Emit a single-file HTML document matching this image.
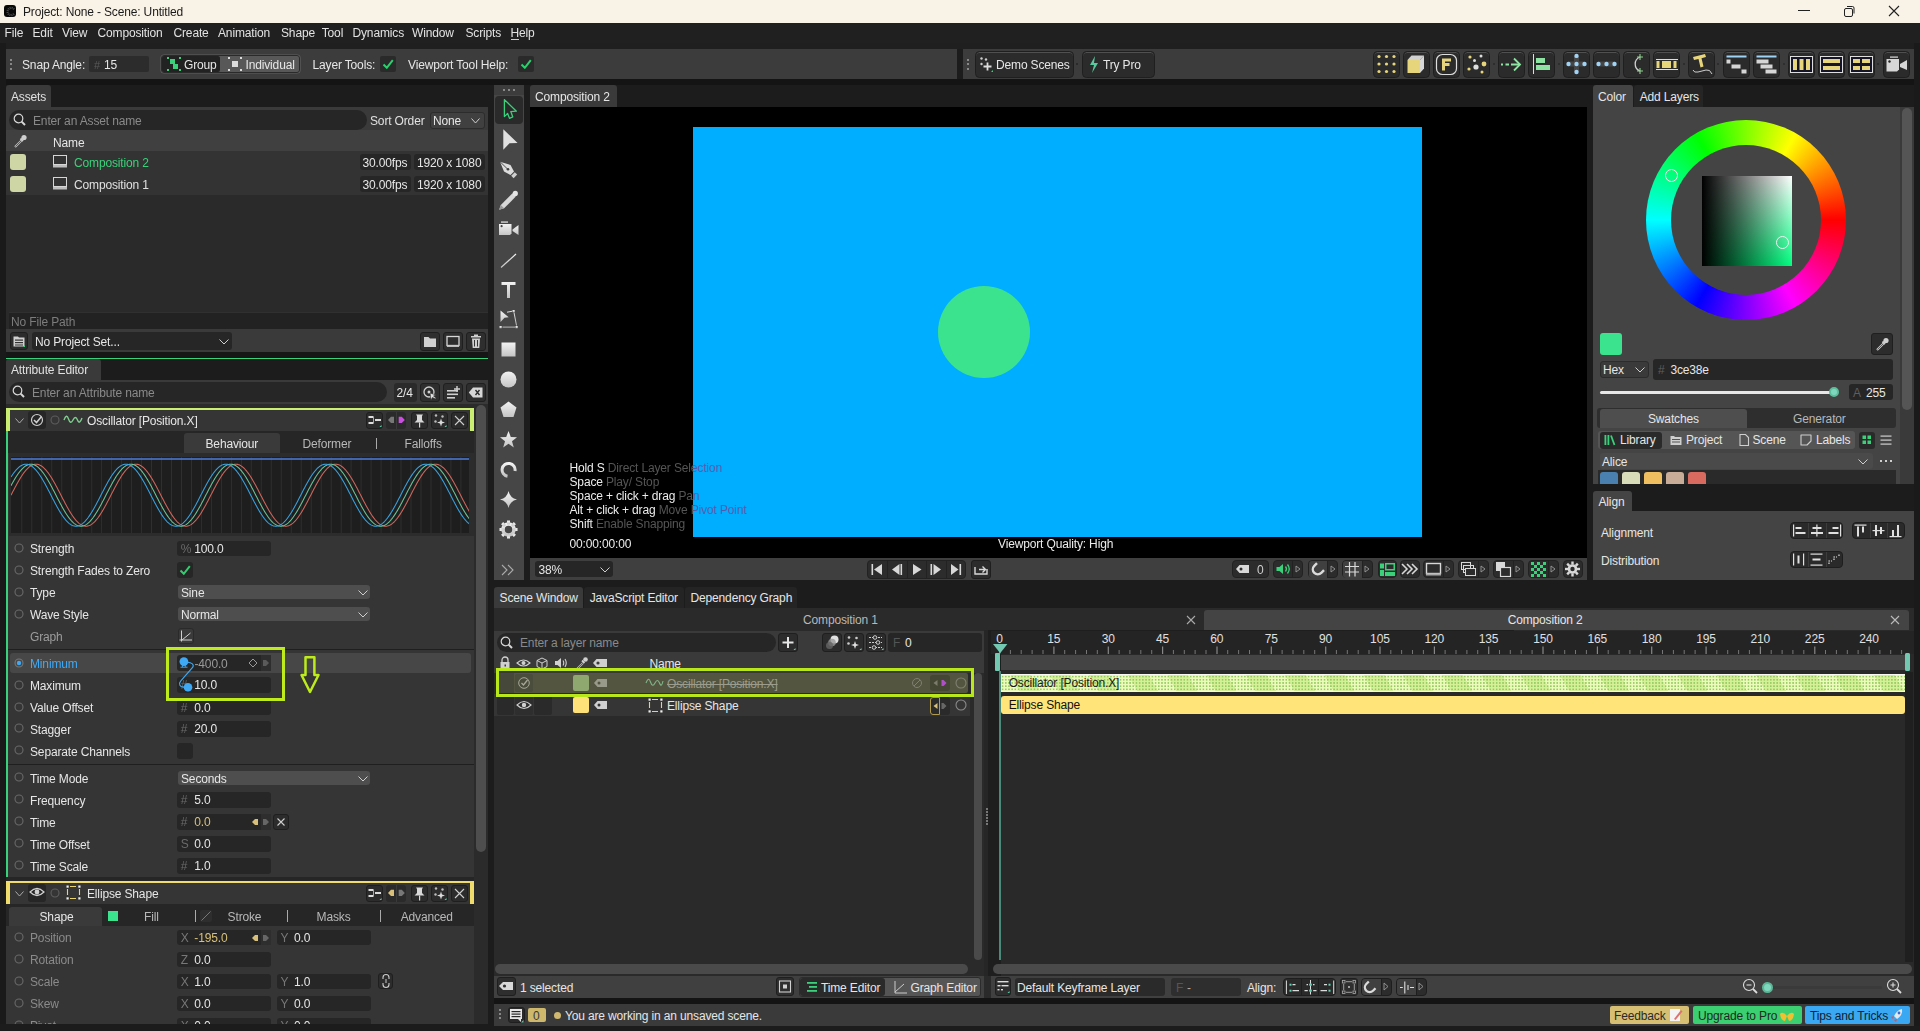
<!DOCTYPE html><html><head><meta charset="utf-8"><style>
*{margin:0;padding:0;box-sizing:border-box}
html,body{width:1920px;height:1031px;overflow:hidden;background:#1c1c1c;font-family:"Liberation Sans",sans-serif;font-size:12px;color:#dcdcdc}
.a{position:absolute}
.t{position:absolute;white-space:nowrap;letter-spacing:-0.15px}
</style></head><body><div class="a" style="left:0px;top:0px;width:1920px;height:23px;background:#f9f2e6;"></div>
<div class="a" style="left:3.8px;top:4.5px;width:12.5px;height:12.8px;background:#080808;border-radius:3px"></div>
<svg class="a" style="left:3.8px;top:4.5px;" width="13" height="13" viewBox="0 0 13 13"><path d="M10 4.3 A3.6 3.6 0 1 0 10 8.7" fill="none" stroke="#4a4a4a" stroke-width="2.2" stroke-dasharray="1 0.8"/></svg>
<div class="t" style="left:23px;top:3.5px;height:16px;line-height:16px;color:#1b1b1b;font-size:12px;">Project: None - Scene: Untitled</div>
<div class="a" style="left:1798px;top:10px;width:12px;height:1px;background:#222;"></div>
<svg class="a" style="left:1842px;top:4px;" width="14" height="14" viewBox="0 0 14 14"><rect x="2.5" y="4.5" width="8" height="8" rx="1.5" fill="none" stroke="#222" stroke-width="1"/><path d="M5 2.5h5.5a1.5 1.5 0 0 1 1.5 1.5v5.5" fill="none" stroke="#222" stroke-width="1"/></svg>
<svg class="a" style="left:1887px;top:4px;" width="14" height="14" viewBox="0 0 14 14"><path d="M2 2L12 12M12 2L2 12" stroke="#222" stroke-width="1.1"/></svg>
<div class="a" style="left:0px;top:23px;width:1920px;height:20px;background:#202020;"></div>
<div class="t" style="left:4.5px;top:24.5px;height:16px;line-height:16px;color:#e2e2e2;font-size:12px;">File</div>
<div class="t" style="left:32.5px;top:24.5px;height:16px;line-height:16px;color:#e2e2e2;font-size:12px;">Edit</div>
<div class="t" style="left:62px;top:24.5px;height:16px;line-height:16px;color:#e2e2e2;font-size:12px;">View</div>
<div class="t" style="left:97.5px;top:24.5px;height:16px;line-height:16px;color:#e2e2e2;font-size:12px;">Composition</div>
<div class="t" style="left:173.5px;top:24.5px;height:16px;line-height:16px;color:#e2e2e2;font-size:12px;">Create</div>
<div class="t" style="left:218px;top:24.5px;height:16px;line-height:16px;color:#e2e2e2;font-size:12px;">Animation</div>
<div class="t" style="left:281px;top:24.5px;height:16px;line-height:16px;color:#e2e2e2;font-size:12px;">Shape</div>
<div class="t" style="left:321.75px;top:24.5px;height:16px;line-height:16px;color:#e2e2e2;font-size:12px;">Tool</div>
<div class="t" style="left:352.5px;top:24.5px;height:16px;line-height:16px;color:#e2e2e2;font-size:12px;">Dynamics</div>
<div class="t" style="left:412px;top:24.5px;height:16px;line-height:16px;color:#e2e2e2;font-size:12px;">Window</div>
<div class="t" style="left:465.5px;top:24.5px;height:16px;line-height:16px;color:#e2e2e2;font-size:12px;">Scripts</div>
<div class="t" style="left:510.5px;top:24.5px;height:16px;line-height:16px;color:#e2e2e2;font-size:12px;">Help</div>
<div class="a" style="left:510.5px;top:39px;width:8px;height:1px;background:#cfcfcf;"></div>
<div class="a" style="left:0px;top:43px;width:1920px;height:6px;background:#1f1f1f;"></div>
<div class="a" style="left:0px;top:43px;width:6px;height:988px;background:#1a1a1a;"></div>
<div class="a" style="left:1914px;top:43px;width:6px;height:988px;background:#1a1a1a;"></div>
<div class="a" style="left:6px;top:49px;width:951px;height:30px;background:#3c3c3c;"></div>
<div class="a" style="left:10px;top:59.0px;width:2px;height:2px;background:#888;"></div>
<div class="a" style="left:10px;top:63.3px;width:2px;height:2px;background:#888;"></div>
<div class="a" style="left:10px;top:67.6px;width:2px;height:2px;background:#888;"></div>
<div class="t" style="left:22px;top:57.0px;height:16px;line-height:16px;color:#e6e6e6;font-size:12px;">Snap Angle:</div>
<div class="a" style="left:89px;top:56px;width:60px;height:16px;background:#2c2c2c;border-radius:2px"></div>
<div class="t" style="left:94px;top:57.0px;height:16px;line-height:16px;color:#5a5a5a;font-size:11px;">#</div>
<div class="t" style="left:104px;top:57.0px;height:16px;line-height:16px;color:#e6e6e6;font-size:12px;">15</div>
<div class="a" style="left:161px;top:55px;width:139px;height:18px;background:#585858;border-radius:3px;border:1px solid #2a2a2a;box-shadow:0 0 0 0.6px #606060"></div>
<div class="a" style="left:162px;top:56px;width:58px;height:16px;background:#222;border-radius:2px"></div>
<svg class="a" style="left:167px;top:57px;" width="14" height="14" viewBox="0 0 14 14"><rect x="0" y="0" width="2" height="2" fill="#3bd07a"/><rect x="12" y="0" width="2" height="2" fill="#3bd07a"/><rect x="0" y="12" width="2" height="2" fill="#3bd07a"/><rect x="12" y="12" width="2" height="2" fill="#3bd07a"/><rect x="3" y="2" width="5" height="5" fill="#3bd07a"/><rect x="6" y="7" width="5" height="5" fill="#3bd07a"/></svg>
<div class="t" style="left:184px;top:57.0px;height:16px;line-height:16px;color:#e6e6e6;font-size:12px;">Group</div>
<svg class="a" style="left:228px;top:57px;" width="14" height="14" viewBox="0 0 14 14"><rect x="0" y="0" width="2" height="2" fill="#ddd"/><rect x="12" y="0" width="2" height="2" fill="#ddd"/><rect x="0" y="12" width="2" height="2" fill="#ddd"/><rect x="12" y="12" width="2" height="2" fill="#ddd"/><rect x="4" y="4" width="6" height="6" fill="#ddd"/></svg>
<div class="t" style="left:245.5px;top:57.0px;height:16px;line-height:16px;color:#e6e6e6;font-size:12px;">Individual</div>
<div class="t" style="left:312.5px;top:57.0px;height:16px;line-height:16px;color:#e6e6e6;font-size:12px;">Layer Tools:</div>
<div class="a" style="left:380px;top:56px;width:16px;height:16px;background:#2a2a2a;border-radius:2px"></div>
<svg class="a" style="left:380px;top:56px;" width="16" height="16" viewBox="0 0 16 16"><path d="M3.5 8.5 L6.8 11.8 L12.8 4.2" fill="none" stroke="#2fcf6f" stroke-width="2"/></svg>
<div class="t" style="left:408px;top:57.0px;height:16px;line-height:16px;color:#e6e6e6;font-size:12px;">Viewport Tool Help:</div>
<div class="a" style="left:518px;top:56px;width:16px;height:16px;background:#2a2a2a;border-radius:2px"></div>
<svg class="a" style="left:518px;top:56px;" width="16" height="16" viewBox="0 0 16 16"><path d="M3.5 8.5 L6.8 11.8 L12.8 4.2" fill="none" stroke="#2fcf6f" stroke-width="2"/></svg>
<div class="a" style="left:963px;top:49px;width:951px;height:30px;background:#3c3c3c;"></div>
<div class="a" style="left:967px;top:59.0px;width:2px;height:2px;background:#888;"></div>
<div class="a" style="left:967px;top:63.3px;width:2px;height:2px;background:#888;"></div>
<div class="a" style="left:967px;top:67.6px;width:2px;height:2px;background:#888;"></div>
<div class="a" style="left:974.5px;top:51px;width:99px;height:27px;background:#2b2b2b;border-radius:4.5px;border:1px solid #1f1f1f;box-shadow:inset 0 1px 0 #505050"></div>
<svg class="a" style="left:979px;top:56px;" width="18" height="18" viewBox="0 0 18 18"><circle cx="2.5" cy="2.5" r="1.2" fill="#ccc"/><circle cx="7" cy="3.5" r="1.2" fill="#ccc"/><circle cx="2.5" cy="8" r="1.2" fill="#ccc"/><path d="M8.5 6.5v8M4.5 10.5h8" stroke="#ddd" stroke-width="1.8"/><path d="M12 16l2-2v2z" fill="#3bd07a"/></svg>
<div class="t" style="left:996px;top:57.0px;height:16px;line-height:16px;color:#e6e6e6;font-size:12px;">Demo Scenes</div>
<div class="a" style="left:1076px;top:63px;width:2px;height:2px;background:#2a2a2a;"></div>
<div class="a" style="left:1081.5px;top:51px;width:73.5px;height:27px;background:#2b2b2b;border-radius:4.5px;border:1px solid #1f1f1f;box-shadow:inset 0 1px 0 #505050"></div>
<svg class="a" style="left:1087px;top:56px;" width="14" height="18" viewBox="0 0 14 18"><path d="M8 0 L3 9 H7 L5 17 L11 7 H7 Z" fill="#57c99c"/></svg>
<div class="t" style="left:1103px;top:57.0px;height:16px;line-height:16px;color:#e6e6e6;font-size:12px;">Try Pro</div>
<div class="a" style="left:1372.5px;top:51px;width:27px;height:27px;background:#2b2b2b;border-radius:4.5px;border:1px solid #1f1f1f;box-shadow:inset 0 1px 0 #505050"></div>
<svg class="a" style="left:1372.5px;top:51px;" width="27" height="27" viewBox="0 0 27 27"><circle cx="6.0" cy="5.5" r="1.6" fill="#e6d57a"/><circle cx="6.0" cy="13.0" r="1.6" fill="#e6d57a"/><circle cx="6.0" cy="20.5" r="1.6" fill="#e6d57a"/><circle cx="13.5" cy="5.5" r="1.6" fill="#e6d57a"/><circle cx="13.5" cy="13.0" r="1.6" fill="#e6d57a"/><circle cx="13.5" cy="20.5" r="1.6" fill="#e6d57a"/><circle cx="21.0" cy="5.5" r="1.6" fill="#e6d57a"/><circle cx="21.0" cy="13.0" r="1.6" fill="#e6d57a"/><circle cx="21.0" cy="20.5" r="1.6" fill="#e6d57a"/></svg>
<div class="a" style="left:1402.5px;top:51px;width:27px;height:27px;background:#2b2b2b;border-radius:4.5px;border:1px solid #1f1f1f;box-shadow:inset 0 1px 0 #505050"></div>
<svg class="a" style="left:1402.5px;top:51px;" width="27" height="27" viewBox="0 0 27 27"><path d="M4.5 9 L8.5 4.5 H21 L17 9 Z" fill="#d0d0d0"/><path d="M17 9 L21 4.5 V17.5 L17 22 Z" fill="#d8d8d8"/><rect x="4.5" y="9" width="12.5" height="13" fill="#e6d57a"/></svg>
<div class="a" style="left:1432.5px;top:51px;width:27px;height:27px;background:#2b2b2b;border-radius:4.5px;border:1px solid #1f1f1f;box-shadow:inset 0 1px 0 #505050"></div>
<svg class="a" style="left:1432.5px;top:51px;" width="27" height="27" viewBox="0 0 27 27"><rect x="3.5" y="3.5" width="20" height="20" rx="6" fill="none" stroke="#dedede" stroke-width="1.2"/><rect x="9" y="7.5" width="3" height="12" fill="#e6d57a"/><rect x="12" y="7.5" width="6" height="3" fill="#e6d57a"/><rect x="12" y="12" width="4.5" height="3" fill="#e6d57a"/></svg>
<div class="a" style="left:1462.5px;top:51px;width:27px;height:27px;background:#2b2b2b;border-radius:4.5px;border:1px solid #1f1f1f;box-shadow:inset 0 1px 0 #505050"></div>
<svg class="a" style="left:1462.5px;top:51px;" width="27" height="27" viewBox="0 0 27 27"><circle cx="7" cy="6" r="1.6" fill="#e6d57a"/><circle cx="18" cy="5" r="1.5" fill="#dedede"/><circle cx="11.5" cy="9.5" r="1.5" fill="#dedede"/><circle cx="21" cy="13" r="2.4" fill="#e6d57a"/><circle cx="13" cy="16" r="2.6" fill="#dedede"/><circle cx="6" cy="18" r="1.6" fill="#e6d57a"/><circle cx="19" cy="21" r="1.5" fill="#e6d57a"/></svg>
<div class="a" style="left:1497.5px;top:51px;width:27px;height:27px;background:#2b2b2b;border-radius:4.5px;border:1px solid #1f1f1f;box-shadow:inset 0 1px 0 #505050"></div>
<svg class="a" style="left:1497.5px;top:51px;" width="27" height="27" viewBox="0 0 27 27"><path d="M3 13.5h2M7.5 13.5h3.5M13 13.5h8" stroke="#8fe3a2" stroke-width="1.8"/><path d="M16 7.5 L22 13.5 L16 19.5" fill="none" stroke="#8fe3a2" stroke-width="1.8"/></svg>
<div class="a" style="left:1527.5px;top:51px;width:27px;height:27px;background:#2b2b2b;border-radius:4.5px;border:1px solid #1f1f1f;box-shadow:inset 0 1px 0 #505050"></div>
<svg class="a" style="left:1527.5px;top:51px;" width="27" height="27" viewBox="0 0 27 27"><rect x="5" y="3" width="1" height="20" fill="#dedede"/><rect x="8" y="7" width="9" height="5" fill="#8fe3a2"/><rect x="8" y="14" width="14" height="5" fill="#8fe3a2"/></svg>
<div class="a" style="left:1562.5px;top:51px;width:27px;height:27px;background:#2b2b2b;border-radius:4.5px;border:1px solid #1f1f1f;box-shadow:inset 0 1px 0 #505050"></div>
<svg class="a" style="left:1562.5px;top:51px;" width="27" height="27" viewBox="0 0 27 27"><rect x="11" y="5" width="5" height="16" fill="#464646"/><rect x="5.5" y="10.5" width="16" height="5" fill="#464646"/><circle cx="13.5" cy="4.9" r="2.2" fill="#9fd3f5"/><circle cx="5.5" cy="13" r="2.2" fill="#9fd3f5"/><circle cx="13.5" cy="13" r="2.2" fill="#9fd3f5"/><circle cx="21.5" cy="13" r="2.2" fill="#9fd3f5"/><circle cx="13.5" cy="21" r="2.2" fill="#9fd3f5"/></svg>
<div class="a" style="left:1592.5px;top:51px;width:27px;height:27px;background:#2b2b2b;border-radius:4.5px;border:1px solid #1f1f1f;box-shadow:inset 0 1px 0 #505050"></div>
<svg class="a" style="left:1592.5px;top:51px;" width="27" height="27" viewBox="0 0 27 27"><rect x="5" y="10.5" width="17" height="5" fill="#464646"/><circle cx="5.5" cy="13" r="2.2" fill="#9fd3f5"/><circle cx="13.5" cy="13" r="2.2" fill="#9fd3f5"/><circle cx="21.5" cy="13" r="2.2" fill="#9fd3f5"/></svg>
<div class="a" style="left:1622.5px;top:51px;width:27px;height:27px;background:#2b2b2b;border-radius:4.5px;border:1px solid #1f1f1f;box-shadow:inset 0 1px 0 #505050"></div>
<svg class="a" style="left:1622.5px;top:51px;" width="27" height="27" viewBox="0 0 27 27"><path d="M17 6 A7.5 7.5 0 0 0 17 20" fill="none" stroke="#cfcfcf" stroke-width="1.3"/><path d="M17 3v6M14 6h6M17 17v6M14 20h6" stroke="#8fcf8f" stroke-width="1.1"/></svg>
<div class="a" style="left:1652.5px;top:51px;width:27px;height:27px;background:#2b2b2b;border-radius:4.5px;border:1px solid #1f1f1f;box-shadow:inset 0 1px 0 #505050"></div>
<svg class="a" style="left:1652.5px;top:51px;" width="27" height="27" viewBox="0 0 27 27"><rect x="3" y="8" width="22" height="1" fill="#dedede"/><rect x="3" y="18" width="22" height="1" fill="#dedede"/><rect x="3.5" y="10" width="3" height="7" fill="#e6d57a"/><rect x="9" y="10" width="9" height="7" fill="#e6d57a"/><rect x="20.5" y="10" width="3" height="7" fill="#e6d57a"/></svg>
<div class="a" style="left:1687.5px;top:51px;width:27px;height:27px;background:#2b2b2b;border-radius:4.5px;border:1px solid #1f1f1f;box-shadow:inset 0 1px 0 #505050"></div>
<svg class="a" style="left:1687.5px;top:51px;" width="27" height="27" viewBox="0 0 27 27"><path d="M5 6 L17 3 L18 6 L13.5 7.2 L15.5 15.5 L12.5 16.5 L10.5 8 L6 9 Z" fill="#e6d57a"/><path d="M5 19 Q6 22 10 21 T18 19 T24 23" fill="none" stroke="#cfcfcf" stroke-width="1"/></svg>
<div class="a" style="left:1722.5px;top:51px;width:27px;height:27px;background:#2b2b2b;border-radius:4.5px;border:1px solid #1f1f1f;box-shadow:inset 0 1px 0 #505050"></div>
<svg class="a" style="left:1722.5px;top:51px;" width="27" height="27" viewBox="0 0 27 27"><rect x="3.5" y="4.5" width="20" height="2" fill="#9fd3f5"/><rect x="3.5" y="8.5" width="4" height="4" fill="#d6d6d6"/><rect x="8.5" y="13.5" width="9" height="4" fill="#d6d6d6"/><rect x="18.5" y="18.5" width="5" height="4" fill="#d6d6d6"/></svg>
<div class="a" style="left:1752.5px;top:51px;width:27px;height:27px;background:#2b2b2b;border-radius:4.5px;border:1px solid #1f1f1f;box-shadow:inset 0 1px 0 #505050"></div>
<svg class="a" style="left:1752.5px;top:51px;" width="27" height="27" viewBox="0 0 27 27"><rect x="3.5" y="4.5" width="20" height="2" fill="#9fd3f5"/><rect x="3.5" y="8.5" width="12" height="4" fill="#d6d6d6"/><rect x="7.5" y="13.5" width="12" height="4" fill="#d6d6d6"/><rect x="12.5" y="18.5" width="11" height="4" fill="#d6d6d6"/></svg>
<div class="a" style="left:1787.5px;top:51px;width:27px;height:27px;background:#2b2b2b;border-radius:4.5px;border:1px solid #1f1f1f;box-shadow:inset 0 1px 0 #505050"></div>
<svg class="a" style="left:1787.5px;top:51px;" width="27" height="27" viewBox="0 0 27 27"><rect x="2.5" y="5.5" width="22" height="16" fill="#15152a" stroke="#dedede" stroke-width="1"/><rect x="5" y="8" width="4" height="11" fill="#e6d57a"/><rect x="11.5" y="8" width="4" height="11" fill="#e6d57a"/><rect x="18" y="8" width="4" height="11" fill="#e6d57a"/></svg>
<div class="a" style="left:1817.5px;top:51px;width:27px;height:27px;background:#2b2b2b;border-radius:4.5px;border:1px solid #1f1f1f;box-shadow:inset 0 1px 0 #505050"></div>
<svg class="a" style="left:1817.5px;top:51px;" width="27" height="27" viewBox="0 0 27 27"><rect x="2.5" y="5.5" width="22" height="16" fill="#15152a" stroke="#dedede" stroke-width="1"/><rect x="5" y="8" width="17" height="4" fill="#e6d57a"/><rect x="5" y="15" width="17" height="4" fill="#e6d57a"/></svg>
<div class="a" style="left:1847.5px;top:51px;width:27px;height:27px;background:#2b2b2b;border-radius:4.5px;border:1px solid #1f1f1f;box-shadow:inset 0 1px 0 #505050"></div>
<svg class="a" style="left:1847.5px;top:51px;" width="27" height="27" viewBox="0 0 27 27"><rect x="2.5" y="5.5" width="22" height="16" fill="#15152a" stroke="#dedede" stroke-width="1"/><rect x="5" y="8" width="7" height="4" fill="#e6d57a"/><rect x="14" y="8" width="8" height="4" fill="#e6d57a"/><rect x="5" y="15" width="7" height="4" fill="#e6d57a"/><rect x="14" y="15" width="8" height="4" fill="#e6d57a"/></svg>
<div class="a" style="left:1882.5px;top:51px;width:27px;height:27px;background:#2b2b2b;border-radius:4.5px;border:1px solid #1f1f1f;box-shadow:inset 0 1px 0 #505050"></div>
<svg class="a" style="left:1882.5px;top:51px;" width="27" height="27" viewBox="0 0 27 27"><rect x="7" y="5.5" width="8" height="1.2" fill="#dedede"/><path d="M3.5 8 H16 V18.5 L14 20.5 H3.5 Z" fill="#d6d6d6"/><circle cx="6.5" cy="10.5" r="1.2" fill="#222"/><path d="M17 13 L24 9 V19 L17 16 Z" fill="#d6d6d6"/></svg>
<div class="a" style="left:1492.75px;top:63px;width:2px;height:2px;background:#2a2a2a;border-radius:1px"></div>
<div class="a" style="left:1557.75px;top:63px;width:2px;height:2px;background:#2a2a2a;border-radius:1px"></div>
<div class="a" style="left:1683px;top:63px;width:2px;height:2px;background:#2a2a2a;border-radius:1px"></div>
<div class="a" style="left:1717px;top:63px;width:2px;height:2px;background:#2a2a2a;border-radius:1px"></div>
<div class="a" style="left:1783px;top:63px;width:2px;height:2px;background:#2a2a2a;border-radius:1px"></div>
<div class="a" style="left:1877px;top:63px;width:2px;height:2px;background:#2a2a2a;border-radius:1px"></div>
<div class="a" style="left:6px;top:79px;width:1908px;height:6px;background:#141414;"></div>
<div class="a" style="left:6px;top:85px;width:482px;height:22px;background:#1c1c1c;"></div>
<div class="a" style="left:6px;top:85px;width:45px;height:22px;background:#3a3a3a;border-radius:3px 3px 0 0"></div>
<div class="t" style="left:11px;top:89.0px;height:16px;line-height:16px;color:#e0e0e0;font-size:12px;">Assets</div>
<div class="a" style="left:6px;top:107px;width:482px;height:245px;background:#2a2a2a;"></div>
<div class="a" style="left:6px;top:107px;width:482px;height:23px;background:#3a3a3a;"></div>
<div class="a" style="left:9px;top:110px;width:358px;height:20px;background:#262626;border-radius:10px"></div>
<svg class="a" style="left:13px;top:113px;" width="14" height="14" viewBox="0 0 14 14"><circle cx="5.5" cy="5.5" r="4.3" fill="none" stroke="#d8d8d8" stroke-width="1.2"/><path d="M8.6 8.6 L12 12" stroke="#d8d8d8" stroke-width="2"/></svg>
<div class="t" style="left:33px;top:113.0px;height:16px;line-height:16px;color:#8a8a8a;font-size:12px;">Enter an Asset name</div>
<div class="t" style="left:370px;top:113.0px;height:16px;line-height:16px;color:#e0e0e0;font-size:12px;">Sort Order</div>
<div class="a" style="left:430px;top:111.5px;width:54.5px;height:17px;background:#404040;border-radius:3px;border:1px solid #2c2c2c"></div>
<div class="t" style="left:433px;top:113.0px;height:16px;line-height:16px;color:#e6e6e6;font-size:12px;">None</div>
<svg class="a" style="left:471px;top:118px;" width="9" height="6" viewBox="0 0 9 6"><path d="M0.5 0.5 L4.5 5 L8.5 0.5" fill="none" stroke="#cfcfcf" stroke-width="1"/></svg>
<div class="a" style="left:6px;top:130px;width:482px;height:21px;background:#404040;"></div>
<svg class="a" style="left:12px;top:133px;" width="16" height="16" viewBox="0 0 16 16"><path d="M3 14 L10 7" stroke="#bbb" stroke-width="2.2"/><path d="M3.5 13.5 L10 7" stroke="#444" stroke-width="0.8"/><circle cx="12" cy="4.5" r="2.6" fill="#cfcfcf"/><path d="M8.5 5.5 L11 8" stroke="#cfcfcf" stroke-width="2"/></svg>
<div class="t" style="left:53px;top:135.0px;height:16px;line-height:16px;color:#e6e6e6;font-size:12px;">Name</div>
<div class="a" style="left:6px;top:151px;width:482px;height:22px;background:#333333;"></div>
<div class="a" style="left:10px;top:154px;width:16px;height:16px;background:#cfd6a6;border-radius:3px"></div>
<svg class="a" style="left:53px;top:155px;" width="15" height="13" viewBox="0 0 15 13"><rect x="0.5" y="0.5" width="13" height="9" fill="none" stroke="#d6d6d6" stroke-width="1"/><rect x="0" y="10" width="14" height="2.5" fill="#bdbdbd"/></svg>
<div class="t" style="left:74px;top:155.0px;height:16px;line-height:16px;color:#3bd07a;font-size:12px;">Composition 2</div>
<div class="a" style="left:360px;top:154px;width:50.5px;height:15.5px;background:#262626;border-radius:3px"></div>
<div class="t" style="left:362.5px;top:154.5px;height:16px;line-height:16px;color:#e6e6e6;font-size:12px;">30.00fps</div>
<div class="a" style="left:414px;top:154px;width:70.5px;height:15.5px;background:#262626;border-radius:3px"></div>
<div class="t" style="left:417px;top:154.5px;height:16px;line-height:16px;color:#e6e6e6;font-size:12px;">1920 x 1080</div>
<div class="a" style="left:6px;top:173px;width:482px;height:22px;background:#333333;"></div>
<div class="a" style="left:10px;top:176px;width:16px;height:16px;background:#cfd6a6;border-radius:3px"></div>
<svg class="a" style="left:53px;top:177px;" width="15" height="13" viewBox="0 0 15 13"><rect x="0.5" y="0.5" width="13" height="9" fill="none" stroke="#d6d6d6" stroke-width="1"/><rect x="0" y="10" width="14" height="2.5" fill="#bdbdbd"/></svg>
<div class="t" style="left:74px;top:177.0px;height:16px;line-height:16px;color:#e0e0e0;font-size:12px;">Composition 1</div>
<div class="a" style="left:360px;top:176px;width:50.5px;height:15.5px;background:#262626;border-radius:3px"></div>
<div class="t" style="left:362.5px;top:176.5px;height:16px;line-height:16px;color:#e6e6e6;font-size:12px;">30.00fps</div>
<div class="a" style="left:414px;top:176px;width:70.5px;height:15.5px;background:#262626;border-radius:3px"></div>
<div class="t" style="left:417px;top:176.5px;height:16px;line-height:16px;color:#e6e6e6;font-size:12px;">1920 x 1080</div>
<div class="a" style="left:9px;top:312px;width:479px;height:16.5px;background:#222222;border-top:1px solid #303030"></div>
<div class="t" style="left:11px;top:313.6px;height:16px;line-height:16px;color:#7c7c7c;font-size:12px;">No File Path</div>
<div class="a" style="left:6px;top:328.5px;width:482px;height:23px;background:#3a3a3a;"></div>
<div class="a" style="left:9.5px;top:331.5px;width:18.5px;height:18.5px;background:#2c2c2c;border-radius:3px;border:1px solid #1f1f1f;"></div>
<svg class="a" style="left:12px;top:334px;" width="14" height="14" viewBox="0 0 14 14"><path d="M1.5 2.5 H6 L7 3.5 H12.5 V12.5 H1.5 Z" fill="#d0d0d0"/><rect x="3" y="5.5" width="8" height="1.2" fill="#333"/><rect x="3" y="8" width="8" height="1.2" fill="#333"/><rect x="3" y="10.5" width="8" height="1" fill="#333"/><path d="M11 13 L13 11 V13Z" fill="#3bd07a"/></svg>
<div class="a" style="left:32px;top:332px;width:200px;height:18px;background:#262626;border-radius:3px"></div>
<div class="t" style="left:35px;top:334.0px;height:16px;line-height:16px;color:#e6e6e6;font-size:12px;">No Project Set...</div>
<svg class="a" style="left:218.5px;top:338.5px;" width="10" height="6" viewBox="0 0 10 6"><path d="M0.5 0.5 L5.0 5 L9.5 0.5" fill="none" stroke="#cfcfcf" stroke-width="1"/></svg>
<div class="a" style="left:420px;top:332px;width:19.5px;height:18.5px;background:#2e2e2e;border-radius:3px;border:1px solid #1f1f1f;"></div>
<div class="a" style="left:443px;top:332px;width:19.5px;height:18.5px;background:#2e2e2e;border-radius:3px;border:1px solid #1f1f1f;"></div>
<div class="a" style="left:466px;top:332px;width:19.5px;height:18.5px;background:#2e2e2e;border-radius:3px;border:1px solid #1f1f1f;"></div>
<svg class="a" style="left:423px;top:335px;" width="14" height="13" viewBox="0 0 14 13"><path d="M1 2 H5.5 L7 3.5 H13 V12 H1 Z" fill="#d0d0d0"/></svg>
<svg class="a" style="left:446px;top:335px;" width="14" height="13" viewBox="0 0 14 13"><rect x="1" y="1.5" width="12" height="9" fill="none" stroke="#d6d6d6" stroke-width="1.3"/><rect x="1" y="10.5" width="12" height="1.5" fill="#bbb"/></svg>
<svg class="a" style="left:469px;top:334px;" width="14" height="15" viewBox="0 0 14 15"><rect x="2" y="2" width="10" height="1.5" fill="#d0d0d0"/><rect x="5" y="0.5" width="4" height="1.5" fill="#d0d0d0"/><path d="M3 4.5 H11 L10.3 14 H3.7 Z" fill="#d0d0d0"/><rect x="5" y="6" width="1" height="6.5" fill="#333"/><rect x="8" y="6" width="1" height="6.5" fill="#333"/></svg>
<div class="a" style="left:6px;top:351.5px;width:482px;height:7px;background:#161616;"></div>
<div class="a" style="left:6px;top:358px;width:482px;height:1.2px;background:#3bd07a;"></div>
<div class="a" style="left:6px;top:359px;width:482px;height:21px;background:#1c1c1c;"></div>
<div class="a" style="left:6px;top:359px;width:95px;height:21px;background:#3a3a3a;border-radius:3px 3px 0 0"></div>
<div class="t" style="left:11px;top:362.5px;height:16px;line-height:16px;color:#e0e0e0;font-size:12px;"></div>
<div class="t" style="left:11px;top:361.7px;height:16px;line-height:16px;color:#e0e0e0;font-size:12px;">Attribute Editor</div>
<div class="a" style="left:6px;top:380px;width:482px;height:28px;background:#3a3a3a;"></div>
<div class="a" style="left:9px;top:382px;width:378px;height:20px;background:#262626;border-radius:10px"></div>
<svg class="a" style="left:12px;top:385px;" width="14" height="14" viewBox="0 0 14 14"><circle cx="5.5" cy="5.5" r="4.3" fill="none" stroke="#d8d8d8" stroke-width="1.2"/><path d="M8.6 8.6 L12 12" stroke="#d8d8d8" stroke-width="2"/></svg>
<div class="t" style="left:32px;top:385.0px;height:16px;line-height:16px;color:#8a8a8a;font-size:12px;">Enter an Attribute name</div>
<div class="a" style="left:394px;top:383px;width:22.5px;height:19px;background:#2a2a2a;border-radius:3px"></div>
<div class="t" style="left:396.5px;top:385.0px;height:16px;line-height:16px;color:#e6e6e6;font-size:12px;">2/4</div>
<div class="a" style="left:420px;top:383px;width:19.5px;height:19px;background:#2e2e2e;border-radius:3px;border:1px solid #1f1f1f;"></div>
<div class="a" style="left:443px;top:383px;width:19.5px;height:19px;background:#2e2e2e;border-radius:3px;border:1px solid #1f1f1f;"></div>
<div class="a" style="left:466px;top:383px;width:19.5px;height:19px;background:#2e2e2e;border-radius:3px;border:1px solid #1f1f1f;"></div>
<svg class="a" style="left:422px;top:385px;" width="16" height="16" viewBox="0 0 16 16"><circle cx="7" cy="7" r="5" fill="none" stroke="#d0d0d0" stroke-width="1.3"/><circle cx="7" cy="7" r="1.5" fill="#d0d0d0"/><path d="M8 8 L9 15 L10.5 12.5 L13.5 14 L14 13 L11.5 11 L14 10 Z" fill="#e0e0e0" stroke="#2e2e2e" stroke-width="0.6"/></svg>
<svg class="a" style="left:445px;top:385px;" width="16" height="16" viewBox="0 0 16 16"><rect x="2" y="5" width="11" height="1.6" fill="#d0d0d0"/><rect x="2" y="8.5" width="11" height="1.6" fill="#d0d0d0"/><rect x="2" y="12" width="8" height="1.6" fill="#d0d0d0"/><path d="M12 1v6M9 4h6" stroke="#d0d0d0" stroke-width="1.4"/></svg>
<svg class="a" style="left:468px;top:386px;" width="16" height="13" viewBox="0 0 16 13"><path d="M5 1.5 H14.5 V11.5 H5 L0.8 6.5 Z" fill="#d6d6d6"/><path d="M7.5 4 L11.5 9M11.5 4 L7.5 9" stroke="#2e2e2e" stroke-width="1.4"/></svg>
<div class="a" style="left:6px;top:404px;width:482px;height:620px;background:#2b2b2b;"></div>
<div class="a" style="left:476px;top:405px;width:10px;height:447px;background:#4e4e4e;border-radius:5px"></div>
<div class="a" style="left:6px;top:408px;width:468px;height:23px;background:#353535;"></div>
<div class="a" style="left:6px;top:408px;width:468px;height:1.5px;background:#c9ee72;"></div>
<div class="a" style="left:6px;top:408px;width:4px;height:23px;background:#c9ee72;"></div>
<div class="a" style="left:470px;top:408px;width:4px;height:23px;background:#c9ee72;"></div>
<svg class="a" style="left:15px;top:417.5px;" width="9" height="6" viewBox="0 0 9 6"><path d="M0.5 0.5 L4.5 5 L8.5 0.5" fill="none" stroke="#aaa" stroke-width="1"/></svg>
<div class="a" style="left:28px;top:410.5px;width:18px;height:18px;background:#262626;border-radius:3px"></div>
<svg class="a" style="left:29px;top:411.5px;" width="16" height="16" viewBox="0 0 16 16"><circle cx="8" cy="8" r="5.5" fill="none" stroke="#cfcfcf" stroke-width="1.2"/><path d="M5 8 L7.5 10.5 L12.5 4.5" fill="none" stroke="#cfcfcf" stroke-width="1.6"/></svg>
<svg class="a" style="left:50px;top:414.5px;" width="10" height="10" viewBox="0 0 10 10"><circle cx="5" cy="5" r="4" fill="none" stroke="#5e5e5e" stroke-width="1.1"/></svg>
<svg class="a" style="left:63px;top:411px;" width="20" height="16" viewBox="0 0 20 16"><path d="M1 9 Q3.5 2 5.5 8 T10 9 T14.5 9 T19 7" fill="none" stroke="#7fcf8f" stroke-width="1.4"/></svg>
<div class="t" style="left:87px;top:412.5px;height:16px;line-height:16px;color:#e6e6e6;font-size:12px;">Oscillator [Position.X]</div>
<div class="a" style="left:366px;top:412px;width:16.5px;height:16.5px;background:#2c2c2c;border-radius:3px;border:1px solid #1f1f1f;"></div>
<div class="a" style="left:411px;top:412px;width:16.5px;height:16.5px;background:#2c2c2c;border-radius:3px;border:1px solid #1f1f1f;"></div>
<div class="a" style="left:431px;top:412px;width:16.5px;height:16.5px;background:#2c2c2c;border-radius:3px;border:1px solid #1f1f1f;"></div>
<div class="a" style="left:451px;top:412px;width:16.5px;height:16.5px;background:#2c2c2c;border-radius:3px;border:1px solid #1f1f1f;"></div>
<div class="a" style="left:386px;top:412px;width:20px;height:16.5px;background:#2a2a2a;border-radius:3px"></div>
<div class="a" style="left:396px;top:412px;width:1px;height:16.5px;background:#3a3a3a;"></div>
<svg class="a" style="left:366px;top:412px;" width="17" height="17" viewBox="0 0 17 17"><rect x="2.5" y="4" width="5" height="2" fill="#ddd"/><rect x="2.5" y="10" width="5" height="2" fill="#ddd"/><rect x="7" y="5" width="1" height="6" fill="#aaa"/><rect x="9" y="7" width="6" height="2" fill="#ddd"/><path d="M13.5 15 L15.5 13 V15Z" fill="#5fd4b0"/></svg>
<svg class="a" style="left:386px;top:412px;" width="20" height="17" viewBox="0 0 20 17"><path d="M8 4.8 V11 H5 L2 7.9 L5 4.8Z" fill="#777"/><path d="M12.7 4.8 H15.8 L18.8 7.9 L15.8 11 H12.7Z" fill="#c84fe0"/></svg>
<svg class="a" style="left:411px;top:412px;" width="17" height="17" viewBox="0 0 17 17"><path d="M5 2.5 H12 L11 4 V8 L13.5 10.5 H3.5 L6 8 V4Z" fill="#d8d8d8"/><rect x="8" y="10.5" width="1.2" height="5" fill="#d8d8d8"/></svg>
<svg class="a" style="left:431px;top:412px;" width="17" height="17" viewBox="0 0 17 17"><circle cx="5" cy="3.5" r="1.2" fill="#bbb"/><circle cx="11.5" cy="4.5" r="1.2" fill="#bbb"/><circle cx="4.5" cy="9.5" r="1.2" fill="#bbb"/><path d="M10 6.5 L11 9.5 L14 10.5 L11 11.5 L10 14.5 L9 11.5 L6 10.5 L9 9.5Z" fill="#ddd"/><path d="M13.5 15 L15.5 13 V15Z" fill="#5fd4b0"/></svg>
<svg class="a" style="left:451px;top:412px;" width="17" height="17" viewBox="0 0 17 17"><path d="M4 4 L13 13M13 4 L4 13" stroke="#d0d0d0" stroke-width="1.1"/></svg>
<div class="a" style="left:6px;top:431px;width:1.5px;height:446px;background:#3bd07a;"></div>
<div class="a" style="left:7.5px;top:431px;width:466.5px;height:22px;background:#262626;"></div>
<div class="a" style="left:184px;top:433px;width:96px;height:20px;background:#3a3a3a;border-radius:3px 3px 0 0"></div>
<div class="t" style="left:205.5px;top:435.5px;height:16px;line-height:16px;color:#e6e6e6;font-size:12px;">Behaviour</div>
<div class="t" style="left:302.5px;top:435.5px;height:16px;line-height:16px;color:#b8b8b8;font-size:12px;">Deformer</div>
<div class="a" style="left:375.8px;top:438px;width:1px;height:11px;background:#aaa;"></div>
<div class="t" style="left:404.5px;top:435.5px;height:16px;line-height:16px;color:#b8b8b8;font-size:12px;">Falloffs</div>
<div class="a" style="left:7.5px;top:453px;width:466.5px;height:424px;background:#353535;"></div>
<div class="a" style="left:9px;top:453px;width:465px;height:83px;background:#2c2c2c;"></div>
<svg class="a" style="left:11px;top:456.5px;" width="458" height="76.5" viewBox="0 0 458 76.5"><rect x="0" y="0" width="458" height="76.5" fill="#1e1e1e"/><rect x="10.3" y="0" width="1" height="76.5" fill="#2f2f2f"/><rect x="20.3" y="0" width="1" height="76.5" fill="#2f2f2f"/><rect x="30.3" y="0" width="1" height="76.5" fill="#2f2f2f"/><rect x="40.2" y="0" width="1" height="76.5" fill="#2f2f2f"/><rect x="50.2" y="0" width="1" height="76.5" fill="#2f2f2f"/><rect x="60.2" y="0" width="1" height="76.5" fill="#2f2f2f"/><rect x="70.2" y="0" width="1" height="76.5" fill="#2f2f2f"/><rect x="80.2" y="0" width="1" height="76.5" fill="#2f2f2f"/><rect x="90.1" y="0" width="1" height="76.5" fill="#2f2f2f"/><rect x="100.1" y="0" width="1" height="76.5" fill="#2f2f2f"/><rect x="110.1" y="0" width="1" height="76.5" fill="#2f2f2f"/><rect x="120.1" y="0" width="1" height="76.5" fill="#2f2f2f"/><rect x="130.1" y="0" width="1" height="76.5" fill="#2f2f2f"/><rect x="140.0" y="0" width="1" height="76.5" fill="#2f2f2f"/><rect x="150.0" y="0" width="1" height="76.5" fill="#2f2f2f"/><rect x="160.0" y="0" width="1" height="76.5" fill="#2f2f2f"/><rect x="170.0" y="0" width="1" height="76.5" fill="#2f2f2f"/><rect x="180.0" y="0" width="1" height="76.5" fill="#2f2f2f"/><rect x="189.9" y="0" width="1" height="76.5" fill="#2f2f2f"/><rect x="199.9" y="0" width="1" height="76.5" fill="#2f2f2f"/><rect x="209.9" y="0" width="1" height="76.5" fill="#2f2f2f"/><rect x="219.9" y="0" width="1" height="76.5" fill="#2f2f2f"/><rect x="229.9" y="0" width="1" height="76.5" fill="#2f2f2f"/><rect x="239.8" y="0" width="1" height="76.5" fill="#2f2f2f"/><rect x="249.8" y="0" width="1" height="76.5" fill="#2f2f2f"/><rect x="259.8" y="0" width="1" height="76.5" fill="#2f2f2f"/><rect x="269.8" y="0" width="1" height="76.5" fill="#2f2f2f"/><rect x="279.8" y="0" width="1" height="76.5" fill="#2f2f2f"/><rect x="289.7" y="0" width="1" height="76.5" fill="#2f2f2f"/><rect x="299.7" y="0" width="1" height="76.5" fill="#2f2f2f"/><rect x="309.7" y="0" width="1" height="76.5" fill="#2f2f2f"/><rect x="319.7" y="0" width="1" height="76.5" fill="#2f2f2f"/><rect x="329.7" y="0" width="1" height="76.5" fill="#2f2f2f"/><rect x="339.6" y="0" width="1" height="76.5" fill="#2f2f2f"/><rect x="349.6" y="0" width="1" height="76.5" fill="#2f2f2f"/><rect x="359.6" y="0" width="1" height="76.5" fill="#2f2f2f"/><rect x="369.6" y="0" width="1" height="76.5" fill="#2f2f2f"/><rect x="379.6" y="0" width="1" height="76.5" fill="#2f2f2f"/><rect x="389.5" y="0" width="1" height="76.5" fill="#2f2f2f"/><rect x="399.5" y="0" width="1" height="76.5" fill="#2f2f2f"/><rect x="409.5" y="0" width="1" height="76.5" fill="#2f2f2f"/><rect x="419.5" y="0" width="1" height="76.5" fill="#2f2f2f"/><rect x="429.5" y="0" width="1" height="76.5" fill="#2f2f2f"/><rect x="439.4" y="0" width="1" height="76.5" fill="#2f2f2f"/><rect x="449.4" y="0" width="1" height="76.5" fill="#2f2f2f"/><rect x="0" y="1.2" width="458" height="1.6" fill="#4b78d0"/><polyline points="0.0,38.25 0.5,37.27 1.0,36.30 1.5,35.33 2.0,34.36 2.5,33.39 3.0,32.43 3.5,31.48 4.0,30.53 4.5,29.59 5.0,28.66 5.5,27.73 6.0,26.82 6.5,25.92 7.0,25.03 7.5,24.16 8.0,23.29 8.5,22.45 9.0,21.62 9.5,20.80 10.0,20.00 10.5,19.22 11.0,18.46 11.5,17.72 12.0,17.00 12.5,16.30 13.0,15.62 13.5,14.96 14.0,14.33 14.5,13.72 15.0,13.13 15.5,12.57 16.0,12.04 16.5,11.53 17.0,11.04 17.5,10.59 18.0,10.16 18.5,9.75 19.0,9.38 19.5,9.04 20.0,8.72 20.5,8.43 21.0,8.18 21.5,7.95 22.0,7.75 22.5,7.58 23.0,7.44 23.5,7.34 24.0,7.26 24.5,7.22 25.0,7.20 25.5,7.22 26.0,7.26 26.5,7.34 27.0,7.44 27.5,7.58 28.0,7.75 28.5,7.95 29.0,8.18 29.5,8.43 30.0,8.72 30.5,9.04 31.0,9.38 31.5,9.75 32.0,10.16 32.5,10.59 33.0,11.04 33.5,11.53 34.0,12.04 34.5,12.57 35.0,13.13 35.5,13.72 36.0,14.33 36.5,14.96 37.0,15.62 37.5,16.30 38.0,17.00 38.5,17.72 39.0,18.46 39.5,19.22 40.0,20.00 40.5,20.80 41.0,21.62 41.5,22.45 42.0,23.29 42.5,24.16 43.0,25.03 43.5,25.92 44.0,26.82 44.5,27.73 45.0,28.66 45.5,29.59 46.0,30.53 46.5,31.48 47.0,32.43 47.5,33.39 48.0,34.36 48.5,35.33 49.0,36.30 49.5,37.27 50.0,38.25 50.5,39.22 51.0,40.20 51.5,41.17 52.0,42.14 52.5,43.10 53.0,44.06 53.5,45.02 54.0,45.96 54.5,46.90 55.0,47.84 55.5,48.76 56.0,49.67 56.5,50.57 57.0,51.46 57.5,52.33 58.0,53.19 58.5,54.04 59.0,54.87 59.5,55.68 60.0,56.48 60.5,57.25 61.0,58.01 61.5,58.75 62.0,59.47 62.5,60.17 63.0,60.85 63.5,61.50 64.0,62.13 64.5,62.74 65.0,63.33 65.5,63.88 66.0,64.42 66.5,64.92 67.0,65.40 67.5,65.86 68.0,66.29 68.5,66.68 69.0,67.05 69.5,67.40 70.0,67.71 70.5,67.99 71.0,68.25 71.5,68.47 72.0,68.67 72.5,68.83 73.0,68.97 73.5,69.07 74.0,69.14 74.5,69.19 75.0,69.20 75.5,69.18 76.0,69.13 76.5,69.05 77.0,68.94 77.5,68.80 78.0,68.63 78.5,68.43 79.0,68.20 79.5,67.94 80.0,67.65 80.5,67.33 81.0,66.98 81.5,66.61 82.0,66.20 82.5,65.77 83.0,65.31 83.5,64.82 84.0,64.31 84.5,63.77 85.0,63.21 85.5,62.62 86.0,62.01 86.5,61.37 87.0,60.72 87.5,60.03 88.0,59.33 88.5,58.61 89.0,57.86 89.5,57.10 90.0,56.32 90.5,55.52 91.0,54.70 91.5,53.87 92.0,53.02 92.5,52.16 93.0,51.28 93.5,50.39 94.0,49.49 94.5,48.57 95.0,47.65 95.5,46.72 96.0,45.78 96.5,44.83 97.0,43.87 97.5,42.91 98.0,41.94 98.5,40.97 99.0,40.00 99.5,39.03 100.0,38.05 100.5,37.08 101.0,36.11 101.5,35.13 102.0,34.17 102.5,33.20 103.0,32.24 103.5,31.29 104.0,30.34 104.5,29.40 105.0,28.47 105.5,27.55 106.0,26.64 106.5,25.74 107.0,24.86 107.5,23.98 108.0,23.12 108.5,22.28 109.0,21.45 109.5,20.64 110.0,19.84 110.5,19.07 111.0,18.31 111.5,17.57 112.0,16.86 112.5,16.16 113.0,15.48 113.5,14.83 114.0,14.20 114.5,13.60 115.0,13.02 115.5,12.46 116.0,11.93 116.5,11.43 117.0,10.95 117.5,10.50 118.0,10.07 118.5,9.68 119.0,9.31 119.5,8.97 120.0,8.66 120.5,8.38 121.0,8.13 121.5,7.91 122.0,7.71 122.5,7.55 123.0,7.42 123.5,7.32 124.0,7.25 124.5,7.21 125.0,7.20 125.5,7.22 126.0,7.27 126.5,7.36 127.0,7.47 127.5,7.61 128.0,7.79 128.5,7.99 129.0,8.22 129.5,8.49 130.0,8.78 130.5,9.10 131.0,9.45 131.5,9.83 132.0,10.24 132.5,10.67 133.0,11.14 133.5,11.63 134.0,12.14 134.5,12.68 135.0,13.25 135.5,13.84 136.0,14.45 136.5,15.09 137.0,15.75 137.5,16.44 138.0,17.14 138.5,17.87 139.0,18.61 139.5,19.38 140.0,20.16 140.5,20.96 141.0,21.78 141.5,22.62 142.0,23.47 142.5,24.33 143.0,25.21 143.5,26.10 144.0,27.00 144.5,27.92 145.0,28.84 145.5,29.78 146.0,30.72 146.5,31.67 147.0,32.63 147.5,33.59 148.0,34.55 148.5,35.52 149.0,36.49 149.5,37.47 150.0,38.44 150.5,39.42 151.0,40.39 151.5,41.36 152.0,42.33 152.5,43.29 153.0,44.25 153.5,45.21 154.0,46.15 154.5,47.09 155.0,48.02 155.5,48.94 156.0,49.85 156.5,50.75 157.0,51.63 157.5,52.50 158.0,53.36 158.5,54.20 159.0,55.03 159.5,55.84 160.0,56.63 160.5,57.41 161.0,58.16 161.5,58.90 162.0,59.61 162.5,60.31 163.0,60.98 163.5,61.63 164.0,62.26 164.5,62.86 165.0,63.44 165.5,63.99 166.0,64.52 166.5,65.02 167.0,65.50 167.5,65.95 168.0,66.37 168.5,66.76 169.0,67.13 169.5,67.46 170.0,67.77 170.5,68.05 171.0,68.30 171.5,68.51 172.0,68.70 172.5,68.86 173.0,68.99 173.5,69.09 174.0,69.16 174.5,69.19 175.0,69.20 175.5,69.17 176.0,69.12 176.5,69.03 177.0,68.92 177.5,68.77 178.0,68.59 178.5,68.39 179.0,68.15 179.5,67.88 180.0,67.59 180.5,67.26 181.0,66.91 181.5,66.53 182.0,66.12 182.5,65.68 183.0,65.22 183.5,64.72 184.0,64.21 184.5,63.66 185.0,63.09 185.5,62.50 186.0,61.88 186.5,61.24 187.0,60.58 187.5,59.90 188.0,59.19 188.5,58.46 189.0,57.71 189.5,56.95 190.0,56.16 190.5,55.36 191.0,54.54 191.5,53.70 192.0,52.85 192.5,51.98 193.0,51.10 193.5,50.21 194.0,49.30 194.5,48.39 195.0,47.46 195.5,46.53 196.0,45.59 196.5,44.64 197.0,43.68 197.5,42.72 198.0,41.75 198.5,40.78 199.0,39.81 199.5,38.83 200.0,37.86 200.5,36.88 201.0,35.91 201.5,34.94 202.0,33.97 202.5,33.01 203.0,32.05 203.5,31.10 204.0,30.15 204.5,29.22 205.0,28.29 205.5,27.37 206.0,26.46 206.5,25.56 207.0,24.68 207.5,23.81 208.0,22.95 208.5,22.11 209.0,21.29 209.5,20.48 210.0,19.69 210.5,18.92 211.0,18.16 211.5,17.43 212.0,16.71 212.5,16.02 213.0,15.35 213.5,14.71 214.0,14.08 214.5,13.48 215.0,12.90 215.5,12.35 216.0,11.83 216.5,11.33 217.0,10.86 217.5,10.41 218.0,9.99 218.5,9.60 219.0,9.24 219.5,8.91 220.0,8.60 220.5,8.33 221.0,8.08 221.5,7.87 222.0,7.68 222.5,7.52 223.0,7.40 223.5,7.30 224.0,7.24 224.5,7.21 225.0,7.20 225.5,7.23 226.0,7.29 226.5,7.38 227.0,7.50 227.5,7.65 228.0,7.83 228.5,8.04 229.0,8.28 229.5,8.54 230.0,8.84 230.5,9.17 231.0,9.53 231.5,9.91 232.0,10.32 232.5,10.76 233.0,11.23 233.5,11.73 234.0,12.25 234.5,12.79 235.0,13.36 235.5,13.96 236.0,14.58 236.5,15.22 237.0,15.89 237.5,16.57 238.0,17.28 238.5,18.01 239.0,18.76 239.5,19.53 240.0,20.32 240.5,21.12 241.0,21.95 241.5,22.78 242.0,23.64 242.5,24.51 243.0,25.39 243.5,26.28 244.0,27.19 244.5,28.10 245.0,29.03 245.5,29.96 246.0,30.91 246.5,31.86 247.0,32.82 247.5,33.78 248.0,34.75 248.5,35.72 249.0,36.69 249.5,37.66 250.0,38.64 250.5,39.61 251.0,40.59 251.5,41.56 252.0,42.52 252.5,43.49 253.0,44.44 253.5,45.40 254.0,46.34 254.5,47.28 255.0,48.21 255.5,49.12 256.0,50.03 256.5,50.92 257.0,51.81 257.5,52.68 258.0,53.53 258.5,54.37 259.0,55.19 259.5,56.00 260.0,56.79 260.5,57.56 261.0,58.31 261.5,59.04 262.0,59.76 262.5,60.45 263.0,61.11 263.5,61.76 264.0,62.38 264.5,62.98 265.0,63.55 265.5,64.10 266.0,64.62 266.5,65.12 267.0,65.59 267.5,66.03 268.0,66.45 268.5,66.84 269.0,67.19 269.5,67.53 270.0,67.83 270.5,68.10 271.0,68.34 271.5,68.55 272.0,68.74 272.5,68.89 273.0,69.01 273.5,69.10 274.0,69.17 274.5,69.20 275.0,69.20 275.5,69.17 276.0,69.10 276.5,69.01 277.0,68.89 277.5,68.74 278.0,68.55 278.5,68.34 279.0,68.10 279.5,67.83 280.0,67.53 280.5,67.19 281.0,66.84 281.5,66.45 282.0,66.03 282.5,65.59 283.0,65.12 283.5,64.62 284.0,64.10 284.5,63.55 285.0,62.98 285.5,62.38 286.0,61.76 286.5,61.11 287.0,60.45 287.5,59.76 288.0,59.04 288.5,58.31 289.0,57.56 289.5,56.79 290.0,56.00 290.5,55.19 291.0,54.37 291.5,53.53 292.0,52.68 292.5,51.81 293.0,50.92 293.5,50.03 294.0,49.12 294.5,48.21 295.0,47.28 295.5,46.34 296.0,45.40 296.5,44.44 297.0,43.49 297.5,42.52 298.0,41.56 298.5,40.59 299.0,39.61 299.5,38.64 300.0,37.66 300.5,36.69 301.0,35.72 301.5,34.75 302.0,33.78 302.5,32.82 303.0,31.86 303.5,30.91 304.0,29.96 304.5,29.03 305.0,28.10 305.5,27.19 306.0,26.28 306.5,25.39 307.0,24.51 307.5,23.64 308.0,22.78 308.5,21.95 309.0,21.12 309.5,20.32 310.0,19.53 310.5,18.76 311.0,18.01 311.5,17.28 312.0,16.57 312.5,15.89 313.0,15.22 313.5,14.58 314.0,13.96 314.5,13.36 315.0,12.79 315.5,12.25 316.0,11.73 316.5,11.23 317.0,10.76 317.5,10.32 318.0,9.91 318.5,9.53 319.0,9.17 319.5,8.84 320.0,8.54 320.5,8.28 321.0,8.04 321.5,7.83 322.0,7.65 322.5,7.50 323.0,7.38 323.5,7.29 324.0,7.23 324.5,7.20 325.0,7.21 325.5,7.24 326.0,7.30 326.5,7.40 327.0,7.52 327.5,7.68 328.0,7.87 328.5,8.08 329.0,8.33 329.5,8.60 330.0,8.91 330.5,9.24 331.0,9.60 331.5,9.99 332.0,10.41 332.5,10.86 333.0,11.33 333.5,11.83 334.0,12.35 334.5,12.90 335.0,13.48 335.5,14.08 336.0,14.71 336.5,15.35 337.0,16.02 337.5,16.71 338.0,17.43 338.5,18.16 339.0,18.92 339.5,19.69 340.0,20.48 340.5,21.29 341.0,22.11 341.5,22.95 342.0,23.81 342.5,24.68 343.0,25.56 343.5,26.46 344.0,27.37 344.5,28.29 345.0,29.22 345.5,30.15 346.0,31.10 346.5,32.05 347.0,33.01 347.5,33.97 348.0,34.94 348.5,35.91 349.0,36.88 349.5,37.86 350.0,38.83 350.5,39.81 351.0,40.78 351.5,41.75 352.0,42.72 352.5,43.68 353.0,44.64 353.5,45.59 354.0,46.53 354.5,47.46 355.0,48.39 355.5,49.30 356.0,50.21 356.5,51.10 357.0,51.98 357.5,52.85 358.0,53.70 358.5,54.54 359.0,55.36 359.5,56.16 360.0,56.95 360.5,57.71 361.0,58.46 361.5,59.19 362.0,59.90 362.5,60.58 363.0,61.24 363.5,61.88 364.0,62.50 364.5,63.09 365.0,63.66 365.5,64.21 366.0,64.72 366.5,65.22 367.0,65.68 367.5,66.12 368.0,66.53 368.5,66.91 369.0,67.26 369.5,67.59 370.0,67.88 370.5,68.15 371.0,68.39 371.5,68.59 372.0,68.77 372.5,68.92 373.0,69.03 373.5,69.12 374.0,69.17 374.5,69.20 375.0,69.19 375.5,69.16 376.0,69.09 376.5,68.99 377.0,68.86 377.5,68.70 378.0,68.51 378.5,68.30 379.0,68.05 379.5,67.77 380.0,67.46 380.5,67.13 381.0,66.76 381.5,66.37 382.0,65.95 382.5,65.50 383.0,65.02 383.5,64.52 384.0,63.99 384.5,63.44 385.0,62.86 385.5,62.26 386.0,61.63 386.5,60.98 387.0,60.31 387.5,59.61 388.0,58.90 388.5,58.16 389.0,57.41 389.5,56.63 390.0,55.84 390.5,55.03 391.0,54.20 391.5,53.36 392.0,52.50 392.5,51.63 393.0,50.75 393.5,49.85 394.0,48.94 394.5,48.02 395.0,47.09 395.5,46.15 396.0,45.21 396.5,44.25 397.0,43.29 397.5,42.33 398.0,41.36 398.5,40.39 399.0,39.42 399.5,38.44 400.0,37.47 400.5,36.49 401.0,35.52 401.5,34.55 402.0,33.59 402.5,32.63 403.0,31.67 403.5,30.72 404.0,29.78 404.5,28.84 405.0,27.92 405.5,27.00 406.0,26.10 406.5,25.21 407.0,24.33 407.5,23.47 408.0,22.62 408.5,21.78 409.0,20.96 409.5,20.16 410.0,19.38 410.5,18.61 411.0,17.87 411.5,17.14 412.0,16.44 412.5,15.75 413.0,15.09 413.5,14.45 414.0,13.84 414.5,13.25 415.0,12.68 415.5,12.14 416.0,11.63 416.5,11.14 417.0,10.67 417.5,10.24 418.0,9.83 418.5,9.45 419.0,9.10 419.5,8.78 420.0,8.49 420.5,8.22 421.0,7.99 421.5,7.79 422.0,7.61 422.5,7.47 423.0,7.36 423.5,7.27 424.0,7.22 424.5,7.20 425.0,7.21 425.5,7.25 426.0,7.32 426.5,7.42 427.0,7.55 427.5,7.71 428.0,7.91 428.5,8.13 429.0,8.38 429.5,8.66 430.0,8.97 430.5,9.31 431.0,9.68 431.5,10.07 432.0,10.50 432.5,10.95 433.0,11.43 433.5,11.93 434.0,12.46 434.5,13.02 435.0,13.60 435.5,14.20 436.0,14.83 436.5,15.48 437.0,16.16 437.5,16.86 438.0,17.57 438.5,18.31 439.0,19.07 439.5,19.84 440.0,20.64 440.5,21.45 441.0,22.28 441.5,23.12 442.0,23.98 442.5,24.86 443.0,25.74 443.5,26.64 444.0,27.55 444.5,28.47 445.0,29.40 445.5,30.34 446.0,31.29 446.5,32.24 447.0,33.20 447.5,34.17 448.0,35.13 448.5,36.11 449.0,37.08 449.5,38.05 450.0,39.03 450.5,40.00 451.0,40.97 451.5,41.94 452.0,42.91 452.5,43.87 453.0,44.83 453.5,45.78 454.0,46.72 454.5,47.65 455.0,48.57 455.5,49.49 456.0,50.39 456.5,51.28 457.0,52.16 457.5,53.02 458.0,53.87 458.5,54.70 459.0,55.52" fill="none" stroke="#d0685e" stroke-width="1.05"/><polyline points="0.0,28.66 0.5,27.73 1.0,26.82 1.5,25.92 2.0,25.03 2.5,24.16 3.0,23.29 3.5,22.45 4.0,21.62 4.5,20.80 5.0,20.00 5.5,19.22 6.0,18.46 6.5,17.72 7.0,17.00 7.5,16.30 8.0,15.62 8.5,14.96 9.0,14.33 9.5,13.72 10.0,13.13 10.5,12.57 11.0,12.04 11.5,11.53 12.0,11.04 12.5,10.59 13.0,10.16 13.5,9.75 14.0,9.38 14.5,9.04 15.0,8.72 15.5,8.43 16.0,8.18 16.5,7.95 17.0,7.75 17.5,7.58 18.0,7.44 18.5,7.34 19.0,7.26 19.5,7.22 20.0,7.20 20.5,7.22 21.0,7.26 21.5,7.34 22.0,7.44 22.5,7.58 23.0,7.75 23.5,7.95 24.0,8.18 24.5,8.43 25.0,8.72 25.5,9.04 26.0,9.38 26.5,9.75 27.0,10.16 27.5,10.59 28.0,11.04 28.5,11.53 29.0,12.04 29.5,12.57 30.0,13.13 30.5,13.72 31.0,14.33 31.5,14.96 32.0,15.62 32.5,16.30 33.0,17.00 33.5,17.72 34.0,18.46 34.5,19.22 35.0,20.00 35.5,20.80 36.0,21.62 36.5,22.45 37.0,23.29 37.5,24.16 38.0,25.03 38.5,25.92 39.0,26.82 39.5,27.73 40.0,28.66 40.5,29.59 41.0,30.53 41.5,31.48 42.0,32.43 42.5,33.39 43.0,34.36 43.5,35.33 44.0,36.30 44.5,37.27 45.0,38.25 45.5,39.22 46.0,40.20 46.5,41.17 47.0,42.14 47.5,43.10 48.0,44.06 48.5,45.02 49.0,45.96 49.5,46.90 50.0,47.84 50.5,48.76 51.0,49.67 51.5,50.57 52.0,51.46 52.5,52.33 53.0,53.19 53.5,54.04 54.0,54.87 54.5,55.68 55.0,56.48 55.5,57.25 56.0,58.01 56.5,58.75 57.0,59.47 57.5,60.17 58.0,60.85 58.5,61.50 59.0,62.13 59.5,62.74 60.0,63.33 60.5,63.88 61.0,64.42 61.5,64.92 62.0,65.40 62.5,65.86 63.0,66.29 63.5,66.68 64.0,67.05 64.5,67.40 65.0,67.71 65.5,67.99 66.0,68.25 66.5,68.47 67.0,68.67 67.5,68.83 68.0,68.97 68.5,69.07 69.0,69.14 69.5,69.19 70.0,69.20 70.5,69.18 71.0,69.13 71.5,69.05 72.0,68.94 72.5,68.80 73.0,68.63 73.5,68.43 74.0,68.20 74.5,67.94 75.0,67.65 75.5,67.33 76.0,66.98 76.5,66.61 77.0,66.20 77.5,65.77 78.0,65.31 78.5,64.82 79.0,64.31 79.5,63.77 80.0,63.21 80.5,62.62 81.0,62.01 81.5,61.37 82.0,60.72 82.5,60.03 83.0,59.33 83.5,58.61 84.0,57.86 84.5,57.10 85.0,56.32 85.5,55.52 86.0,54.70 86.5,53.87 87.0,53.02 87.5,52.16 88.0,51.28 88.5,50.39 89.0,49.49 89.5,48.57 90.0,47.65 90.5,46.72 91.0,45.78 91.5,44.83 92.0,43.87 92.5,42.91 93.0,41.94 93.5,40.97 94.0,40.00 94.5,39.03 95.0,38.05 95.5,37.08 96.0,36.11 96.5,35.13 97.0,34.17 97.5,33.20 98.0,32.24 98.5,31.29 99.0,30.34 99.5,29.40 100.0,28.47 100.5,27.55 101.0,26.64 101.5,25.74 102.0,24.86 102.5,23.98 103.0,23.12 103.5,22.28 104.0,21.45 104.5,20.64 105.0,19.84 105.5,19.07 106.0,18.31 106.5,17.57 107.0,16.86 107.5,16.16 108.0,15.48 108.5,14.83 109.0,14.20 109.5,13.60 110.0,13.02 110.5,12.46 111.0,11.93 111.5,11.43 112.0,10.95 112.5,10.50 113.0,10.07 113.5,9.68 114.0,9.31 114.5,8.97 115.0,8.66 115.5,8.38 116.0,8.13 116.5,7.91 117.0,7.71 117.5,7.55 118.0,7.42 118.5,7.32 119.0,7.25 119.5,7.21 120.0,7.20 120.5,7.22 121.0,7.27 121.5,7.36 122.0,7.47 122.5,7.61 123.0,7.79 123.5,7.99 124.0,8.22 124.5,8.49 125.0,8.78 125.5,9.10 126.0,9.45 126.5,9.83 127.0,10.24 127.5,10.67 128.0,11.14 128.5,11.63 129.0,12.14 129.5,12.68 130.0,13.25 130.5,13.84 131.0,14.45 131.5,15.09 132.0,15.75 132.5,16.44 133.0,17.14 133.5,17.87 134.0,18.61 134.5,19.38 135.0,20.16 135.5,20.96 136.0,21.78 136.5,22.62 137.0,23.47 137.5,24.33 138.0,25.21 138.5,26.10 139.0,27.00 139.5,27.92 140.0,28.84 140.5,29.78 141.0,30.72 141.5,31.67 142.0,32.63 142.5,33.59 143.0,34.55 143.5,35.52 144.0,36.49 144.5,37.47 145.0,38.44 145.5,39.42 146.0,40.39 146.5,41.36 147.0,42.33 147.5,43.29 148.0,44.25 148.5,45.21 149.0,46.15 149.5,47.09 150.0,48.02 150.5,48.94 151.0,49.85 151.5,50.75 152.0,51.63 152.5,52.50 153.0,53.36 153.5,54.20 154.0,55.03 154.5,55.84 155.0,56.63 155.5,57.41 156.0,58.16 156.5,58.90 157.0,59.61 157.5,60.31 158.0,60.98 158.5,61.63 159.0,62.26 159.5,62.86 160.0,63.44 160.5,63.99 161.0,64.52 161.5,65.02 162.0,65.50 162.5,65.95 163.0,66.37 163.5,66.76 164.0,67.13 164.5,67.46 165.0,67.77 165.5,68.05 166.0,68.30 166.5,68.51 167.0,68.70 167.5,68.86 168.0,68.99 168.5,69.09 169.0,69.16 169.5,69.19 170.0,69.20 170.5,69.17 171.0,69.12 171.5,69.03 172.0,68.92 172.5,68.77 173.0,68.59 173.5,68.39 174.0,68.15 174.5,67.88 175.0,67.59 175.5,67.26 176.0,66.91 176.5,66.53 177.0,66.12 177.5,65.68 178.0,65.22 178.5,64.72 179.0,64.21 179.5,63.66 180.0,63.09 180.5,62.50 181.0,61.88 181.5,61.24 182.0,60.58 182.5,59.90 183.0,59.19 183.5,58.46 184.0,57.71 184.5,56.95 185.0,56.16 185.5,55.36 186.0,54.54 186.5,53.70 187.0,52.85 187.5,51.98 188.0,51.10 188.5,50.21 189.0,49.30 189.5,48.39 190.0,47.46 190.5,46.53 191.0,45.59 191.5,44.64 192.0,43.68 192.5,42.72 193.0,41.75 193.5,40.78 194.0,39.81 194.5,38.83 195.0,37.86 195.5,36.88 196.0,35.91 196.5,34.94 197.0,33.97 197.5,33.01 198.0,32.05 198.5,31.10 199.0,30.15 199.5,29.22 200.0,28.29 200.5,27.37 201.0,26.46 201.5,25.56 202.0,24.68 202.5,23.81 203.0,22.95 203.5,22.11 204.0,21.29 204.5,20.48 205.0,19.69 205.5,18.92 206.0,18.16 206.5,17.43 207.0,16.71 207.5,16.02 208.0,15.35 208.5,14.71 209.0,14.08 209.5,13.48 210.0,12.90 210.5,12.35 211.0,11.83 211.5,11.33 212.0,10.86 212.5,10.41 213.0,9.99 213.5,9.60 214.0,9.24 214.5,8.91 215.0,8.60 215.5,8.33 216.0,8.08 216.5,7.87 217.0,7.68 217.5,7.52 218.0,7.40 218.5,7.30 219.0,7.24 219.5,7.21 220.0,7.20 220.5,7.23 221.0,7.29 221.5,7.38 222.0,7.50 222.5,7.65 223.0,7.83 223.5,8.04 224.0,8.28 224.5,8.54 225.0,8.84 225.5,9.17 226.0,9.53 226.5,9.91 227.0,10.32 227.5,10.76 228.0,11.23 228.5,11.73 229.0,12.25 229.5,12.79 230.0,13.36 230.5,13.96 231.0,14.58 231.5,15.22 232.0,15.89 232.5,16.57 233.0,17.28 233.5,18.01 234.0,18.76 234.5,19.53 235.0,20.32 235.5,21.12 236.0,21.95 236.5,22.78 237.0,23.64 237.5,24.51 238.0,25.39 238.5,26.28 239.0,27.19 239.5,28.10 240.0,29.03 240.5,29.96 241.0,30.91 241.5,31.86 242.0,32.82 242.5,33.78 243.0,34.75 243.5,35.72 244.0,36.69 244.5,37.66 245.0,38.64 245.5,39.61 246.0,40.59 246.5,41.56 247.0,42.52 247.5,43.49 248.0,44.44 248.5,45.40 249.0,46.34 249.5,47.28 250.0,48.21 250.5,49.12 251.0,50.03 251.5,50.92 252.0,51.81 252.5,52.68 253.0,53.53 253.5,54.37 254.0,55.19 254.5,56.00 255.0,56.79 255.5,57.56 256.0,58.31 256.5,59.04 257.0,59.76 257.5,60.45 258.0,61.11 258.5,61.76 259.0,62.38 259.5,62.98 260.0,63.55 260.5,64.10 261.0,64.62 261.5,65.12 262.0,65.59 262.5,66.03 263.0,66.45 263.5,66.84 264.0,67.19 264.5,67.53 265.0,67.83 265.5,68.10 266.0,68.34 266.5,68.55 267.0,68.74 267.5,68.89 268.0,69.01 268.5,69.10 269.0,69.17 269.5,69.20 270.0,69.20 270.5,69.17 271.0,69.10 271.5,69.01 272.0,68.89 272.5,68.74 273.0,68.55 273.5,68.34 274.0,68.10 274.5,67.83 275.0,67.53 275.5,67.19 276.0,66.84 276.5,66.45 277.0,66.03 277.5,65.59 278.0,65.12 278.5,64.62 279.0,64.10 279.5,63.55 280.0,62.98 280.5,62.38 281.0,61.76 281.5,61.11 282.0,60.45 282.5,59.76 283.0,59.04 283.5,58.31 284.0,57.56 284.5,56.79 285.0,56.00 285.5,55.19 286.0,54.37 286.5,53.53 287.0,52.68 287.5,51.81 288.0,50.92 288.5,50.03 289.0,49.12 289.5,48.21 290.0,47.28 290.5,46.34 291.0,45.40 291.5,44.44 292.0,43.49 292.5,42.52 293.0,41.56 293.5,40.59 294.0,39.61 294.5,38.64 295.0,37.66 295.5,36.69 296.0,35.72 296.5,34.75 297.0,33.78 297.5,32.82 298.0,31.86 298.5,30.91 299.0,29.96 299.5,29.03 300.0,28.10 300.5,27.19 301.0,26.28 301.5,25.39 302.0,24.51 302.5,23.64 303.0,22.78 303.5,21.95 304.0,21.12 304.5,20.32 305.0,19.53 305.5,18.76 306.0,18.01 306.5,17.28 307.0,16.57 307.5,15.89 308.0,15.22 308.5,14.58 309.0,13.96 309.5,13.36 310.0,12.79 310.5,12.25 311.0,11.73 311.5,11.23 312.0,10.76 312.5,10.32 313.0,9.91 313.5,9.53 314.0,9.17 314.5,8.84 315.0,8.54 315.5,8.28 316.0,8.04 316.5,7.83 317.0,7.65 317.5,7.50 318.0,7.38 318.5,7.29 319.0,7.23 319.5,7.20 320.0,7.21 320.5,7.24 321.0,7.30 321.5,7.40 322.0,7.52 322.5,7.68 323.0,7.87 323.5,8.08 324.0,8.33 324.5,8.60 325.0,8.91 325.5,9.24 326.0,9.60 326.5,9.99 327.0,10.41 327.5,10.86 328.0,11.33 328.5,11.83 329.0,12.35 329.5,12.90 330.0,13.48 330.5,14.08 331.0,14.71 331.5,15.35 332.0,16.02 332.5,16.71 333.0,17.43 333.5,18.16 334.0,18.92 334.5,19.69 335.0,20.48 335.5,21.29 336.0,22.11 336.5,22.95 337.0,23.81 337.5,24.68 338.0,25.56 338.5,26.46 339.0,27.37 339.5,28.29 340.0,29.22 340.5,30.15 341.0,31.10 341.5,32.05 342.0,33.01 342.5,33.97 343.0,34.94 343.5,35.91 344.0,36.88 344.5,37.86 345.0,38.83 345.5,39.81 346.0,40.78 346.5,41.75 347.0,42.72 347.5,43.68 348.0,44.64 348.5,45.59 349.0,46.53 349.5,47.46 350.0,48.39 350.5,49.30 351.0,50.21 351.5,51.10 352.0,51.98 352.5,52.85 353.0,53.70 353.5,54.54 354.0,55.36 354.5,56.16 355.0,56.95 355.5,57.71 356.0,58.46 356.5,59.19 357.0,59.90 357.5,60.58 358.0,61.24 358.5,61.88 359.0,62.50 359.5,63.09 360.0,63.66 360.5,64.21 361.0,64.72 361.5,65.22 362.0,65.68 362.5,66.12 363.0,66.53 363.5,66.91 364.0,67.26 364.5,67.59 365.0,67.88 365.5,68.15 366.0,68.39 366.5,68.59 367.0,68.77 367.5,68.92 368.0,69.03 368.5,69.12 369.0,69.17 369.5,69.20 370.0,69.19 370.5,69.16 371.0,69.09 371.5,68.99 372.0,68.86 372.5,68.70 373.0,68.51 373.5,68.30 374.0,68.05 374.5,67.77 375.0,67.46 375.5,67.13 376.0,66.76 376.5,66.37 377.0,65.95 377.5,65.50 378.0,65.02 378.5,64.52 379.0,63.99 379.5,63.44 380.0,62.86 380.5,62.26 381.0,61.63 381.5,60.98 382.0,60.31 382.5,59.61 383.0,58.90 383.5,58.16 384.0,57.41 384.5,56.63 385.0,55.84 385.5,55.03 386.0,54.20 386.5,53.36 387.0,52.50 387.5,51.63 388.0,50.75 388.5,49.85 389.0,48.94 389.5,48.02 390.0,47.09 390.5,46.15 391.0,45.21 391.5,44.25 392.0,43.29 392.5,42.33 393.0,41.36 393.5,40.39 394.0,39.42 394.5,38.44 395.0,37.47 395.5,36.49 396.0,35.52 396.5,34.55 397.0,33.59 397.5,32.63 398.0,31.67 398.5,30.72 399.0,29.78 399.5,28.84 400.0,27.92 400.5,27.00 401.0,26.10 401.5,25.21 402.0,24.33 402.5,23.47 403.0,22.62 403.5,21.78 404.0,20.96 404.5,20.16 405.0,19.38 405.5,18.61 406.0,17.87 406.5,17.14 407.0,16.44 407.5,15.75 408.0,15.09 408.5,14.45 409.0,13.84 409.5,13.25 410.0,12.68 410.5,12.14 411.0,11.63 411.5,11.14 412.0,10.67 412.5,10.24 413.0,9.83 413.5,9.45 414.0,9.10 414.5,8.78 415.0,8.49 415.5,8.22 416.0,7.99 416.5,7.79 417.0,7.61 417.5,7.47 418.0,7.36 418.5,7.27 419.0,7.22 419.5,7.20 420.0,7.21 420.5,7.25 421.0,7.32 421.5,7.42 422.0,7.55 422.5,7.71 423.0,7.91 423.5,8.13 424.0,8.38 424.5,8.66 425.0,8.97 425.5,9.31 426.0,9.68 426.5,10.07 427.0,10.50 427.5,10.95 428.0,11.43 428.5,11.93 429.0,12.46 429.5,13.02 430.0,13.60 430.5,14.20 431.0,14.83 431.5,15.48 432.0,16.16 432.5,16.86 433.0,17.57 433.5,18.31 434.0,19.07 434.5,19.84 435.0,20.64 435.5,21.45 436.0,22.28 436.5,23.12 437.0,23.98 437.5,24.86 438.0,25.74 438.5,26.64 439.0,27.55 439.5,28.47 440.0,29.40 440.5,30.34 441.0,31.29 441.5,32.24 442.0,33.20 442.5,34.17 443.0,35.13 443.5,36.11 444.0,37.08 444.5,38.05 445.0,39.03 445.5,40.00 446.0,40.97 446.5,41.94 447.0,42.91 447.5,43.87 448.0,44.83 448.5,45.78 449.0,46.72 449.5,47.65 450.0,48.57 450.5,49.49 451.0,50.39 451.5,51.28 452.0,52.16 452.5,53.02 453.0,53.87 453.5,54.70 454.0,55.52 454.5,56.32 455.0,57.10 455.5,57.86 456.0,58.61 456.5,59.33 457.0,60.03 457.5,60.72 458.0,61.37 458.5,62.01 459.0,62.62" fill="none" stroke="#6cc59a" stroke-width="1.05"/><polyline points="0.0,20.00 0.5,19.22 1.0,18.46 1.5,17.72 2.0,17.00 2.5,16.30 3.0,15.62 3.5,14.96 4.0,14.33 4.5,13.72 5.0,13.13 5.5,12.57 6.0,12.04 6.5,11.53 7.0,11.04 7.5,10.59 8.0,10.16 8.5,9.75 9.0,9.38 9.5,9.04 10.0,8.72 10.5,8.43 11.0,8.18 11.5,7.95 12.0,7.75 12.5,7.58 13.0,7.44 13.5,7.34 14.0,7.26 14.5,7.22 15.0,7.20 15.5,7.22 16.0,7.26 16.5,7.34 17.0,7.44 17.5,7.58 18.0,7.75 18.5,7.95 19.0,8.18 19.5,8.43 20.0,8.72 20.5,9.04 21.0,9.38 21.5,9.75 22.0,10.16 22.5,10.59 23.0,11.04 23.5,11.53 24.0,12.04 24.5,12.57 25.0,13.13 25.5,13.72 26.0,14.33 26.5,14.96 27.0,15.62 27.5,16.30 28.0,17.00 28.5,17.72 29.0,18.46 29.5,19.22 30.0,20.00 30.5,20.80 31.0,21.62 31.5,22.45 32.0,23.29 32.5,24.16 33.0,25.03 33.5,25.92 34.0,26.82 34.5,27.73 35.0,28.66 35.5,29.59 36.0,30.53 36.5,31.48 37.0,32.43 37.5,33.39 38.0,34.36 38.5,35.33 39.0,36.30 39.5,37.27 40.0,38.25 40.5,39.22 41.0,40.20 41.5,41.17 42.0,42.14 42.5,43.10 43.0,44.06 43.5,45.02 44.0,45.96 44.5,46.90 45.0,47.84 45.5,48.76 46.0,49.67 46.5,50.57 47.0,51.46 47.5,52.33 48.0,53.19 48.5,54.04 49.0,54.87 49.5,55.68 50.0,56.48 50.5,57.25 51.0,58.01 51.5,58.75 52.0,59.47 52.5,60.17 53.0,60.85 53.5,61.50 54.0,62.13 54.5,62.74 55.0,63.33 55.5,63.88 56.0,64.42 56.5,64.92 57.0,65.40 57.5,65.86 58.0,66.29 58.5,66.68 59.0,67.05 59.5,67.40 60.0,67.71 60.5,67.99 61.0,68.25 61.5,68.47 62.0,68.67 62.5,68.83 63.0,68.97 63.5,69.07 64.0,69.14 64.5,69.19 65.0,69.20 65.5,69.18 66.0,69.13 66.5,69.05 67.0,68.94 67.5,68.80 68.0,68.63 68.5,68.43 69.0,68.20 69.5,67.94 70.0,67.65 70.5,67.33 71.0,66.98 71.5,66.61 72.0,66.20 72.5,65.77 73.0,65.31 73.5,64.82 74.0,64.31 74.5,63.77 75.0,63.21 75.5,62.62 76.0,62.01 76.5,61.37 77.0,60.72 77.5,60.03 78.0,59.33 78.5,58.61 79.0,57.86 79.5,57.10 80.0,56.32 80.5,55.52 81.0,54.70 81.5,53.87 82.0,53.02 82.5,52.16 83.0,51.28 83.5,50.39 84.0,49.49 84.5,48.57 85.0,47.65 85.5,46.72 86.0,45.78 86.5,44.83 87.0,43.87 87.5,42.91 88.0,41.94 88.5,40.97 89.0,40.00 89.5,39.03 90.0,38.05 90.5,37.08 91.0,36.11 91.5,35.13 92.0,34.17 92.5,33.20 93.0,32.24 93.5,31.29 94.0,30.34 94.5,29.40 95.0,28.47 95.5,27.55 96.0,26.64 96.5,25.74 97.0,24.86 97.5,23.98 98.0,23.12 98.5,22.28 99.0,21.45 99.5,20.64 100.0,19.84 100.5,19.07 101.0,18.31 101.5,17.57 102.0,16.86 102.5,16.16 103.0,15.48 103.5,14.83 104.0,14.20 104.5,13.60 105.0,13.02 105.5,12.46 106.0,11.93 106.5,11.43 107.0,10.95 107.5,10.50 108.0,10.07 108.5,9.68 109.0,9.31 109.5,8.97 110.0,8.66 110.5,8.38 111.0,8.13 111.5,7.91 112.0,7.71 112.5,7.55 113.0,7.42 113.5,7.32 114.0,7.25 114.5,7.21 115.0,7.20 115.5,7.22 116.0,7.27 116.5,7.36 117.0,7.47 117.5,7.61 118.0,7.79 118.5,7.99 119.0,8.22 119.5,8.49 120.0,8.78 120.5,9.10 121.0,9.45 121.5,9.83 122.0,10.24 122.5,10.67 123.0,11.14 123.5,11.63 124.0,12.14 124.5,12.68 125.0,13.25 125.5,13.84 126.0,14.45 126.5,15.09 127.0,15.75 127.5,16.44 128.0,17.14 128.5,17.87 129.0,18.61 129.5,19.38 130.0,20.16 130.5,20.96 131.0,21.78 131.5,22.62 132.0,23.47 132.5,24.33 133.0,25.21 133.5,26.10 134.0,27.00 134.5,27.92 135.0,28.84 135.5,29.78 136.0,30.72 136.5,31.67 137.0,32.63 137.5,33.59 138.0,34.55 138.5,35.52 139.0,36.49 139.5,37.47 140.0,38.44 140.5,39.42 141.0,40.39 141.5,41.36 142.0,42.33 142.5,43.29 143.0,44.25 143.5,45.21 144.0,46.15 144.5,47.09 145.0,48.02 145.5,48.94 146.0,49.85 146.5,50.75 147.0,51.63 147.5,52.50 148.0,53.36 148.5,54.20 149.0,55.03 149.5,55.84 150.0,56.63 150.5,57.41 151.0,58.16 151.5,58.90 152.0,59.61 152.5,60.31 153.0,60.98 153.5,61.63 154.0,62.26 154.5,62.86 155.0,63.44 155.5,63.99 156.0,64.52 156.5,65.02 157.0,65.50 157.5,65.95 158.0,66.37 158.5,66.76 159.0,67.13 159.5,67.46 160.0,67.77 160.5,68.05 161.0,68.30 161.5,68.51 162.0,68.70 162.5,68.86 163.0,68.99 163.5,69.09 164.0,69.16 164.5,69.19 165.0,69.20 165.5,69.17 166.0,69.12 166.5,69.03 167.0,68.92 167.5,68.77 168.0,68.59 168.5,68.39 169.0,68.15 169.5,67.88 170.0,67.59 170.5,67.26 171.0,66.91 171.5,66.53 172.0,66.12 172.5,65.68 173.0,65.22 173.5,64.72 174.0,64.21 174.5,63.66 175.0,63.09 175.5,62.50 176.0,61.88 176.5,61.24 177.0,60.58 177.5,59.90 178.0,59.19 178.5,58.46 179.0,57.71 179.5,56.95 180.0,56.16 180.5,55.36 181.0,54.54 181.5,53.70 182.0,52.85 182.5,51.98 183.0,51.10 183.5,50.21 184.0,49.30 184.5,48.39 185.0,47.46 185.5,46.53 186.0,45.59 186.5,44.64 187.0,43.68 187.5,42.72 188.0,41.75 188.5,40.78 189.0,39.81 189.5,38.83 190.0,37.86 190.5,36.88 191.0,35.91 191.5,34.94 192.0,33.97 192.5,33.01 193.0,32.05 193.5,31.10 194.0,30.15 194.5,29.22 195.0,28.29 195.5,27.37 196.0,26.46 196.5,25.56 197.0,24.68 197.5,23.81 198.0,22.95 198.5,22.11 199.0,21.29 199.5,20.48 200.0,19.69 200.5,18.92 201.0,18.16 201.5,17.43 202.0,16.71 202.5,16.02 203.0,15.35 203.5,14.71 204.0,14.08 204.5,13.48 205.0,12.90 205.5,12.35 206.0,11.83 206.5,11.33 207.0,10.86 207.5,10.41 208.0,9.99 208.5,9.60 209.0,9.24 209.5,8.91 210.0,8.60 210.5,8.33 211.0,8.08 211.5,7.87 212.0,7.68 212.5,7.52 213.0,7.40 213.5,7.30 214.0,7.24 214.5,7.21 215.0,7.20 215.5,7.23 216.0,7.29 216.5,7.38 217.0,7.50 217.5,7.65 218.0,7.83 218.5,8.04 219.0,8.28 219.5,8.54 220.0,8.84 220.5,9.17 221.0,9.53 221.5,9.91 222.0,10.32 222.5,10.76 223.0,11.23 223.5,11.73 224.0,12.25 224.5,12.79 225.0,13.36 225.5,13.96 226.0,14.58 226.5,15.22 227.0,15.89 227.5,16.57 228.0,17.28 228.5,18.01 229.0,18.76 229.5,19.53 230.0,20.32 230.5,21.12 231.0,21.95 231.5,22.78 232.0,23.64 232.5,24.51 233.0,25.39 233.5,26.28 234.0,27.19 234.5,28.10 235.0,29.03 235.5,29.96 236.0,30.91 236.5,31.86 237.0,32.82 237.5,33.78 238.0,34.75 238.5,35.72 239.0,36.69 239.5,37.66 240.0,38.64 240.5,39.61 241.0,40.59 241.5,41.56 242.0,42.52 242.5,43.49 243.0,44.44 243.5,45.40 244.0,46.34 244.5,47.28 245.0,48.21 245.5,49.12 246.0,50.03 246.5,50.92 247.0,51.81 247.5,52.68 248.0,53.53 248.5,54.37 249.0,55.19 249.5,56.00 250.0,56.79 250.5,57.56 251.0,58.31 251.5,59.04 252.0,59.76 252.5,60.45 253.0,61.11 253.5,61.76 254.0,62.38 254.5,62.98 255.0,63.55 255.5,64.10 256.0,64.62 256.5,65.12 257.0,65.59 257.5,66.03 258.0,66.45 258.5,66.84 259.0,67.19 259.5,67.53 260.0,67.83 260.5,68.10 261.0,68.34 261.5,68.55 262.0,68.74 262.5,68.89 263.0,69.01 263.5,69.10 264.0,69.17 264.5,69.20 265.0,69.20 265.5,69.17 266.0,69.10 266.5,69.01 267.0,68.89 267.5,68.74 268.0,68.55 268.5,68.34 269.0,68.10 269.5,67.83 270.0,67.53 270.5,67.19 271.0,66.84 271.5,66.45 272.0,66.03 272.5,65.59 273.0,65.12 273.5,64.62 274.0,64.10 274.5,63.55 275.0,62.98 275.5,62.38 276.0,61.76 276.5,61.11 277.0,60.45 277.5,59.76 278.0,59.04 278.5,58.31 279.0,57.56 279.5,56.79 280.0,56.00 280.5,55.19 281.0,54.37 281.5,53.53 282.0,52.68 282.5,51.81 283.0,50.92 283.5,50.03 284.0,49.12 284.5,48.21 285.0,47.28 285.5,46.34 286.0,45.40 286.5,44.44 287.0,43.49 287.5,42.52 288.0,41.56 288.5,40.59 289.0,39.61 289.5,38.64 290.0,37.66 290.5,36.69 291.0,35.72 291.5,34.75 292.0,33.78 292.5,32.82 293.0,31.86 293.5,30.91 294.0,29.96 294.5,29.03 295.0,28.10 295.5,27.19 296.0,26.28 296.5,25.39 297.0,24.51 297.5,23.64 298.0,22.78 298.5,21.95 299.0,21.12 299.5,20.32 300.0,19.53 300.5,18.76 301.0,18.01 301.5,17.28 302.0,16.57 302.5,15.89 303.0,15.22 303.5,14.58 304.0,13.96 304.5,13.36 305.0,12.79 305.5,12.25 306.0,11.73 306.5,11.23 307.0,10.76 307.5,10.32 308.0,9.91 308.5,9.53 309.0,9.17 309.5,8.84 310.0,8.54 310.5,8.28 311.0,8.04 311.5,7.83 312.0,7.65 312.5,7.50 313.0,7.38 313.5,7.29 314.0,7.23 314.5,7.20 315.0,7.21 315.5,7.24 316.0,7.30 316.5,7.40 317.0,7.52 317.5,7.68 318.0,7.87 318.5,8.08 319.0,8.33 319.5,8.60 320.0,8.91 320.5,9.24 321.0,9.60 321.5,9.99 322.0,10.41 322.5,10.86 323.0,11.33 323.5,11.83 324.0,12.35 324.5,12.90 325.0,13.48 325.5,14.08 326.0,14.71 326.5,15.35 327.0,16.02 327.5,16.71 328.0,17.43 328.5,18.16 329.0,18.92 329.5,19.69 330.0,20.48 330.5,21.29 331.0,22.11 331.5,22.95 332.0,23.81 332.5,24.68 333.0,25.56 333.5,26.46 334.0,27.37 334.5,28.29 335.0,29.22 335.5,30.15 336.0,31.10 336.5,32.05 337.0,33.01 337.5,33.97 338.0,34.94 338.5,35.91 339.0,36.88 339.5,37.86 340.0,38.83 340.5,39.81 341.0,40.78 341.5,41.75 342.0,42.72 342.5,43.68 343.0,44.64 343.5,45.59 344.0,46.53 344.5,47.46 345.0,48.39 345.5,49.30 346.0,50.21 346.5,51.10 347.0,51.98 347.5,52.85 348.0,53.70 348.5,54.54 349.0,55.36 349.5,56.16 350.0,56.95 350.5,57.71 351.0,58.46 351.5,59.19 352.0,59.90 352.5,60.58 353.0,61.24 353.5,61.88 354.0,62.50 354.5,63.09 355.0,63.66 355.5,64.21 356.0,64.72 356.5,65.22 357.0,65.68 357.5,66.12 358.0,66.53 358.5,66.91 359.0,67.26 359.5,67.59 360.0,67.88 360.5,68.15 361.0,68.39 361.5,68.59 362.0,68.77 362.5,68.92 363.0,69.03 363.5,69.12 364.0,69.17 364.5,69.20 365.0,69.19 365.5,69.16 366.0,69.09 366.5,68.99 367.0,68.86 367.5,68.70 368.0,68.51 368.5,68.30 369.0,68.05 369.5,67.77 370.0,67.46 370.5,67.13 371.0,66.76 371.5,66.37 372.0,65.95 372.5,65.50 373.0,65.02 373.5,64.52 374.0,63.99 374.5,63.44 375.0,62.86 375.5,62.26 376.0,61.63 376.5,60.98 377.0,60.31 377.5,59.61 378.0,58.90 378.5,58.16 379.0,57.41 379.5,56.63 380.0,55.84 380.5,55.03 381.0,54.20 381.5,53.36 382.0,52.50 382.5,51.63 383.0,50.75 383.5,49.85 384.0,48.94 384.5,48.02 385.0,47.09 385.5,46.15 386.0,45.21 386.5,44.25 387.0,43.29 387.5,42.33 388.0,41.36 388.5,40.39 389.0,39.42 389.5,38.44 390.0,37.47 390.5,36.49 391.0,35.52 391.5,34.55 392.0,33.59 392.5,32.63 393.0,31.67 393.5,30.72 394.0,29.78 394.5,28.84 395.0,27.92 395.5,27.00 396.0,26.10 396.5,25.21 397.0,24.33 397.5,23.47 398.0,22.62 398.5,21.78 399.0,20.96 399.5,20.16 400.0,19.38 400.5,18.61 401.0,17.87 401.5,17.14 402.0,16.44 402.5,15.75 403.0,15.09 403.5,14.45 404.0,13.84 404.5,13.25 405.0,12.68 405.5,12.14 406.0,11.63 406.5,11.14 407.0,10.67 407.5,10.24 408.0,9.83 408.5,9.45 409.0,9.10 409.5,8.78 410.0,8.49 410.5,8.22 411.0,7.99 411.5,7.79 412.0,7.61 412.5,7.47 413.0,7.36 413.5,7.27 414.0,7.22 414.5,7.20 415.0,7.21 415.5,7.25 416.0,7.32 416.5,7.42 417.0,7.55 417.5,7.71 418.0,7.91 418.5,8.13 419.0,8.38 419.5,8.66 420.0,8.97 420.5,9.31 421.0,9.68 421.5,10.07 422.0,10.50 422.5,10.95 423.0,11.43 423.5,11.93 424.0,12.46 424.5,13.02 425.0,13.60 425.5,14.20 426.0,14.83 426.5,15.48 427.0,16.16 427.5,16.86 428.0,17.57 428.5,18.31 429.0,19.07 429.5,19.84 430.0,20.64 430.5,21.45 431.0,22.28 431.5,23.12 432.0,23.98 432.5,24.86 433.0,25.74 433.5,26.64 434.0,27.55 434.5,28.47 435.0,29.40 435.5,30.34 436.0,31.29 436.5,32.24 437.0,33.20 437.5,34.17 438.0,35.13 438.5,36.11 439.0,37.08 439.5,38.05 440.0,39.03 440.5,40.00 441.0,40.97 441.5,41.94 442.0,42.91 442.5,43.87 443.0,44.83 443.5,45.78 444.0,46.72 444.5,47.65 445.0,48.57 445.5,49.49 446.0,50.39 446.5,51.28 447.0,52.16 447.5,53.02 448.0,53.87 448.5,54.70 449.0,55.52 449.5,56.32 450.0,57.10 450.5,57.86 451.0,58.61 451.5,59.33 452.0,60.03 452.5,60.72 453.0,61.37 453.5,62.01 454.0,62.62 454.5,63.21 455.0,63.77 455.5,64.31 456.0,64.82 456.5,65.31 457.0,65.77 457.5,66.20 458.0,66.61 458.5,66.98 459.0,67.33" fill="none" stroke="#37a4e4" stroke-width="1.05"/></svg>
<svg class="a" style="left:14px;top:542.5px;" width="10" height="10" viewBox="0 0 10 10"><circle cx="5" cy="5" r="4" fill="none" stroke="#6a6a6a" stroke-width="1.1"/></svg>
<div class="t" style="left:30px;top:541.0px;height:16px;line-height:16px;color:#e6e6e6;font-size:12px;">Strength</div>
<svg class="a" style="left:14px;top:564.5px;" width="10" height="10" viewBox="0 0 10 10"><circle cx="5" cy="5" r="4" fill="none" stroke="#6a6a6a" stroke-width="1.1"/></svg>
<div class="t" style="left:30px;top:563.0px;height:16px;line-height:16px;color:#e6e6e6;font-size:12px;">Strength Fades to Zero</div>
<svg class="a" style="left:14px;top:586.5px;" width="10" height="10" viewBox="0 0 10 10"><circle cx="5" cy="5" r="4" fill="none" stroke="#6a6a6a" stroke-width="1.1"/></svg>
<div class="t" style="left:30px;top:585.0px;height:16px;line-height:16px;color:#e6e6e6;font-size:12px;">Type</div>
<svg class="a" style="left:14px;top:608.5px;" width="10" height="10" viewBox="0 0 10 10"><circle cx="5" cy="5" r="4" fill="none" stroke="#6a6a6a" stroke-width="1.1"/></svg>
<div class="t" style="left:30px;top:607.0px;height:16px;line-height:16px;color:#e6e6e6;font-size:12px;">Wave Style</div>
<div class="t" style="left:30px;top:629.0px;height:16px;line-height:16px;color:#9c9c9c;font-size:12px;">Graph</div>
<div class="a" style="left:177.3px;top:540.5px;width:93.6px;height:15.8px;background:#262626;border-radius:3px"></div>
<div class="t" style="left:180.8px;top:540.9px;height:16px;line-height:16px;color:#6a6a6a;font-size:12px;">%</div>
<div class="t" style="left:194.3px;top:540.9px;height:16px;line-height:16px;color:#e6e6e6;font-size:12px;">100.0</div>
<div class="a" style="left:177.3px;top:562px;width:16px;height:16px;background:#262626;border-radius:3px"></div>
<svg class="a" style="left:177.3px;top:562px;" width="16" height="16" viewBox="0 0 16 16"><path d="M3.5 8.5 L6.8 11.8 L12.8 4.2" fill="none" stroke="#2fcf6f" stroke-width="2"/></svg>
<div class="a" style="left:178px;top:585px;width:192px;height:14px;background:#4e4e4e;border-radius:3px"></div>
<div class="t" style="left:181px;top:584.5px;height:16px;line-height:16px;color:#e6e6e6;font-size:12px;">Sine</div>
<svg class="a" style="left:358px;top:590.0px;" width="10" height="6" viewBox="0 0 10 6"><path d="M0.5 0.5 L5.0 5 L9.5 0.5" fill="none" stroke="#cfcfcf" stroke-width="1"/></svg>
<div class="a" style="left:178px;top:607px;width:192px;height:14px;background:#4e4e4e;border-radius:3px"></div>
<div class="t" style="left:181px;top:606.5px;height:16px;line-height:16px;color:#e6e6e6;font-size:12px;">Normal</div>
<svg class="a" style="left:358px;top:612.0px;" width="10" height="6" viewBox="0 0 10 6"><path d="M0.5 0.5 L5.0 5 L9.5 0.5" fill="none" stroke="#cfcfcf" stroke-width="1"/></svg>
<div class="a" style="left:178px;top:628px;width:16px;height:16px;background:#3a3a3a;border-radius:3px;border:1px solid #2a2a2a"></div>
<svg class="a" style="left:178px;top:628px;" width="16" height="16" viewBox="0 0 16 16"><path d="M3.5 2.5 V13.5 M1.5 12 H14" stroke="#d0d0d0" stroke-width="1"/><path d="M4 12 L12.5 5" stroke="#d0d0d0" stroke-width="1"/></svg>
<div class="a" style="left:7.5px;top:648.5px;width:466.5px;height:1.5px;background:#1f1f1f;"></div>
<div class="a" style="left:9.5px;top:653px;width:461.5px;height:20px;background:#474747;border-radius:3px"></div>
<svg class="a" style="left:14px;top:657.5px;" width="10" height="10" viewBox="0 0 10 10"><circle cx="5" cy="5" r="4" fill="none" stroke="#777" stroke-width="1.1"/><circle cx="5" cy="5" r="2.2" fill="#3fa9f5"/></svg>
<div class="t" style="left:30px;top:656.0px;height:16px;line-height:16px;color:#3fa9f5;font-size:12px;">Minimum</div>
<svg class="a" style="left:14px;top:679.5px;" width="10" height="10" viewBox="0 0 10 10"><circle cx="5" cy="5" r="4" fill="none" stroke="#6a6a6a" stroke-width="1.1"/></svg>
<div class="t" style="left:30px;top:678.0px;height:16px;line-height:16px;color:#e6e6e6;font-size:12px;">Maximum</div>
<div class="a" style="left:177.3px;top:655.3px;width:93.7px;height:15.5px;background:#262626;border-radius:3px"></div>
<div class="t" style="left:194.5px;top:655.5px;height:16px;line-height:16px;color:#9a9a9a;font-size:12px;">-400.0</div>
<svg class="a" style="left:248px;top:658px;" width="10" height="10" viewBox="0 0 10 10"><path d="M5 1 L9 5 L5 9 L1 5Z" fill="none" stroke="#999" stroke-width="1"/></svg>
<div class="a" style="left:261px;top:655.3px;width:10px;height:15.5px;background:#2e2e2e;"></div>
<svg class="a" style="left:261px;top:658px;" width="10" height="10" viewBox="0 0 10 10"><path d="M2 2 H5 L8 5 L5 8 H2Z" fill="#5a5a5a"/></svg>
<div class="a" style="left:177.3px;top:677px;width:93.7px;height:15.8px;background:#262626;border-radius:3px"></div>
<div class="t" style="left:180.8px;top:677.4px;height:16px;line-height:16px;color:#6a6a6a;font-size:12px;">#</div>
<div class="t" style="left:194.3px;top:677.4px;height:16px;line-height:16px;color:#e6e6e6;font-size:12px;">10.0</div>
<svg class="a" style="left:176px;top:654px;" width="22" height="40" viewBox="0 0 22 40"><path d="M11.5 8.3 C 15 8.5, 18.5 10, 16.8 13.2 L 4.8 26.8 C 2 30, 4 33.2, 8 33.3" fill="none" stroke="#3fa9f5" stroke-width="1.1"/><circle cx="7.9" cy="7.6" r="4.4" fill="#3fa9f5"/><path d="M4.5 13.2 H11.5" stroke="#3fa9f5" stroke-width="1"/><path d="M6.5 11 V13 M9.3 11 V13" stroke="#3fa9f5" stroke-width="0.8"/><circle cx="12" cy="33.3" r="4.3" fill="#3fa9f5"/></svg>
<svg class="a" style="left:14px;top:701.5px;" width="10" height="10" viewBox="0 0 10 10"><circle cx="5" cy="5" r="4" fill="none" stroke="#6a6a6a" stroke-width="1.1"/></svg>
<div class="t" style="left:30px;top:700.0px;height:16px;line-height:16px;color:#e6e6e6;font-size:12px;">Value Offset</div>
<svg class="a" style="left:14px;top:723px;" width="10" height="10" viewBox="0 0 10 10"><circle cx="5" cy="5" r="4" fill="none" stroke="#6a6a6a" stroke-width="1.1"/></svg>
<div class="t" style="left:30px;top:721.5px;height:16px;line-height:16px;color:#e6e6e6;font-size:12px;">Stagger</div>
<svg class="a" style="left:14px;top:745px;" width="10" height="10" viewBox="0 0 10 10"><circle cx="5" cy="5" r="4" fill="none" stroke="#6a6a6a" stroke-width="1.1"/></svg>
<div class="t" style="left:30px;top:743.5px;height:16px;line-height:16px;color:#e6e6e6;font-size:12px;">Separate Channels</div>
<div class="a" style="left:177.3px;top:699.5px;width:93.7px;height:15.8px;background:#262626;border-radius:3px"></div>
<div class="t" style="left:180.8px;top:699.9px;height:16px;line-height:16px;color:#6a6a6a;font-size:12px;">#</div>
<div class="t" style="left:194.3px;top:699.9px;height:16px;line-height:16px;color:#e6e6e6;font-size:12px;">0.0</div>
<div class="a" style="left:177.3px;top:721px;width:93.7px;height:15.8px;background:#262626;border-radius:3px"></div>
<div class="t" style="left:180.8px;top:721.4px;height:16px;line-height:16px;color:#6a6a6a;font-size:12px;">#</div>
<div class="t" style="left:194.3px;top:721.4px;height:16px;line-height:16px;color:#e6e6e6;font-size:12px;">20.0</div>
<div class="a" style="left:177.3px;top:743px;width:16px;height:16px;background:#262626;border-radius:3px"></div>
<div class="a" style="left:7.5px;top:763.5px;width:466.5px;height:1.5px;background:#1f1f1f;"></div>
<svg class="a" style="left:14px;top:772px;" width="10" height="10" viewBox="0 0 10 10"><circle cx="5" cy="5" r="4" fill="none" stroke="#6a6a6a" stroke-width="1.1"/></svg>
<div class="t" style="left:30px;top:770.5px;height:16px;line-height:16px;color:#e6e6e6;font-size:12px;">Time Mode</div>
<svg class="a" style="left:14px;top:794px;" width="10" height="10" viewBox="0 0 10 10"><circle cx="5" cy="5" r="4" fill="none" stroke="#6a6a6a" stroke-width="1.1"/></svg>
<div class="t" style="left:30px;top:792.5px;height:16px;line-height:16px;color:#e6e6e6;font-size:12px;">Frequency</div>
<svg class="a" style="left:14px;top:816px;" width="10" height="10" viewBox="0 0 10 10"><circle cx="5" cy="5" r="4" fill="none" stroke="#6a6a6a" stroke-width="1.1"/></svg>
<div class="t" style="left:30px;top:814.5px;height:16px;line-height:16px;color:#e6e6e6;font-size:12px;">Time</div>
<svg class="a" style="left:14px;top:838px;" width="10" height="10" viewBox="0 0 10 10"><circle cx="5" cy="5" r="4" fill="none" stroke="#6a6a6a" stroke-width="1.1"/></svg>
<div class="t" style="left:30px;top:836.5px;height:16px;line-height:16px;color:#e6e6e6;font-size:12px;">Time Offset</div>
<svg class="a" style="left:14px;top:860px;" width="10" height="10" viewBox="0 0 10 10"><circle cx="5" cy="5" r="4" fill="none" stroke="#6a6a6a" stroke-width="1.1"/></svg>
<div class="t" style="left:30px;top:858.5px;height:16px;line-height:16px;color:#e6e6e6;font-size:12px;">Time Scale</div>
<div class="a" style="left:178px;top:771px;width:192px;height:14px;background:#4e4e4e;border-radius:3px"></div>
<div class="t" style="left:181px;top:770.5px;height:16px;line-height:16px;color:#e6e6e6;font-size:12px;">Seconds</div>
<svg class="a" style="left:358px;top:776.0px;" width="10" height="6" viewBox="0 0 10 6"><path d="M0.5 0.5 L5.0 5 L9.5 0.5" fill="none" stroke="#cfcfcf" stroke-width="1"/></svg>
<div class="a" style="left:177.3px;top:792px;width:93.7px;height:15.8px;background:#262626;border-radius:3px"></div>
<div class="t" style="left:180.8px;top:792.4px;height:16px;line-height:16px;color:#6a6a6a;font-size:12px;">#</div>
<div class="t" style="left:194.3px;top:792.4px;height:16px;line-height:16px;color:#e6e6e6;font-size:12px;">5.0</div>
<div class="a" style="left:177.3px;top:814px;width:93.7px;height:15.8px;background:#262626;border-radius:3px"></div>
<div class="t" style="left:180.8px;top:814.4px;height:16px;line-height:16px;color:#6a6a6a;font-size:12px;">#</div>
<div class="t" style="left:194.3px;top:814.4px;height:16px;line-height:16px;color:#d8c07a;font-size:12px;">0.0</div>
<svg class="a" style="left:250px;top:817px;" width="10" height="10" viewBox="0 0 10 10"><path d="M8 2 H5 L2 5 L5 8 H8Z" fill="#d8c07a"/></svg>
<div class="a" style="left:261px;top:814px;width:10px;height:15.8px;background:#2e2e2e;"></div>
<svg class="a" style="left:261px;top:817px;" width="10" height="10" viewBox="0 0 10 10"><path d="M2 2 H5 L8 5 L5 8 H2Z" fill="#666"/></svg>
<div class="a" style="left:273px;top:814px;width:16px;height:16px;background:#2c2c2c;border-radius:3px;border:1px solid #1f1f1f;"></div>
<svg class="a" style="left:273px;top:814px;" width="16" height="16" viewBox="0 0 16 16"><path d="M4.5 4.5 L11.5 11.5M11.5 4.5 L4.5 11.5" stroke="#d0d0d0" stroke-width="1.1"/></svg>
<div class="a" style="left:177.3px;top:836px;width:93.7px;height:15.8px;background:#262626;border-radius:3px"></div>
<div class="t" style="left:180.8px;top:836.4px;height:16px;line-height:16px;color:#6a6a6a;font-size:12px;">S</div>
<div class="t" style="left:194.3px;top:836.4px;height:16px;line-height:16px;color:#e6e6e6;font-size:12px;">0.0</div>
<div class="a" style="left:177.3px;top:858px;width:93.7px;height:15.8px;background:#262626;border-radius:3px"></div>
<div class="t" style="left:180.8px;top:858.4px;height:16px;line-height:16px;color:#6a6a6a;font-size:12px;">#</div>
<div class="t" style="left:194.3px;top:858.4px;height:16px;line-height:16px;color:#e6e6e6;font-size:12px;">1.0</div>
<div class="a" style="left:166px;top:647px;width:119px;height:54px;border:3.2px solid #bdeb1b"></div>
<svg class="a" style="left:296px;top:653px;" width="28" height="44" viewBox="0 0 28 44"><path d="M9.5 4.2 H18.4 V22 H22.5 L14 39 L5.5 22 H9.5 Z" fill="none" stroke="#bdeb1b" stroke-width="2.5" stroke-linejoin="round"/></svg>
<div class="a" style="left:6px;top:877px;width:468px;height:4px;background:#262626;"></div>
<div class="a" style="left:6px;top:881px;width:468px;height:23px;background:#353535;"></div>
<div class="a" style="left:6px;top:881px;width:468px;height:1.5px;background:#f0dc6c;"></div>
<div class="a" style="left:6px;top:881px;width:4px;height:23px;background:#f0dc6c;"></div>
<div class="a" style="left:470px;top:881px;width:4px;height:23px;background:#f0dc6c;"></div>
<svg class="a" style="left:15px;top:890.5px;" width="9" height="6" viewBox="0 0 9 6"><path d="M0.5 0.5 L4.5 5 L8.5 0.5" fill="none" stroke="#aaa" stroke-width="1"/></svg>
<div class="a" style="left:28px;top:883.5px;width:18px;height:18px;background:#262626;border-radius:3px"></div>
<svg class="a" style="left:29px;top:885px;" width="16" height="14" viewBox="0 0 16 14"><path d="M1 7 Q8 0 15 7 Q8 14 1 7Z" fill="none" stroke="#cfcfcf" stroke-width="1.2"/><circle cx="8" cy="7" r="2.4" fill="#cfcfcf"/></svg>
<svg class="a" style="left:50px;top:887.5px;" width="10" height="10" viewBox="0 0 10 10"><circle cx="5" cy="5" r="4" fill="none" stroke="#5e5e5e" stroke-width="1.1"/></svg>
<svg class="a" style="left:63px;top:884px;" width="20" height="16" viewBox="0 0 20 16"><path d="M7 2.5 H13 M7 14.5 H13 M4.5 5 V11 M16.5 5 V11" stroke="#e8d46a" stroke-width="1.1"/><rect x="3.5" y="1.5" width="2.2" height="2.2" fill="#f0f0f0"/><rect x="15.3" y="1.5" width="2.2" height="2.2" fill="#f0f0f0"/><rect x="3.5" y="13.3" width="2.2" height="2.2" fill="#f0f0f0"/><rect x="15.3" y="13.3" width="2.2" height="2.2" fill="#f0f0f0"/></svg>
<div class="t" style="left:87px;top:885.5px;height:16px;line-height:16px;color:#e6e6e6;font-size:12px;">Ellipse Shape</div>
<div class="a" style="left:366px;top:885px;width:16.5px;height:16.5px;background:#2c2c2c;border-radius:3px;border:1px solid #1f1f1f;"></div>
<div class="a" style="left:411px;top:885px;width:16.5px;height:16.5px;background:#2c2c2c;border-radius:3px;border:1px solid #1f1f1f;"></div>
<div class="a" style="left:431px;top:885px;width:16.5px;height:16.5px;background:#2c2c2c;border-radius:3px;border:1px solid #1f1f1f;"></div>
<div class="a" style="left:451px;top:885px;width:16.5px;height:16.5px;background:#2c2c2c;border-radius:3px;border:1px solid #1f1f1f;"></div>
<div class="a" style="left:386px;top:885px;width:20px;height:16.5px;background:#2a2a2a;border-radius:3px"></div>
<div class="a" style="left:396px;top:885px;width:1px;height:16.5px;background:#3a3a3a;"></div>
<svg class="a" style="left:366px;top:885px;" width="17" height="17" viewBox="0 0 17 17"><rect x="2.5" y="4" width="5" height="2" fill="#ddd"/><rect x="2.5" y="10" width="5" height="2" fill="#ddd"/><rect x="7" y="5" width="1" height="6" fill="#aaa"/><rect x="9" y="7" width="6" height="2" fill="#ddd"/><path d="M13.5 15 L15.5 13 V15Z" fill="#5fd4b0"/></svg>
<svg class="a" style="left:386px;top:885px;" width="20" height="17" viewBox="0 0 20 17"><path d="M8 4.8 V11 H5 L2 7.9 L5 4.8Z" fill="#d8c07a"/><path d="M12.7 4.8 H15.8 L18.8 7.9 L15.8 11 H12.7Z" fill="#777"/></svg>
<svg class="a" style="left:411px;top:885px;" width="17" height="17" viewBox="0 0 17 17"><path d="M5 2.5 H12 L11 4 V8 L13.5 10.5 H3.5 L6 8 V4Z" fill="#d8d8d8"/><rect x="8" y="10.5" width="1.2" height="5" fill="#d8d8d8"/></svg>
<svg class="a" style="left:431px;top:885px;" width="17" height="17" viewBox="0 0 17 17"><circle cx="5" cy="3.5" r="1.2" fill="#bbb"/><circle cx="11.5" cy="4.5" r="1.2" fill="#bbb"/><circle cx="4.5" cy="9.5" r="1.2" fill="#bbb"/><path d="M10 6.5 L11 9.5 L14 10.5 L11 11.5 L10 14.5 L9 11.5 L6 10.5 L9 9.5Z" fill="#ddd"/><path d="M13.5 15 L15.5 13 V15Z" fill="#5fd4b0"/></svg>
<svg class="a" style="left:451px;top:885px;" width="17" height="17" viewBox="0 0 17 17"><path d="M4 4 L13 13M13 4 L4 13" stroke="#d0d0d0" stroke-width="1.1"/></svg>
<div class="a" style="left:6px;top:904px;width:468px;height:22px;background:#262626;"></div>
<div class="a" style="left:9px;top:906.5px;width:93px;height:19.5px;background:#3a3a3a;border-radius:3px 3px 0 0"></div>
<div class="t" style="left:39.5px;top:908.5px;height:16px;line-height:16px;color:#e6e6e6;font-size:12px;">Shape</div>
<div class="a" style="left:108px;top:911px;width:10px;height:10px;background:#3ce38e;"></div>
<div class="t" style="left:144px;top:908.5px;height:16px;line-height:16px;color:#b8b8b8;font-size:12px;">Fill</div>
<div class="a" style="left:195px;top:910px;width:1px;height:12px;background:#aaa;"></div>
<div class="a" style="left:200px;top:910px;width:12px;height:12px;background:#2e2e2e;border-radius:2px"></div>
<svg class="a" style="left:200px;top:910px;" width="12" height="12" viewBox="0 0 12 12"><path d="M1.5 10.5 L10.5 1.5" stroke="#b06060" stroke-width="1"/></svg>
<div class="t" style="left:227.6px;top:908.5px;height:16px;line-height:16px;color:#b8b8b8;font-size:12px;">Stroke</div>
<div class="a" style="left:287px;top:910px;width:1px;height:12px;background:#aaa;"></div>
<div class="t" style="left:316.6px;top:908.5px;height:16px;line-height:16px;color:#b8b8b8;font-size:12px;">Masks</div>
<div class="a" style="left:380px;top:910px;width:1px;height:12px;background:#aaa;"></div>
<div class="t" style="left:400.7px;top:908.5px;height:16px;line-height:16px;color:#b8b8b8;font-size:12px;">Advanced</div>
<div class="a" style="left:6px;top:926px;width:468px;height:98px;background:#353535;"></div>
<svg class="a" style="left:14px;top:931.5px;" width="10" height="10" viewBox="0 0 10 10"><circle cx="5" cy="5" r="4" fill="none" stroke="#6a6a6a" stroke-width="1.1"/></svg>
<div class="t" style="left:30px;top:930.0px;height:16px;line-height:16px;color:#8a8a8a;font-size:12px;">Position</div>
<svg class="a" style="left:14px;top:953.5px;" width="10" height="10" viewBox="0 0 10 10"><circle cx="5" cy="5" r="4" fill="none" stroke="#6a6a6a" stroke-width="1.1"/></svg>
<div class="t" style="left:30px;top:952.0px;height:16px;line-height:16px;color:#8a8a8a;font-size:12px;">Rotation</div>
<svg class="a" style="left:14px;top:975.5px;" width="10" height="10" viewBox="0 0 10 10"><circle cx="5" cy="5" r="4" fill="none" stroke="#6a6a6a" stroke-width="1.1"/></svg>
<div class="t" style="left:30px;top:974.0px;height:16px;line-height:16px;color:#8a8a8a;font-size:12px;">Scale</div>
<svg class="a" style="left:14px;top:997.5px;" width="10" height="10" viewBox="0 0 10 10"><circle cx="5" cy="5" r="4" fill="none" stroke="#6a6a6a" stroke-width="1.1"/></svg>
<div class="t" style="left:30px;top:996.0px;height:16px;line-height:16px;color:#8a8a8a;font-size:12px;">Skew</div>
<svg class="a" style="left:14px;top:1019.5px;" width="10" height="10" viewBox="0 0 10 10"><circle cx="5" cy="5" r="4" fill="none" stroke="#6a6a6a" stroke-width="1.1"/></svg>
<div class="t" style="left:30px;top:1018.0px;height:16px;line-height:16px;color:#8a8a8a;font-size:12px;">Pivot</div>
<div class="a" style="left:177.3px;top:929.5px;width:93.7px;height:15.8px;background:#262626;border-radius:3px"></div>
<div class="t" style="left:180.8px;top:929.9px;height:16px;line-height:16px;color:#777;font-size:12px;">X</div>
<div class="t" style="left:194.3px;top:929.9px;height:16px;line-height:16px;color:#d8c07a;font-size:12px;">-195.0</div>
<svg class="a" style="left:250px;top:932.5px;" width="10" height="10" viewBox="0 0 10 10"><path d="M8 2 H5 L2 5 L5 8 H8Z" fill="#d8c07a"/></svg>
<div class="a" style="left:261px;top:929.5px;width:10px;height:15.8px;background:#2e2e2e;"></div>
<svg class="a" style="left:261px;top:932.5px;" width="10" height="10" viewBox="0 0 10 10"><path d="M2 2 H5 L8 5 L5 8 H2Z" fill="#666"/></svg>
<div class="a" style="left:277px;top:929.5px;width:93.7px;height:15.8px;background:#262626;border-radius:3px"></div>
<div class="t" style="left:280.5px;top:929.9px;height:16px;line-height:16px;color:#777;font-size:12px;">Y</div>
<div class="t" style="left:294px;top:929.9px;height:16px;line-height:16px;color:#e6e6e6;font-size:12px;">0.0</div>
<div class="a" style="left:177.3px;top:951.5px;width:93.7px;height:15.8px;background:#262626;border-radius:3px"></div>
<div class="t" style="left:180.8px;top:951.9px;height:16px;line-height:16px;color:#777;font-size:12px;">Z</div>
<div class="t" style="left:194.3px;top:951.9px;height:16px;line-height:16px;color:#e6e6e6;font-size:12px;">0.0</div>
<div class="a" style="left:177.3px;top:973.5px;width:93.7px;height:15.8px;background:#262626;border-radius:3px"></div>
<div class="t" style="left:180.8px;top:973.9px;height:16px;line-height:16px;color:#777;font-size:12px;">X</div>
<div class="t" style="left:194.3px;top:973.9px;height:16px;line-height:16px;color:#e6e6e6;font-size:12px;">1.0</div>
<div class="a" style="left:277px;top:973.5px;width:93.7px;height:15.8px;background:#262626;border-radius:3px"></div>
<div class="t" style="left:280.5px;top:973.9px;height:16px;line-height:16px;color:#777;font-size:12px;">Y</div>
<div class="t" style="left:294px;top:973.9px;height:16px;line-height:16px;color:#e6e6e6;font-size:12px;">1.0</div>
<div class="a" style="left:377.6px;top:973px;width:15.5px;height:15.5px;background:#2c2c2c;border-radius:3px;border:1px solid #1f1f1f;"></div>
<svg class="a" style="left:377.6px;top:973px;" width="16" height="16" viewBox="0 0 16 16"><path d="M5 6 V4.5 A3 3 0 0 1 11 4.5 V6 M5 10 V11.5 A3 3 0 0 0 11 11.5 V10" fill="none" stroke="#ccc" stroke-width="1.1"/><rect x="7.5" y="6" width="1" height="4" fill="#ccc"/></svg>
<div class="a" style="left:177.3px;top:995.5px;width:93.7px;height:15.8px;background:#262626;border-radius:3px"></div>
<div class="t" style="left:180.8px;top:995.9px;height:16px;line-height:16px;color:#777;font-size:12px;">X</div>
<div class="t" style="left:194.3px;top:995.9px;height:16px;line-height:16px;color:#e6e6e6;font-size:12px;">0.0</div>
<div class="a" style="left:277px;top:995.5px;width:93.7px;height:15.8px;background:#262626;border-radius:3px"></div>
<div class="t" style="left:280.5px;top:995.9px;height:16px;line-height:16px;color:#777;font-size:12px;">Y</div>
<div class="t" style="left:294px;top:995.9px;height:16px;line-height:16px;color:#e6e6e6;font-size:12px;">0.0</div>
<div class="a" style="left:177.3px;top:1017.5px;width:93.7px;height:15.8px;background:#262626;border-radius:3px"></div>
<div class="t" style="left:180.8px;top:1017.9000000000001px;height:16px;line-height:16px;color:#777;font-size:12px;">X</div>
<div class="t" style="left:194.3px;top:1017.9000000000001px;height:16px;line-height:16px;color:#e6e6e6;font-size:12px;">0.0</div>
<div class="a" style="left:277px;top:1017.5px;width:93.7px;height:15.8px;background:#262626;border-radius:3px"></div>
<div class="t" style="left:280.5px;top:1017.9000000000001px;height:16px;line-height:16px;color:#777;font-size:12px;">Y</div>
<div class="t" style="left:294px;top:1017.9000000000001px;height:16px;line-height:16px;color:#e6e6e6;font-size:12px;">0.0</div>
<div class="a" style="left:0px;top:1024px;width:490px;height:7px;background:#1c1c1c;"></div>
<div class="a" style="left:494px;top:85px;width:30px;height:495px;background:#464646;"></div>
<div class="a" style="left:494px;top:85px;width:30px;height:10px;background:#3c3c3c;"></div>
<div class="a" style="left:503.3px;top:89px;width:2.2px;height:2.2px;background:#888;"></div>
<div class="a" style="left:508.3px;top:89px;width:2.2px;height:2.2px;background:#888;"></div>
<div class="a" style="left:513.3px;top:89px;width:2.2px;height:2.2px;background:#888;"></div>
<div class="a" style="left:495.3px;top:96px;width:27.5px;height:27.7px;background:#2a2a2a;border-radius:4px"></div>
<svg width="0" height="0" style="position:absolute"><defs><linearGradient id="tg" x1="0" y1="0" x2="0" y2="1"><stop offset="0" stop-color="#f2f2f2"/><stop offset="1" stop-color="#c4c4c4"/></linearGradient></defs></svg>
<svg class="a" style="left:498px;top:99px;" width="21" height="21" viewBox="0 0 21 21"><path d="M6.4 0.6 L6.4 17.6 L9.6 14.5 L11.5 19.3 L14.8 17.9 L12.8 12.6 L18.4 12.2 Z" fill="none" stroke="#3bd07a" stroke-width="1.3" stroke-linejoin="round"/></svg>
<svg class="a" style="left:498px;top:129px;" width="21" height="21" viewBox="0 0 21 21"><path d="M5.3 0.3 L19.6 14 L11.5 14.3 L5.3 20.8Z" fill="#e0e0e0"/></svg>
<svg class="a" style="left:498px;top:159px;" width="21" height="21" viewBox="0 0 21 21"><path d="M2 2.7 L12.5 6 L16 12.5 L12.5 16 L6 12.5 Z" fill="#dcdcdc"/><path d="M13.2 16.8 L16.8 13.2 L19.2 15.6 L15.6 19.2Z" fill="#cfcfcf"/><path d="M2 2.7 L9.5 10" stroke="#404040" stroke-width="0.9"/><circle cx="10" cy="10.2" r="1.3" fill="#404040"/></svg>
<svg class="a" style="left:498px;top:189px;" width="21" height="21" viewBox="0 0 21 21"><path d="M1.2 20.8 L2.8 16 L14.5 4.3 L17.8 7.6 L6.1 19.3 Z" fill="#d8d8d8"/><circle cx="17.3" cy="4.4" r="2.6" fill="#e4e4e4"/><path d="M1.2 20.8 L2.8 16 L6.1 19.3Z" fill="#9a9a9a"/></svg>
<svg class="a" style="left:498px;top:219px;" width="21" height="21" viewBox="0 0 21 21"><path d="M1 5 H13.5 V14.5 L12 16 H1 Z" fill="url(#tg)"/><rect x="3" y="2.5" width="7" height="1.3" fill="url(#tg)"/><circle cx="3.6" cy="7.2" r="1.1" fill="#404040"/><path d="M14.5 10.5 L20.5 6 V16 L14.5 12 Z" fill="url(#tg)"/></svg>
<svg class="a" style="left:498px;top:249px;" width="21" height="21" viewBox="0 0 21 21"><path d="M3 18.5 L18 5" stroke="url(#tg)" stroke-width="1.2"/></svg>
<svg class="a" style="left:498px;top:279px;" width="21" height="21" viewBox="0 0 21 21"><path d="M3.5 3 H17.5 V6 H12 V19 H9 V6 H3.5 Z" fill="url(#tg)"/></svg>
<svg class="a" style="left:498px;top:309px;" width="21" height="21" viewBox="0 0 21 21"><path d="M2.5 1.5 L10.7 8.2 L6.5 8.7 L2.5 13Z" fill="url(#tg)"/><rect x="14.5" y="1" width="2.2" height="2.2" fill="url(#tg)"/><rect x="1.5" y="17" width="2.2" height="2.2" fill="url(#tg)"/><rect x="17.5" y="17" width="2.2" height="2.2" fill="url(#tg)"/><path d="M9 3.2 L14 2.3 M16 3.5 L18.5 16.5 M4.5 18.1 H17" stroke="url(#tg)" stroke-width="0.9"/></svg>
<svg class="a" style="left:498px;top:339px;" width="21" height="21" viewBox="0 0 21 21"><rect x="3.5" y="3.5" width="14" height="14" fill="url(#tg)"/></svg>
<svg class="a" style="left:498px;top:369px;" width="21" height="21" viewBox="0 0 21 21"><circle cx="10.5" cy="10.5" r="8" fill="url(#tg)"/></svg>
<svg class="a" style="left:498px;top:399px;" width="21" height="21" viewBox="0 0 21 21"><path d="M10.5 2.5 L18.5 8.5 L15.5 18 H5.5 L2.5 8.5 Z" fill="url(#tg)"/></svg>
<svg class="a" style="left:498px;top:429px;" width="21" height="21" viewBox="0 0 21 21"><path d="M10.5 2 L12.8 8 L19 8.2 L14 12.2 L15.8 18.5 L10.5 14.8 L5.2 18.5 L7 12.2 L2 8.2 L8.2 8 Z" fill="url(#tg)"/></svg>
<svg class="a" style="left:498px;top:459px;" width="21" height="21" viewBox="0 0 21 21"><path d="M17 12 A6.5 6.5 0 1 0 9.5 17.3" fill="none" stroke="url(#tg)" stroke-width="3"/></svg>
<svg class="a" style="left:498px;top:489px;" width="21" height="21" viewBox="0 0 21 21"><path d="M10.5 2 Q12 9 19 10.5 Q12 12 10.5 19 Q9 12 2 10.5 Q9 9 10.5 2Z" fill="url(#tg)"/></svg>
<svg class="a" style="left:498px;top:519px;" width="21" height="21" viewBox="0 0 21 21"><circle cx="10.5" cy="10.5" r="5.5" fill="none" stroke="url(#tg)" stroke-width="3.5"/><rect x="9" y="1.5" width="3" height="4" fill="url(#tg)" transform="rotate(0 10.5 10.5)"/><rect x="9" y="1.5" width="3" height="4" fill="url(#tg)" transform="rotate(45 10.5 10.5)"/><rect x="9" y="1.5" width="3" height="4" fill="url(#tg)" transform="rotate(90 10.5 10.5)"/><rect x="9" y="1.5" width="3" height="4" fill="url(#tg)" transform="rotate(135 10.5 10.5)"/><rect x="9" y="1.5" width="3" height="4" fill="url(#tg)" transform="rotate(180 10.5 10.5)"/><rect x="9" y="1.5" width="3" height="4" fill="url(#tg)" transform="rotate(225 10.5 10.5)"/><rect x="9" y="1.5" width="3" height="4" fill="url(#tg)" transform="rotate(270 10.5 10.5)"/><rect x="9" y="1.5" width="3" height="4" fill="url(#tg)" transform="rotate(315 10.5 10.5)"/></svg>
<svg class="a" style="left:500px;top:563px;" width="16" height="14" viewBox="0 0 16 14"><path d="M2 2 L7 7 L2 12 M8 2 L13 7 L8 12" fill="none" stroke="#aaa" stroke-width="1.1"/></svg>
<div class="a" style="left:524px;top:85px;width:6px;height:495px;background:#1c1c1c;"></div>
<div class="a" style="left:530px;top:85px;width:1057px;height:22px;background:#1c1c1c;"></div>
<div class="a" style="left:530px;top:85px;width:86.5px;height:22px;background:#3a3a3a;border-radius:3px 3px 0 0"></div>
<div class="t" style="left:535px;top:89.0px;height:16px;line-height:16px;color:#e6e6e6;font-size:12px;">Composition 2</div>
<div class="a" style="left:530px;top:107px;width:1057px;height:451px;background:#000;"></div>
<div class="a" style="left:693.4px;top:127px;width:729px;height:410px;background:#00aeff;"></div>
<div class="a" style="left:938px;top:286.3px;width:92px;height:92px;border-radius:50%;background:#3ce38e"></div>
<div class="t" style="left:569.5px;top:459.7px;height:16px;line-height:16px;font-size:12px;color:#ececec">Hold S <span style="color:#555;mix-blend-mode:difference">Direct Layer Selection</span></div>
<div class="t" style="left:569.5px;top:473.7px;height:16px;line-height:16px;font-size:12px;color:#ececec">Space <span style="color:#555;mix-blend-mode:difference">Play/ Stop</span></div>
<div class="t" style="left:569.5px;top:487.7px;height:16px;line-height:16px;font-size:12px;color:#ececec">Space + click + drag <span style="color:#555;mix-blend-mode:difference">Pan</span></div>
<div class="t" style="left:569.5px;top:501.7px;height:16px;line-height:16px;font-size:12px;color:#ececec">Alt + click + drag <span style="color:#555;mix-blend-mode:difference">Move Pivot Point</span></div>
<div class="t" style="left:569.5px;top:515.7px;height:16px;line-height:16px;font-size:12px;color:#ececec">Shift <span style="color:#555;mix-blend-mode:difference">Enable Snapping</span></div>
<div class="t" style="left:569.5px;top:535.5px;height:16px;line-height:16px;color:#ececec;font-size:12px;">00:00:00:00</div>
<div class="t" style="left:998px;top:535.5px;height:16px;line-height:16px;color:#ececec;font-size:12px;">Viewport Quality: High</div>
<div class="a" style="left:530px;top:558px;width:1057px;height:22px;background:#3f3f3f;"></div>
<div class="a" style="left:535px;top:561px;width:78px;height:16px;background:#262626;border-radius:3px"></div>
<div class="t" style="left:538.5px;top:561.5px;height:16px;line-height:16px;color:#e6e6e6;font-size:12px;">38%</div>
<svg class="a" style="left:600px;top:567px;" width="10" height="6" viewBox="0 0 10 6"><path d="M0.5 0.5 L5.0 5 L9.5 0.5" fill="none" stroke="#cfcfcf" stroke-width="1"/></svg>
<div class="a" style="left:866.5px;top:559.5px;width:99.5px;height:19.5px;background:#2c2c2c;border-radius:4px;border:1px solid #222"></div>
<svg class="a" style="left:867.0px;top:560px;" width="19.5" height="19" viewBox="0 0 19.5 19"><rect x="4.5" y="4" width="1.6" height="11" fill="#d8d8d8"/><path d="M15 4 V15 L7 9.5Z" fill="#d8d8d8"/></svg>
<div class="a" style="left:886.8px;top:560px;width:1px;height:18px;background:#222;"></div>
<svg class="a" style="left:886.8px;top:560px;" width="19.5" height="19" viewBox="0 0 19.5 19"><path d="M12.5 4 V15 L5 9.5Z" fill="#d8d8d8"/><rect x="13.5" y="4" width="1.6" height="11" fill="#d8d8d8"/></svg>
<div class="a" style="left:906.6px;top:560px;width:1px;height:18px;background:#222;"></div>
<svg class="a" style="left:906.6px;top:560px;" width="19.5" height="19" viewBox="0 0 19.5 19"><path d="M6 4 V15 L14.5 9.5Z" fill="#d8d8d8"/></svg>
<div class="a" style="left:926.4px;top:560px;width:1px;height:18px;background:#222;"></div>
<svg class="a" style="left:926.4px;top:560px;" width="19.5" height="19" viewBox="0 0 19.5 19"><rect x="4.5" y="4" width="1.6" height="11" fill="#d8d8d8"/><path d="M7.5 4 V15 L15 9.5Z" fill="#d8d8d8"/></svg>
<div class="a" style="left:946.2px;top:560px;width:1px;height:18px;background:#222;"></div>
<svg class="a" style="left:946.2px;top:560px;" width="19.5" height="19" viewBox="0 0 19.5 19"><path d="M5 4 V15 L12.5 9.5Z" fill="#d8d8d8"/><rect x="13.5" y="4" width="1.6" height="11" fill="#d8d8d8"/></svg>
<div class="a" style="left:971px;top:560px;width:19.5px;height:18.5px;background:#2c2c2c;border-radius:3px;border:1px solid #1f1f1f;"></div>
<svg class="a" style="left:971px;top:560px;" width="20" height="19" viewBox="0 0 20 19"><path d="M4 7 V14 H16 V9" fill="none" stroke="#d8d8d8" stroke-width="1.4"/><path d="M8 9.5 H14 M11.5 6.5 L14.5 9.5 L11.5 12.5" fill="none" stroke="#d8d8d8" stroke-width="1.4"/></svg>
<div class="a" style="left:1232px;top:559.5px;width:36.5px;height:18.5px;background:#2c2c2c;border-radius:4px;border:1px solid #222"></div>
<svg class="a" style="left:1233px;top:560px;" width="19" height="18" viewBox="0 0 19 18"><path d="M3 9 L6.5 5 H16 V13 H6.5Z" fill="#d8d8d8"/><circle cx="8" cy="9" r="1.5" fill="#2c2c2c"/></svg>
<div class="t" style="left:1257px;top:561.5px;height:16px;line-height:16px;color:#cfcfcf;font-size:12px;">0</div>
<div class="a" style="left:1272.5px;top:559.5px;width:30.5px;height:18.5px;background:#2c2c2c;border-radius:4px;border:1px solid #222"></div>
<svg class="a" style="left:1273.5px;top:560px;" width="19" height="18" viewBox="0 0 19 18"><path d="M2.5 7 H5.5 L9 4 V14 L5.5 11 H2.5Z" fill="#3bd07a"/><path d="M11.5 6.5 Q13.5 9 11.5 11.5 M13.5 4.5 Q17 9 13.5 13.5" fill="none" stroke="#3bd07a" stroke-width="1.3"/></svg>
<div class="a" style="left:1292.0px;top:560.5px;width:1px;height:17px;background:#222;"></div>
<svg class="a" style="left:1292.5px;top:561px;" width="10" height="16" viewBox="0 0 10 16"><path d="M3 5 L7 8 L3 11Z" fill="none" stroke="#999" stroke-width="0.9"/></svg>
<div class="a" style="left:1307.8px;top:559.5px;width:30.5px;height:18.5px;background:#2c2c2c;border-radius:4px;border:1px solid #222"></div>
<svg class="a" style="left:1308.8px;top:560px;" width="19" height="18" viewBox="0 0 19 18"><path d="M8 3.2 L5.3 5.9 A4.9 4.9 0 0 0 12.3 12.9 L15 10.2" fill="none" stroke="#dadada" stroke-width="2.4"/></svg>
<div class="a" style="left:1327.3px;top:560.5px;width:1px;height:17px;background:#222;"></div>
<svg class="a" style="left:1327.8px;top:561px;" width="10" height="16" viewBox="0 0 10 16"><path d="M3 5 L7 8 L3 11Z" fill="none" stroke="#999" stroke-width="0.9"/></svg>
<div class="a" style="left:1308.8px;top:560.5px;width:18.5px;height:17.5px;background:#404040;border-radius:3px 0 0 3px"></div>
<svg class="a" style="left:1308.8px;top:560px;" width="19" height="18" viewBox="0 0 19 18"><path d="M8 3.2 L5.3 5.9 A4.9 4.9 0 0 0 12.3 12.9 L15 10.2" fill="none" stroke="#dadada" stroke-width="2.4"/></svg>
<div class="a" style="left:1342px;top:559.5px;width:31.4px;height:18.5px;background:#2c2c2c;border-radius:4px;border:1px solid #222"></div>
<svg class="a" style="left:1343px;top:560px;" width="19" height="18" viewBox="0 0 19 18"></svg>
<div class="a" style="left:1361.5px;top:560.5px;width:1px;height:17px;background:#222;"></div>
<svg class="a" style="left:1362px;top:561px;" width="10" height="16" viewBox="0 0 10 16"><path d="M3 5 L7 8 L3 11Z" fill="none" stroke="#999" stroke-width="0.9"/></svg>
<div class="a" style="left:1343px;top:560.5px;width:18.5px;height:17.5px;background:#404040;border-radius:3px 0 0 3px"></div>
<svg class="a" style="left:1343px;top:560px;" width="19" height="18" viewBox="0 0 19 18"><path d="M6.5 2 V16.5 M12 2 V16.5 M2 6.5 H16 M2 12 H16" stroke="#dadada" stroke-width="1.2"/></svg>
<div class="a" style="left:1377.5px;top:559.5px;width:19.5px;height:18.5px;background:#2c2c2c;border-radius:4px;border:1px solid #222"></div>
<svg class="a" style="left:1378px;top:560px;" width="19" height="18" viewBox="0 0 19 18"><rect x="2" y="3.5" width="4" height="5" fill="#3bd07a"/><rect x="7" y="3" width="10" height="7.5" fill="#3bd07a"/><rect x="8.5" y="4.5" width="7" height="4.5" fill="#2c2c2c"/><rect x="2" y="10" width="4" height="6" fill="#3bd07a"/><rect x="7" y="12" width="10" height="4" fill="#3bd07a"/></svg>
<div class="a" style="left:1400px;top:559.5px;width:19.5px;height:18.5px;background:#2c2c2c;border-radius:4px;border:1px solid #222"></div>
<svg class="a" style="left:1400px;top:560px;" width="19" height="18" viewBox="0 0 19 18"><path d="M2 4 L7 9 L2 14 M7 4 L12 9 L7 14 M12 4 L17 9 L12 14" fill="none" stroke="#d8d8d8" stroke-width="1.6"/></svg>
<div class="a" style="left:1423.4px;top:559.5px;width:30.6px;height:18.5px;background:#2c2c2c;border-radius:4px;border:1px solid #222"></div>
<svg class="a" style="left:1424.4px;top:560px;" width="19" height="18" viewBox="0 0 19 18"><rect x="2.5" y="3.5" width="14" height="10" fill="none" stroke="#d8d8d8" stroke-width="1.4"/><rect x="2" y="13.5" width="15" height="2" fill="#aaa"/></svg>
<div class="a" style="left:1442.9px;top:560.5px;width:1px;height:17px;background:#222;"></div>
<svg class="a" style="left:1443.4px;top:561px;" width="10" height="16" viewBox="0 0 10 16"><path d="M3 5 L7 8 L3 11Z" fill="none" stroke="#999" stroke-width="0.9"/></svg>
<div class="a" style="left:1458.4px;top:559.5px;width:30.6px;height:18.5px;background:#2c2c2c;border-radius:4px;border:1px solid #222"></div>
<svg class="a" style="left:1459.4px;top:560px;" width="19" height="18" viewBox="0 0 19 18"><rect x="2.5" y="2.5" width="9" height="7" fill="none" stroke="#d8d8d8" stroke-width="1"/><rect x="4.5" y="5.5" width="10" height="7" fill="none" stroke="#d8d8d8" stroke-width="1"/><rect x="6.5" y="8.5" width="10" height="7" fill="#2c2c2c" stroke="#d8d8d8" stroke-width="1"/></svg>
<div class="a" style="left:1477.9px;top:560.5px;width:1px;height:17px;background:#222;"></div>
<svg class="a" style="left:1478.4px;top:561px;" width="10" height="16" viewBox="0 0 10 16"><path d="M3 5 L7 8 L3 11Z" fill="none" stroke="#999" stroke-width="0.9"/></svg>
<div class="a" style="left:1493px;top:559.5px;width:31px;height:18.5px;background:#2c2c2c;border-radius:4px;border:1px solid #222"></div>
<svg class="a" style="left:1494px;top:560px;" width="19" height="18" viewBox="0 0 19 18"><rect x="2" y="2" width="9" height="9" fill="#d8d8d8"/><rect x="6.5" y="7.5" width="10" height="9" fill="#2c2c2c" stroke="#d8d8d8" stroke-width="1.2"/></svg>
<div class="a" style="left:1512.5px;top:560.5px;width:1px;height:17px;background:#222;"></div>
<svg class="a" style="left:1513px;top:561px;" width="10" height="16" viewBox="0 0 10 16"><path d="M3 5 L7 8 L3 11Z" fill="none" stroke="#999" stroke-width="0.9"/></svg>
<div class="a" style="left:1528px;top:559.5px;width:31px;height:18.5px;background:#2c2c2c;border-radius:4px;border:1px solid #222"></div>
<svg class="a" style="left:1529px;top:560px;" width="19" height="18" viewBox="0 0 19 18"><rect x="2" y="2" width="3" height="3" fill="#3bd07a"/><rect x="2" y="8" width="3" height="3" fill="#3bd07a"/><rect x="2" y="14" width="3" height="3" fill="#3bd07a"/><rect x="5" y="5" width="3" height="3" fill="#3bd07a"/><rect x="5" y="11" width="3" height="3" fill="#3bd07a"/><rect x="8" y="2" width="3" height="3" fill="#3bd07a"/><rect x="8" y="8" width="3" height="3" fill="#3bd07a"/><rect x="8" y="14" width="3" height="3" fill="#3bd07a"/><rect x="11" y="5" width="3" height="3" fill="#3bd07a"/><rect x="11" y="11" width="3" height="3" fill="#3bd07a"/><rect x="14" y="2" width="3" height="3" fill="#3bd07a"/><rect x="14" y="8" width="3" height="3" fill="#3bd07a"/><rect x="14" y="14" width="3" height="3" fill="#3bd07a"/></svg>
<div class="a" style="left:1547.5px;top:560.5px;width:1px;height:17px;background:#222;"></div>
<svg class="a" style="left:1548px;top:561px;" width="10" height="16" viewBox="0 0 10 16"><path d="M3 5 L7 8 L3 11Z" fill="none" stroke="#999" stroke-width="0.9"/></svg>
<div class="a" style="left:1562.5px;top:559.5px;width:20.3px;height:18.5px;background:#2c2c2c;border-radius:4px;border:1px solid #222"></div>
<svg class="a" style="left:1563px;top:560px;" width="19" height="18" viewBox="0 0 19 18"><circle cx="9.5" cy="9" r="3.5" fill="none" stroke="#d8d8d8" stroke-width="2.6"/><rect x="8.3" y="1.5" width="2.4" height="3" fill="#d8d8d8" transform="rotate(0 9.5 9)"/><rect x="8.3" y="1.5" width="2.4" height="3" fill="#d8d8d8" transform="rotate(45 9.5 9)"/><rect x="8.3" y="1.5" width="2.4" height="3" fill="#d8d8d8" transform="rotate(90 9.5 9)"/><rect x="8.3" y="1.5" width="2.4" height="3" fill="#d8d8d8" transform="rotate(135 9.5 9)"/><rect x="8.3" y="1.5" width="2.4" height="3" fill="#d8d8d8" transform="rotate(180 9.5 9)"/><rect x="8.3" y="1.5" width="2.4" height="3" fill="#d8d8d8" transform="rotate(225 9.5 9)"/><rect x="8.3" y="1.5" width="2.4" height="3" fill="#d8d8d8" transform="rotate(270 9.5 9)"/><rect x="8.3" y="1.5" width="2.4" height="3" fill="#d8d8d8" transform="rotate(315 9.5 9)"/></svg>
<div class="a" style="left:1587px;top:85px;width:6px;height:495px;background:#1c1c1c;"></div>
<div class="a" style="left:1593px;top:85px;width:321px;height:22px;background:#1c1c1c;"></div>
<div class="a" style="left:1593px;top:85px;width:40px;height:22px;background:#444;border-radius:3px 3px 0 0"></div>
<div class="t" style="left:1598px;top:89.0px;height:16px;line-height:16px;color:#e6e6e6;font-size:12px;">Color</div>
<div class="a" style="left:1634px;top:85px;width:68.7px;height:22px;background:#252525;border-radius:3px 3px 0 0"></div>
<div class="t" style="left:1639.7px;top:89.0px;height:16px;line-height:16px;color:#e6e6e6;font-size:12px;">Add Layers</div>
<div class="a" style="left:1593px;top:107px;width:321px;height:377px;background:#444444;"></div>
<div class="a" style="left:1900px;top:107px;width:14px;height:377px;background:#3a3a3a;"></div>
<div class="a" style="left:1902px;top:108px;width:10px;height:302px;background:#555;border-radius:5px"></div>
<div class="a" style="left:1646px;top:120px;width:200px;height:200px;border-radius:50%;background:conic-gradient(hsl(90,100%,50%) 0deg,hsl(75,100%,50%) 15deg,hsl(60,100%,50%) 30deg,hsl(45,100%,50%) 45deg,hsl(30,100%,50%) 60deg,hsl(15,100%,50%) 75deg,hsl(0,100%,50%) 90deg,hsl(345,100%,50%) 105deg,hsl(330,100%,50%) 120deg,hsl(315,100%,50%) 135deg,hsl(300,100%,50%) 150deg,hsl(285,100%,50%) 165deg,hsl(270,100%,50%) 180deg,hsl(255,100%,50%) 195deg,hsl(240,100%,50%) 210deg,hsl(225,100%,50%) 225deg,hsl(210,100%,50%) 240deg,hsl(195,100%,50%) 255deg,hsl(180,100%,50%) 270deg,hsl(165,100%,50%) 285deg,hsl(150,100%,50%) 300deg,hsl(135,100%,50%) 315deg,hsl(120,100%,50%) 330deg,hsl(105,100%,50%) 345deg,hsl(90,100%,50%) 360deg)"></div>
<div class="a" style="left:1671px;top:145px;width:150px;height:150px;border-radius:50%;background:#444"></div>
<div class="a" style="left:1702px;top:176px;width:90px;height:90px;background:linear-gradient(to right,#000,rgba(0,0,0,0)),linear-gradient(to bottom,#fff,#00ff80)"></div>
<div class="a" style="left:1664.7px;top:169.3px;width:13px;height:13px;border-radius:50%;border:1.2px solid #f0f0f0"></div>
<div class="a" style="left:1775.5px;top:235.5px;width:13px;height:13px;border-radius:50%;border:1.2px solid #f0f0f0"></div>
<div class="a" style="left:1600px;top:333px;width:22px;height:22px;background:#3ce38e;border-radius:3px"></div>
<div class="a" style="left:1871px;top:333px;width:22px;height:21.5px;background:#2c2c2c;border-radius:3px;border:1px solid #1f1f1f;"></div>
<svg class="a" style="left:1874px;top:336px;" width="16" height="16" viewBox="0 0 16 16"><path d="M3 14 L10 7" stroke="#ccc" stroke-width="2.2"/><path d="M3.5 13.5 L10 7" stroke="#444" stroke-width="0.8"/><circle cx="12" cy="4.5" r="2.6" fill="#d0d0d0"/><path d="M8.5 5.5 L11 8" stroke="#d0d0d0" stroke-width="2"/></svg>
<div class="a" style="left:1600.3px;top:360.7px;width:49px;height:17px;background:#3a3a3a;border-radius:3px;border:1px solid #2c2c2c"></div>
<div class="t" style="left:1603px;top:361.5px;height:16px;line-height:16px;color:#e6e6e6;font-size:12px;">Hex</div>
<svg class="a" style="left:1635px;top:367px;" width="10" height="6" viewBox="0 0 10 6"><path d="M0.5 0.5 L5.0 5 L9.5 0.5" fill="none" stroke="#cfcfcf" stroke-width="1"/></svg>
<div class="a" style="left:1653.3px;top:358.6px;width:239.5px;height:21.2px;background:#262626;border-radius:3px"></div>
<div class="t" style="left:1658px;top:361.5px;height:16px;line-height:16px;color:#5e5e5e;font-size:12px;">#</div>
<div class="t" style="left:1670.4px;top:361.5px;height:16px;line-height:16px;color:#e6e6e6;font-size:12px;">3ce38e</div>
<div class="a" style="left:1600px;top:390.5px;width:235px;height:3.5px;background:#e8e8e8;border-radius:2px"></div>
<div class="a" style="left:1829px;top:387.2px;width:10px;height:10px;border-radius:50%;background:#7fd8bd;border:2px solid #5bbf9c"></div>
<div class="a" style="left:1849.4px;top:384.4px;width:43.4px;height:15.6px;background:#262626;border-radius:3px"></div>
<div class="t" style="left:1853px;top:384.5px;height:16px;line-height:16px;color:#5e5e5e;font-size:12px;">A</div>
<div class="t" style="left:1866px;top:384.5px;height:16px;line-height:16px;color:#e6e6e6;font-size:12px;">255</div>
<div class="a" style="left:1597px;top:407.5px;width:299px;height:20.5px;background:#2e2e2e;border-radius:3px"></div>
<div class="a" style="left:1599.5px;top:408.5px;width:147.5px;height:19.5px;background:#4e4e4e;border-radius:3px 3px 0 0"></div>
<div class="t" style="left:1648px;top:410.5px;height:16px;line-height:16px;color:#e6e6e6;font-size:12px;">Swatches</div>
<div class="t" style="left:1793px;top:410.5px;height:16px;line-height:16px;color:#b8b8b8;font-size:12px;">Generator</div>
<div class="a" style="left:1598px;top:430.5px;width:257px;height:18.5px;background:#555;border-radius:3px"></div>
<div class="a" style="left:1599.5px;top:431.5px;width:62px;height:17px;background:#2a2a2a;border-radius:3px"></div>
<svg class="a" style="left:1603px;top:433px;" width="14" height="14" viewBox="0 0 14 14"><rect x="1.5" y="2" width="1.8" height="10" fill="#3bd07a"/><rect x="4.5" y="2" width="1.8" height="10" fill="#3bd07a"/><path d="M8 2.5 L11.5 12" stroke="#3bd07a" stroke-width="1.8"/></svg>
<div class="t" style="left:1620px;top:432.0px;height:16px;line-height:16px;color:#e6e6e6;font-size:12px;">Library</div>
<svg class="a" style="left:1669px;top:433px;" width="14" height="14" viewBox="0 0 14 14"><path d="M1.5 3 H5 L6 4 H12.5 V12 H1.5Z" fill="#cfcfcf"/><rect x="3" y="6" width="8" height="1" fill="#555"/><rect x="3" y="8.5" width="8" height="1" fill="#555"/></svg>
<div class="t" style="left:1686px;top:432.0px;height:16px;line-height:16px;color:#e6e6e6;font-size:12px;">Project</div>
<svg class="a" style="left:1737px;top:433px;" width="14" height="14" viewBox="0 0 14 14"><path d="M3 1.5 H8.5 L11.5 4.5 V12.5 H3Z" fill="none" stroke="#cfcfcf" stroke-width="1.1"/></svg>
<div class="t" style="left:1752.5px;top:432.0px;height:16px;line-height:16px;color:#e6e6e6;font-size:12px;">Scene</div>
<svg class="a" style="left:1799px;top:433px;" width="14" height="14" viewBox="0 0 14 14"><path d="M2 2 H12 V8 L8 12 H2Z" fill="none" stroke="#cfcfcf" stroke-width="1.1" stroke-linejoin="round"/></svg>
<div class="t" style="left:1816px;top:432.0px;height:16px;line-height:16px;color:#e6e6e6;font-size:12px;">Labels</div>
<div class="a" style="left:1859px;top:431.5px;width:15.6px;height:17px;background:#2a2a2a;border-radius:3px"></div>
<svg class="a" style="left:1859px;top:432px;" width="16" height="16" viewBox="0 0 16 16"><rect x="3.5" y="3.5" width="3.5" height="3.5" fill="#3bd07a"/><rect x="8.5" y="3.5" width="3.5" height="3.5" fill="#3bd07a"/><rect x="3.5" y="8.5" width="3.5" height="3.5" fill="#3bd07a"/><rect x="8.5" y="8.5" width="3.5" height="3.5" fill="#3bd07a"/></svg>
<svg class="a" style="left:1879px;top:432px;" width="15" height="16" viewBox="0 0 15 16"><rect x="1.5" y="3.5" width="11" height="1.2" fill="#cfcfcf"/><rect x="1.5" y="7.5" width="11" height="1.2" fill="#cfcfcf"/><rect x="1.5" y="11.5" width="11" height="1.2" fill="#cfcfcf"/></svg>
<div class="a" style="left:1599.5px;top:453px;width:273.5px;height:16px;background:#4a4a4a;border-radius:3px"></div>
<div class="t" style="left:1602px;top:453.5px;height:16px;line-height:16px;color:#e6e6e6;font-size:12px;">Alice</div>
<svg class="a" style="left:1858px;top:459px;" width="10" height="6" viewBox="0 0 10 6"><path d="M0.5 0.5 L5.0 5 L9.5 0.5" fill="none" stroke="#cfcfcf" stroke-width="1"/></svg>
<div class="a" style="left:1880px;top:460px;width:2px;height:2px;background:#cfcfcf;"></div>
<div class="a" style="left:1885px;top:460px;width:2px;height:2px;background:#cfcfcf;"></div>
<div class="a" style="left:1890px;top:460px;width:2px;height:2px;background:#cfcfcf;"></div>
<div class="a" style="left:1598px;top:470px;width:298px;height:14px;background:#2a2a2a;"></div>
<div class="a" style="left:1600px;top:472px;width:18px;height:12px;background:#4a80b0;border-radius:3px 3px 0 0"></div>
<div class="a" style="left:1622px;top:472px;width:18px;height:12px;background:#d8dcb8;border-radius:3px 3px 0 0"></div>
<div class="a" style="left:1644px;top:472px;width:18px;height:12px;background:#f0c060;border-radius:3px 3px 0 0"></div>
<div class="a" style="left:1666px;top:472px;width:18px;height:12px;background:#c8ac98;border-radius:3px 3px 0 0"></div>
<div class="a" style="left:1688px;top:472px;width:18px;height:12px;background:#d86a60;border-radius:3px 3px 0 0"></div>
<div class="a" style="left:1593px;top:484px;width:321px;height:7px;background:#1c1c1c;"></div>
<div class="a" style="left:1593px;top:491px;width:321px;height:20px;background:#1c1c1c;"></div>
<div class="a" style="left:1593px;top:491px;width:38.5px;height:20px;background:#444;border-radius:3px 3px 0 0"></div>
<div class="t" style="left:1598.5px;top:494.0px;height:16px;line-height:16px;color:#e6e6e6;font-size:12px;">Align</div>
<div class="a" style="left:1593px;top:511px;width:321px;height:68.5px;background:#444444;"></div>
<div class="t" style="left:1601px;top:524.5px;height:16px;line-height:16px;color:#e6e6e6;font-size:12px;">Alignment</div>
<div class="t" style="left:1601px;top:552.5px;height:16px;line-height:16px;color:#e6e6e6;font-size:12px;">Distribution</div>
<div class="a" style="left:1790.4px;top:522.3px;width:53px;height:17px;background:#2a2a2a;border-radius:4px;border:1px solid #1e1e1e"></div>
<svg class="a" style="left:1790.4px;top:522.3px;" width="17.666666666666668" height="17" viewBox="0 0 17.666666666666668 17"><rect x="3" y="2.5" width="1.2" height="12" fill="#e0e0e0"/><rect x="5.5" y="5" width="6" height="2" fill="#e0e0e0"/><rect x="5.5" y="10" width="10" height="2" fill="#e0e0e0"/></svg>
<div class="a" style="left:1808.0666666666668px;top:523.3px;width:1px;height:15px;background:#3c3c3c;"></div>
<svg class="a" style="left:1808.0666666666668px;top:522.3px;" width="17.666666666666668" height="17" viewBox="0 0 17.666666666666668 17"><rect x="8.3" y="2.5" width="1.2" height="12" fill="#e0e0e0"/><rect x="4.5" y="5" width="9" height="2" fill="#e0e0e0"/><rect x="3" y="10" width="12" height="2" fill="#e0e0e0"/></svg>
<div class="a" style="left:1825.7333333333333px;top:523.3px;width:1px;height:15px;background:#3c3c3c;"></div>
<svg class="a" style="left:1825.7333333333333px;top:522.3px;" width="17.666666666666668" height="17" viewBox="0 0 17.666666666666668 17"><rect x="14" y="2.5" width="1.2" height="12" fill="#e0e0e0"/><rect x="6.5" y="5" width="6" height="2" fill="#e0e0e0"/><rect x="2.5" y="10" width="10" height="2" fill="#e0e0e0"/></svg>
<div class="a" style="left:1852px;top:522.3px;width:53px;height:17px;background:#2a2a2a;border-radius:4px;border:1px solid #1e1e1e"></div>
<svg class="a" style="left:1852.0px;top:522.3px;" width="17.666666666666668" height="17" viewBox="0 0 17.666666666666668 17"><rect x="2.5" y="2.5" width="12" height="1.2" fill="#e0e0e0"/><rect x="5" y="4.5" width="2" height="10" fill="#e0e0e0"/><rect x="10" y="4.5" width="2" height="6" fill="#e0e0e0"/></svg>
<div class="a" style="left:1869.6666666666667px;top:523.3px;width:1px;height:15px;background:#3c3c3c;"></div>
<svg class="a" style="left:1869.6666666666667px;top:522.3px;" width="17.666666666666668" height="17" viewBox="0 0 17.666666666666668 17"><rect x="2.5" y="8" width="12" height="1.2" fill="#e0e0e0"/><rect x="5" y="3" width="2" height="11" fill="#e0e0e0"/><rect x="10" y="5" width="2" height="7" fill="#e0e0e0"/></svg>
<div class="a" style="left:1887.3333333333333px;top:523.3px;width:1px;height:15px;background:#3c3c3c;"></div>
<svg class="a" style="left:1887.3333333333333px;top:522.3px;" width="17.666666666666668" height="17" viewBox="0 0 17.666666666666668 17"><rect x="2.5" y="14" width="12" height="1.2" fill="#e0e0e0"/><rect x="5" y="8" width="2" height="6" fill="#e0e0e0"/><rect x="10" y="3" width="2" height="11" fill="#e0e0e0"/></svg>
<div class="a" style="left:1790.4px;top:550.8px;width:53px;height:17px;background:#2a2a2a;border-radius:4px;border:1px solid #1e1e1e"></div>
<svg class="a" style="left:1790.4px;top:550.8px;" width="17.666666666666668" height="17" viewBox="0 0 17.666666666666668 17"><rect x="3" y="2.5" width="1.2" height="12" fill="#e0e0e0"/><rect x="13" y="2.5" width="1.2" height="12" fill="#e0e0e0"/><rect x="7.5" y="4.5" width="2" height="8" fill="#e0e0e0"/></svg>
<div class="a" style="left:1808.0666666666668px;top:551.8px;width:1px;height:15px;background:#3c3c3c;"></div>
<svg class="a" style="left:1808.0666666666668px;top:550.8px;" width="17.666666666666668" height="17" viewBox="0 0 17.666666666666668 17"><rect x="2.5" y="2.5" width="12" height="1.2" fill="#e0e0e0"/><rect x="2.5" y="13.5" width="12" height="1.2" fill="#e0e0e0"/><rect x="4.5" y="7.5" width="8" height="2" fill="#e0e0e0"/></svg>
<div class="a" style="left:1825.7333333333333px;top:551.8px;width:1px;height:15px;background:#3c3c3c;"></div>
<svg class="a" style="left:1825.7333333333333px;top:550.8px;" width="17.666666666666668" height="17" viewBox="0 0 17.666666666666668 17"><path d="M3 13 V10 H6 M8 9 V6 H11 M13 5 V3" fill="none" stroke="#e0e0e0" stroke-width="1.2" stroke-dasharray="1.5 1"/></svg>
<div class="a" style="left:1593px;top:579.5px;width:321px;height:5px;background:#1c1c1c;"></div>
<div class="a" style="left:494px;top:580px;width:1420px;height:7px;background:#1c1c1c;"></div>
<div class="a" style="left:494px;top:586.5px;width:1420px;height:21.5px;background:#1c1c1c;"></div>
<div class="a" style="left:494px;top:586.5px;width:89px;height:21.5px;background:#3a3a3a;border-radius:3px 3px 0 0"></div>
<div class="t" style="left:499.6px;top:590.0px;height:16px;line-height:16px;color:#e6e6e6;font-size:12px;">Scene Window</div>
<div class="a" style="left:584px;top:586.5px;width:100px;height:21.5px;background:#242424;border-radius:3px 3px 0 0"></div>
<div class="t" style="left:589.7px;top:590.0px;height:16px;line-height:16px;color:#e6e6e6;font-size:12px;">JavaScript Editor</div>
<div class="a" style="left:685px;top:586.5px;width:112px;height:21.5px;background:#242424;border-radius:3px 3px 0 0"></div>
<div class="t" style="left:690.5px;top:590.0px;height:16px;line-height:16px;color:#e6e6e6;font-size:12px;">Dependency Graph</div>
<div class="a" style="left:494px;top:608px;width:1420px;height:395.75px;background:#2a2a2a;"></div>
<div class="t" style="left:803px;top:612.0px;height:16px;line-height:16px;color:#b8b8b8;font-size:12px;">Composition 1</div>
<svg class="a" style="left:1185px;top:614px;" width="12" height="12" viewBox="0 0 12 12"><path d="M2 2 L10 10 M10 2 L2 10" stroke="#aaa" stroke-width="1.1"/></svg>
<div class="a" style="left:1204px;top:610px;width:705px;height:20px;background:#444;border-radius:3px 3px 0 0"></div>
<div class="t" style="left:1507.7px;top:612.0px;height:16px;line-height:16px;color:#e6e6e6;font-size:12px;">Composition 2</div>
<svg class="a" style="left:1889px;top:614px;" width="12" height="12" viewBox="0 0 12 12"><path d="M2 2 L10 10 M10 2 L2 10" stroke="#bbb" stroke-width="1.1"/></svg>
<div class="a" style="left:494px;top:630.5px;width:490px;height:42.5px;background:#3a3a3a;"></div>
<div class="a" style="left:496.5px;top:632.6px;width:279px;height:19px;background:#262626;border-radius:10px"></div>
<svg class="a" style="left:499.5px;top:635.5px;" width="14" height="14" viewBox="0 0 14 14"><circle cx="5.5" cy="5.5" r="4.3" fill="none" stroke="#d8d8d8" stroke-width="1.2"/><path d="M8.6 8.6 L12 12" stroke="#d8d8d8" stroke-width="2"/></svg>
<div class="t" style="left:520px;top:634.5px;height:16px;line-height:16px;color:#8a8a8a;font-size:12px;">Enter a layer name</div>
<div class="a" style="left:778px;top:633px;width:19.5px;height:18.5px;background:#2c2c2c;border-radius:3px;border:1px solid #1f1f1f;"></div>
<svg class="a" style="left:778px;top:633px;" width="20" height="19" viewBox="0 0 20 19"><path d="M10 4 V15 M4.5 9.5 H15.5" stroke="#e6e6e6" stroke-width="2"/><path d="M15.5 17 L17.5 15 V17Z" fill="#5fd4b0"/></svg>
<div class="a" style="left:822px;top:633px;width:19.5px;height:19px;background:#2c2c2c;border-radius:3px;border:1px solid #1f1f1f;"></div>
<svg class="a" style="left:822px;top:633px;" width="20" height="19" viewBox="0 0 20 19"><circle cx="12.5" cy="6.5" r="4" fill="#e0e0e0"/><circle cx="10" cy="9.5" r="3.8" fill="#999" opacity="0.8"/><circle cx="7.5" cy="12.5" r="3.5" fill="#666" opacity="0.8"/></svg>
<div class="a" style="left:844px;top:633px;width:19.5px;height:19px;background:#2c2c2c;border-radius:3px;border:1px solid #1f1f1f;"></div>
<svg class="a" style="left:844px;top:633px;" width="20" height="19" viewBox="0 0 20 19"><circle cx="5" cy="4.5" r="1.3" fill="#ccc"/><circle cx="12.5" cy="5" r="1.3" fill="#ccc"/><circle cx="4.5" cy="10.5" r="1.3" fill="#ccc"/><path d="M11 8 L12 11 L15 12 L12 13 L11 16 L10 13 L7 12 L10 11Z" fill="#e0e0e0"/><path d="M15.5 17 L17.5 15 V17Z" fill="#5fd4b0"/></svg>
<div class="a" style="left:866px;top:633px;width:19.5px;height:19px;background:#2c2c2c;border-radius:3px;border:1px solid #1f1f1f;"></div>
<svg class="a" style="left:866px;top:633px;" width="20" height="19" viewBox="0 0 20 19"><path d="M3 4.5 H16 M3 9.5 H16 M3 14.5 H16" stroke="#ccc" stroke-width="1" stroke-dasharray="2 1"/><circle cx="9" cy="4.5" r="1.8" fill="#2c2c2c" stroke="#ccc" stroke-width="1"/><circle cx="12" cy="9.5" r="1.8" fill="#2c2c2c" stroke="#ccc" stroke-width="1"/><circle cx="8" cy="14.5" r="1.8" fill="#2c2c2c" stroke="#ccc" stroke-width="1"/><path d="M15.5 17 L17.5 15 V17Z" fill="#5fd4b0"/></svg>
<div class="a" style="left:888px;top:633px;width:94px;height:19px;background:#262626;border-radius:3px"></div>
<div class="t" style="left:893px;top:635.0px;height:16px;line-height:16px;color:#555;font-size:12px;">F</div>
<div class="t" style="left:905px;top:635.0px;height:16px;line-height:16px;color:#e6e6e6;font-size:12px;">0</div>
<svg class="a" style="left:499px;top:656px;" width="12" height="13" viewBox="0 0 12 13"><path d="M3 6 V4 A3 3 0 0 1 9 4 V6" fill="none" stroke="#d0d0d0" stroke-width="1.3"/><rect x="1.5" y="6" width="9" height="7" fill="#d0d0d0"/><rect x="5.5" y="8.5" width="1.5" height="2" fill="#3a3a3a"/></svg>
<svg class="a" style="left:516px;top:658px;" width="15" height="10" viewBox="0 0 15 10"><path d="M1 5 Q7.5 -1 14 5 Q7.5 11 1 5Z" fill="none" stroke="#d0d0d0" stroke-width="1.1"/><circle cx="7.5" cy="5" r="2" fill="#d0d0d0"/></svg>
<svg class="a" style="left:536px;top:656.5px;" width="12" height="13" viewBox="0 0 12 13"><path d="M6 1 L11 3.5 V9.5 L6 12 L1 9.5 V3.5Z M1 3.5 L6 6 L11 3.5 M6 6 V12" fill="none" stroke="#d0d0d0" stroke-width="1"/></svg>
<svg class="a" style="left:554px;top:657px;" width="14" height="12" viewBox="0 0 14 12"><path d="M1 4 H3.5 L7 1 V11 L3.5 8 H1Z" fill="#d0d0d0"/><path d="M9 3.5 Q10.5 6 9 8.5 M11 2 Q13.5 6 11 10" fill="none" stroke="#d0d0d0" stroke-width="1.1"/></svg>
<svg class="a" style="left:575px;top:656px;" width="14" height="14" viewBox="0 0 14 14"><path d="M2 13 L8 7" stroke="#bbb" stroke-width="2"/><path d="M2.5 12.5 L8 7" stroke="#3a3a3a" stroke-width="0.7"/><circle cx="10.5" cy="3.5" r="2.3" fill="#d0d0d0"/><path d="M7 4.5 L9.5 7" stroke="#d0d0d0" stroke-width="1.8"/></svg>
<svg class="a" style="left:592px;top:658px;" width="16" height="10" viewBox="0 0 16 10"><path d="M1 5 L4.5 1 H15 V9 H4.5Z" fill="#d0d0d0"/><circle cx="6" cy="5" r="1.6" fill="#3a3a3a"/></svg>
<div class="t" style="left:649.4px;top:656.0px;height:16px;line-height:16px;color:#e6e6e6;font-size:12px;">Name</div>
<div class="a" style="left:494px;top:673px;width:490px;height:287px;background:#2a2a2a;"></div>
<div class="a" style="left:497px;top:673px;width:471px;height:20px;background:#535540;border-radius:2px"></div>
<div class="a" style="left:497px;top:673px;width:17px;height:20px;background:#46483a;"></div>
<div class="a" style="left:515px;top:674px;width:18px;height:18px;background:#4a4c3c;border-radius:2px"></div>
<svg class="a" style="left:516px;top:675px;" width="16" height="16" viewBox="0 0 16 16"><circle cx="8" cy="8" r="5.3" fill="none" stroke="#a8a898" stroke-width="1"/><path d="M5.5 8 L7.5 10 L11.5 5" fill="none" stroke="#a8a898" stroke-width="1.3"/></svg>
<div class="a" style="left:573px;top:675px;width:16px;height:16px;background:#8fa870;border-radius:2px"></div>
<svg class="a" style="left:593px;top:678px;" width="15" height="10" viewBox="0 0 15 10"><path d="M1 5 L4.5 1 H14 V9 H4.5Z" fill="#9a9a8a"/><circle cx="6" cy="5" r="1.5" fill="#535540"/></svg>
<svg class="a" style="left:645px;top:675px;" width="19" height="16" viewBox="0 0 19 16"><path d="M1 8 Q3.5 1 5.5 7 T10 8 T14.5 8 T18 6" fill="none" stroke="#7fb888" stroke-width="1.1"/></svg>
<div class="t" style="left:667px;top:676.0px;height:16px;line-height:16px;color:#9c9c8c;font-size:12px;"><s>Oscillator [Position.X]</s></div>
<svg class="a" style="left:911px;top:677px;" width="12" height="12" viewBox="0 0 12 12"><circle cx="6" cy="6" r="4.5" fill="none" stroke="#808070" stroke-width="1"/><path d="M3 9 L9 3" stroke="#808070" stroke-width="1"/></svg>
<div class="a" style="left:930px;top:675px;width:20px;height:16px;background:#454735;border-radius:3px"></div>
<svg class="a" style="left:930px;top:675px;" width="20" height="16" viewBox="0 0 20 16"><path d="M3.5 8 L7.5 5 V11Z" fill="#7c7c6c"/><path d="M11.5 5 H13.5 L16.5 8 L13.5 11 H11.5Z" fill="#b050c8"/></svg>
<svg class="a" style="left:955px;top:677px;" width="12" height="12" viewBox="0 0 12 12"><circle cx="6" cy="6" r="5" fill="none" stroke="#808070" stroke-width="1.1"/></svg>
<div class="a" style="left:494px;top:694px;width:476px;height:22px;background:#353535;"></div>
<div class="a" style="left:497px;top:695px;width:17px;height:20px;background:#2a2a2a;border-radius:2px"></div>
<div class="a" style="left:515px;top:695px;width:18px;height:20px;background:#2e2e2e;border-radius:2px"></div>
<svg class="a" style="left:516px;top:699px;" width="16" height="12" viewBox="0 0 16 12"><path d="M1 6 Q8 -1 15 6 Q8 13 1 6Z" fill="none" stroke="#d0d0d0" stroke-width="1.1"/><circle cx="8" cy="6" r="2.2" fill="#d0d0d0"/></svg>
<div class="a" style="left:534px;top:695px;width:18px;height:20px;background:#2a2a2a;border-radius:2px"></div>
<div class="a" style="left:573px;top:697px;width:16px;height:16px;background:#ffe17a;border-radius:2px"></div>
<svg class="a" style="left:593px;top:700px;" width="15" height="10" viewBox="0 0 15 10"><path d="M1 5 L4.5 1 H14 V9 H4.5Z" fill="#cfcfcf"/><circle cx="6" cy="5" r="1.5" fill="#353535"/></svg>
<svg class="a" style="left:647px;top:697px;" width="17" height="17" viewBox="0 0 17 17"><path d="M5 2.5 H11 M5 14.5 H11 M2.5 5 V11 M14.5 5 V11" stroke="#e8d46a" stroke-width="1.1"/><rect x="1.5" y="1.5" width="2.2" height="2.2" fill="#f0f0f0"/><rect x="13.3" y="1.5" width="2.2" height="2.2" fill="#f0f0f0"/><rect x="1.5" y="13.3" width="2.2" height="2.2" fill="#f0f0f0"/><rect x="13.3" y="13.3" width="2.2" height="2.2" fill="#f0f0f0"/></svg>
<div class="t" style="left:667px;top:698.0px;height:16px;line-height:16px;color:#e6e6e6;font-size:12px;">Ellipse Shape</div>
<div class="a" style="left:930px;top:697px;width:20px;height:18px;background:#2a2a2a;border-radius:3px"></div>
<div class="a" style="left:930px;top:697px;width:10px;height:18px;border:1px solid #b09a50;border-radius:3px 0 0 3px"></div>
<svg class="a" style="left:930px;top:697px;" width="20" height="18" viewBox="0 0 20 18"><path d="M3.5 9 L7.5 6 V12Z" fill="#d8c07a"/><path d="M11.5 6 H13.5 L16.5 9 L13.5 12 H11.5Z" fill="#666"/></svg>
<svg class="a" style="left:955px;top:699px;" width="12" height="12" viewBox="0 0 12 12"><circle cx="6" cy="6" r="5" fill="none" stroke="#8a8a8a" stroke-width="1.1"/></svg>
<div class="a" style="left:974px;top:672.6px;width:8px;height:287.4px;background:#4a4a4a;border-radius:4px"></div>
<div class="a" style="left:495px;top:964.4px;width:473px;height:9.4px;background:#4a4a4a;border-radius:5px"></div>
<div class="a" style="left:495.7px;top:668px;width:478px;height:29px;border:3px solid #b8e81c"></div>
<div class="a" style="left:494px;top:975.6px;width:490px;height:22px;background:#404040;"></div>
<div class="a" style="left:497px;top:977px;width:19px;height:19px;background:#2e2e2e;border-radius:3px;border:1px solid #1f1f1f;"></div>
<svg class="a" style="left:498px;top:980px;" width="16" height="12" viewBox="0 0 16 12"><path d="M1 6 L5 2 H15 V10 H5Z" fill="#d8d8d8"/><circle cx="6.5" cy="6" r="1.6" fill="#2e2e2e"/></svg>
<div class="t" style="left:520px;top:980.0px;height:16px;line-height:16px;color:#e6e6e6;font-size:12px;">1 selected</div>
<div class="a" style="left:776px;top:977px;width:18px;height:19px;background:#2e2e2e;border-radius:3px;border:1px solid #1f1f1f;"></div>
<svg class="a" style="left:776px;top:977px;" width="18" height="19" viewBox="0 0 18 19"><rect x="3.5" y="4" width="11" height="11" fill="none" stroke="#d0d0d0" stroke-width="1.1"/><rect x="7" y="7.5" width="4" height="4" fill="#d0d0d0"/></svg>
<div class="a" style="left:799px;top:977px;width:182px;height:19.5px;background:#555;border-radius:3px;border:1px solid #2c2c2c"></div>
<div class="a" style="left:800px;top:978px;width:85px;height:17.5px;background:#2a2a2a;border-radius:3px"></div>
<svg class="a" style="left:804px;top:979px;" width="16" height="16" viewBox="0 0 16 16"><rect x="3" y="3" width="10" height="1.8" fill="#3bd07a"/><rect x="5" y="7" width="8" height="1.8" fill="#3bd07a"/><rect x="3" y="11" width="10" height="1.8" fill="#3bd07a"/></svg>
<div class="t" style="left:821px;top:980.0px;height:16px;line-height:16px;color:#e6e6e6;font-size:12px;">Time Editor</div>
<svg class="a" style="left:892px;top:979px;" width="16" height="16" viewBox="0 0 16 16"><path d="M3 2 V14 H15" fill="none" stroke="#ccc" stroke-width="1"/><path d="M3 13 L12 5" stroke="#ccc" stroke-width="1"/></svg>
<div class="t" style="left:910.5px;top:980.0px;height:16px;line-height:16px;color:#e6e6e6;font-size:12px;">Graph Editor</div>
<div class="a" style="left:984px;top:630px;width:4.4px;height:345.6px;background:#262626;"></div>
<div class="a" style="left:988.4px;top:630px;width:12.3px;height:345.6px;background:#1e1e1e;"></div>
<div class="a" style="left:986px;top:807.5px;width:2px;height:2px;background:#777;"></div>
<div class="a" style="left:986px;top:810.5px;width:2px;height:2px;background:#777;"></div>
<div class="a" style="left:986px;top:813.5px;width:2px;height:2px;background:#777;"></div>
<div class="a" style="left:986px;top:816.5px;width:2px;height:2px;background:#777;"></div>
<div class="a" style="left:986px;top:819.5px;width:2px;height:2px;background:#777;"></div>
<div class="a" style="left:986px;top:822.5px;width:2px;height:2px;background:#777;"></div>
<div class="a" style="left:1000.7px;top:654px;width:913.3px;height:321.6px;background:#292929;"></div>
<div class="a" style="left:988.4px;top:630px;width:525.6px;height:1px;background:#1e1e1e;"></div>
<div class="a" style="left:991px;top:631px;width:923px;height:23px;background:#242424;"></div>
<svg class="a" style="left:991px;top:630px;" width="914" height="25" viewBox="0 0 914 25"><rect x="8.0" y="16.5" width="1.2" height="7.5" fill="#888"/><rect x="18.9" y="20" width="1" height="4" fill="#777"/><rect x="29.7" y="20" width="1" height="4" fill="#777"/><rect x="40.6" y="20" width="1" height="4" fill="#777"/><rect x="51.5" y="20" width="1" height="4" fill="#777"/><rect x="62.3" y="16.5" width="1.2" height="7.5" fill="#888"/><rect x="73.2" y="20" width="1" height="4" fill="#777"/><rect x="84.1" y="20" width="1" height="4" fill="#777"/><rect x="95.0" y="20" width="1" height="4" fill="#777"/><rect x="105.8" y="20" width="1" height="4" fill="#777"/><rect x="116.7" y="16.5" width="1.2" height="7.5" fill="#888"/><rect x="127.6" y="20" width="1" height="4" fill="#777"/><rect x="138.4" y="20" width="1" height="4" fill="#777"/><rect x="149.3" y="20" width="1" height="4" fill="#777"/><rect x="160.2" y="20" width="1" height="4" fill="#777"/><rect x="171.0" y="16.5" width="1.2" height="7.5" fill="#888"/><rect x="181.9" y="20" width="1" height="4" fill="#777"/><rect x="192.8" y="20" width="1" height="4" fill="#777"/><rect x="203.6" y="20" width="1" height="4" fill="#777"/><rect x="214.5" y="20" width="1" height="4" fill="#777"/><rect x="225.4" y="16.5" width="1.2" height="7.5" fill="#888"/><rect x="236.2" y="20" width="1" height="4" fill="#777"/><rect x="247.1" y="20" width="1" height="4" fill="#777"/><rect x="258.0" y="20" width="1" height="4" fill="#777"/><rect x="268.8" y="20" width="1" height="4" fill="#777"/><rect x="279.7" y="16.5" width="1.2" height="7.5" fill="#888"/><rect x="290.6" y="20" width="1" height="4" fill="#777"/><rect x="301.5" y="20" width="1" height="4" fill="#777"/><rect x="312.3" y="20" width="1" height="4" fill="#777"/><rect x="323.2" y="20" width="1" height="4" fill="#777"/><rect x="334.1" y="16.5" width="1.2" height="7.5" fill="#888"/><rect x="344.9" y="20" width="1" height="4" fill="#777"/><rect x="355.8" y="20" width="1" height="4" fill="#777"/><rect x="366.7" y="20" width="1" height="4" fill="#777"/><rect x="377.5" y="20" width="1" height="4" fill="#777"/><rect x="388.4" y="16.5" width="1.2" height="7.5" fill="#888"/><rect x="399.3" y="20" width="1" height="4" fill="#777"/><rect x="410.1" y="20" width="1" height="4" fill="#777"/><rect x="421.0" y="20" width="1" height="4" fill="#777"/><rect x="431.9" y="20" width="1" height="4" fill="#777"/><rect x="442.8" y="16.5" width="1.2" height="7.5" fill="#888"/><rect x="453.6" y="20" width="1" height="4" fill="#777"/><rect x="464.5" y="20" width="1" height="4" fill="#777"/><rect x="475.4" y="20" width="1" height="4" fill="#777"/><rect x="486.2" y="20" width="1" height="4" fill="#777"/><rect x="497.1" y="16.5" width="1.2" height="7.5" fill="#888"/><rect x="508.0" y="20" width="1" height="4" fill="#777"/><rect x="518.8" y="20" width="1" height="4" fill="#777"/><rect x="529.7" y="20" width="1" height="4" fill="#777"/><rect x="540.6" y="20" width="1" height="4" fill="#777"/><rect x="551.4" y="16.5" width="1.2" height="7.5" fill="#888"/><rect x="562.3" y="20" width="1" height="4" fill="#777"/><rect x="573.2" y="20" width="1" height="4" fill="#777"/><rect x="584.0" y="20" width="1" height="4" fill="#777"/><rect x="594.9" y="20" width="1" height="4" fill="#777"/><rect x="605.8" y="16.5" width="1.2" height="7.5" fill="#888"/><rect x="616.7" y="20" width="1" height="4" fill="#777"/><rect x="627.5" y="20" width="1" height="4" fill="#777"/><rect x="638.4" y="20" width="1" height="4" fill="#777"/><rect x="649.3" y="20" width="1" height="4" fill="#777"/><rect x="660.1" y="16.5" width="1.2" height="7.5" fill="#888"/><rect x="671.0" y="20" width="1" height="4" fill="#777"/><rect x="681.9" y="20" width="1" height="4" fill="#777"/><rect x="692.7" y="20" width="1" height="4" fill="#777"/><rect x="703.6" y="20" width="1" height="4" fill="#777"/><rect x="714.5" y="16.5" width="1.2" height="7.5" fill="#888"/><rect x="725.3" y="20" width="1" height="4" fill="#777"/><rect x="736.2" y="20" width="1" height="4" fill="#777"/><rect x="747.1" y="20" width="1" height="4" fill="#777"/><rect x="757.9" y="20" width="1" height="4" fill="#777"/><rect x="768.8" y="16.5" width="1.2" height="7.5" fill="#888"/><rect x="779.7" y="20" width="1" height="4" fill="#777"/><rect x="790.6" y="20" width="1" height="4" fill="#777"/><rect x="801.4" y="20" width="1" height="4" fill="#777"/><rect x="812.3" y="20" width="1" height="4" fill="#777"/><rect x="823.2" y="16.5" width="1.2" height="7.5" fill="#888"/><rect x="834.0" y="20" width="1" height="4" fill="#777"/><rect x="844.9" y="20" width="1" height="4" fill="#777"/><rect x="855.8" y="20" width="1" height="4" fill="#777"/><rect x="866.6" y="20" width="1" height="4" fill="#777"/><rect x="877.5" y="16.5" width="1.2" height="7.5" fill="#888"/><rect x="888.4" y="20" width="1" height="4" fill="#777"/><rect x="899.2" y="20" width="1" height="4" fill="#777"/><rect x="910.1" y="20" width="1" height="4" fill="#777"/></svg>
<div class="t" style="left:969.5px;top:631px;width:60px;height:17px;line-height:17px;text-align:center;font-size:12px;color:#e0e0e0">0</div>
<div class="t" style="left:1023.84375px;top:631px;width:60px;height:17px;line-height:17px;text-align:center;font-size:12px;color:#e0e0e0">15</div>
<div class="t" style="left:1078.1875px;top:631px;width:60px;height:17px;line-height:17px;text-align:center;font-size:12px;color:#e0e0e0">30</div>
<div class="t" style="left:1132.53125px;top:631px;width:60px;height:17px;line-height:17px;text-align:center;font-size:12px;color:#e0e0e0">45</div>
<div class="t" style="left:1186.875px;top:631px;width:60px;height:17px;line-height:17px;text-align:center;font-size:12px;color:#e0e0e0">60</div>
<div class="t" style="left:1241.21875px;top:631px;width:60px;height:17px;line-height:17px;text-align:center;font-size:12px;color:#e0e0e0">75</div>
<div class="t" style="left:1295.5625px;top:631px;width:60px;height:17px;line-height:17px;text-align:center;font-size:12px;color:#e0e0e0">90</div>
<div class="t" style="left:1349.90625px;top:631px;width:60px;height:17px;line-height:17px;text-align:center;font-size:12px;color:#e0e0e0">105</div>
<div class="t" style="left:1404.25px;top:631px;width:60px;height:17px;line-height:17px;text-align:center;font-size:12px;color:#e0e0e0">120</div>
<div class="t" style="left:1458.59375px;top:631px;width:60px;height:17px;line-height:17px;text-align:center;font-size:12px;color:#e0e0e0">135</div>
<div class="t" style="left:1512.9375px;top:631px;width:60px;height:17px;line-height:17px;text-align:center;font-size:12px;color:#e0e0e0">150</div>
<div class="t" style="left:1567.28125px;top:631px;width:60px;height:17px;line-height:17px;text-align:center;font-size:12px;color:#e0e0e0">165</div>
<div class="t" style="left:1621.625px;top:631px;width:60px;height:17px;line-height:17px;text-align:center;font-size:12px;color:#e0e0e0">180</div>
<div class="t" style="left:1675.96875px;top:631px;width:60px;height:17px;line-height:17px;text-align:center;font-size:12px;color:#e0e0e0">195</div>
<div class="t" style="left:1730.3125px;top:631px;width:60px;height:17px;line-height:17px;text-align:center;font-size:12px;color:#e0e0e0">210</div>
<div class="t" style="left:1784.65625px;top:631px;width:60px;height:17px;line-height:17px;text-align:center;font-size:12px;color:#e0e0e0">225</div>
<div class="t" style="left:1839.0px;top:631px;width:60px;height:17px;line-height:17px;text-align:center;font-size:12px;color:#e0e0e0">240</div>
<div class="a" style="left:1000.5px;top:654.8px;width:904.5px;height:15.5px;background:#444;"></div>
<div class="a" style="left:995px;top:653px;width:5.4px;height:18px;background:#72c8b0;border-radius:1px"></div>
<div class="a" style="left:1905px;top:653px;width:5.3px;height:18px;background:#72c8b0;border-radius:2px"></div>
<svg class="a" style="left:992.7px;top:643.5px;" width="15" height="10" viewBox="0 0 15 10"><path d="M0 0 H14.4 L7.2 9.2Z" fill="#72c8b0"/></svg>
<div class="a" style="left:999px;top:671px;width:1.7px;height:289px;background:#4a8a78;"></div>
<div class="a" style="left:1000.7px;top:674px;width:904.3px;height:18px;border-top:1.2px solid #f8f8f0;border-bottom:1.2px solid #f8f8f0;background-color:#e4f9a6;background-image:radial-gradient(circle,rgba(145,200,95,0.95) 0.75px,transparent 1.25px),repeating-linear-gradient(60deg,rgba(255,255,235,0.3) 0 16px,rgba(160,210,100,0.22) 16px 34px);background-size:3.2px 3.2px,auto"></div>
<div class="t" style="left:1008.7px;top:675.3px;height:16px;line-height:16px;color:#1a1a1a;font-size:12px;">Oscillator [Position.X]</div>
<div class="a" style="left:1001px;top:695.9px;width:904px;height:17.9px;background:#ffe47a;border-radius:3px"></div>
<div class="t" style="left:1008.7px;top:697.0px;height:16px;line-height:16px;color:#111;font-size:12px;">Ellipse Shape</div>
<div class="a" style="left:1905px;top:672px;width:8px;height:290px;background:#1f1f1f;"></div>
<div class="a" style="left:993px;top:964.4px;width:919px;height:9.4px;background:#4a4a4a;border-radius:5px"></div>
<div class="a" style="left:991px;top:975.6px;width:923px;height:22px;background:#404040;"></div>
<div class="a" style="left:995px;top:977px;width:16px;height:19px;background:#2e2e2e;border-radius:3px;border:1px solid #1f1f1f;"></div>
<svg class="a" style="left:995px;top:977px;" width="16" height="19" viewBox="0 0 16 19"><rect x="2.5" y="4" width="11" height="1.4" fill="#ddd"/><rect x="2.5" y="8" width="3" height="1.4" fill="#ddd"/><rect x="6.5" y="8" width="7" height="1.4" fill="#ddd"/><rect x="2.5" y="12" width="2" height="1.4" fill="#ddd"/><rect x="6" y="12" width="2" height="1.4" fill="#ddd"/><path d="M12.5 16 L14.5 14 V16Z" fill="#5fd4b0"/></svg>
<div class="a" style="left:1015px;top:977.5px;width:150px;height:18.5px;background:#2a2a2a;border-radius:3px"></div>
<div class="t" style="left:1017px;top:979.5px;height:16px;line-height:16px;color:#e6e6e6;font-size:12px;">Default Keyframe Layer</div>
<div class="a" style="left:1171px;top:977.5px;width:69.5px;height:18.5px;background:#2e2e2e;border-radius:3px"></div>
<div class="t" style="left:1176px;top:979.5px;height:16px;line-height:16px;color:#555;font-size:12px;">F</div>
<div class="t" style="left:1187px;top:979.5px;height:16px;line-height:16px;color:#aaa;font-size:12px;">-</div>
<div class="t" style="left:1247px;top:979.5px;height:16px;line-height:16px;color:#e6e6e6;font-size:12px;">Align:</div>
<div class="a" style="left:1283px;top:977.5px;width:52.7px;height:18.5px;background:#2a2a2a;border-radius:4px;border:1px solid #1e1e1e"></div>
<div class="a" style="left:1300.6px;top:978.5px;width:1px;height:16.5px;background:#1e1e1e;"></div>
<div class="a" style="left:1318.2px;top:978.5px;width:1px;height:16.5px;background:#1e1e1e;"></div>
<svg class="a" style="left:1283px;top:977.5px;" width="53" height="18" viewBox="0 0 53 18"><path d="M3.4 2.5 V16 M27.5 2 V16.5 M50.7 2.5 V16" stroke="#dcdcdc" stroke-width="1"/><rect x="6.5" y="5.7" width="2" height="2" fill="#5fd4b0"/><rect x="6.5" y="11.7" width="2" height="2" fill="#5fd4b0"/><path d="M9.5 6.7 H12.5 M9.5 12.7 H16" stroke="#dcdcdc" stroke-width="1.3"/><circle cx="27.5" cy="6.7" r="1.4" fill="#5fd4b0"/><circle cx="27.5" cy="12.7" r="1.4" fill="#5fd4b0"/><path d="M23.5 6.7 H25 M30 6.7 H31.5 M21.5 12.7 H24.8 M30.2 12.7 H33.5" stroke="#dcdcdc" stroke-width="1.3"/><rect x="45.5" y="5.7" width="2" height="2" fill="#5fd4b0"/><rect x="45.5" y="11.7" width="2" height="2" fill="#5fd4b0"/><path d="M41 6.7 H44 M37.5 12.7 H44" stroke="#dcdcdc" stroke-width="1.3"/></svg>
<div class="a" style="left:1340px;top:977.5px;width:17.5px;height:18.5px;background:#2e2e2e;border-radius:3px;border:1px solid #1f1f1f;"></div>
<svg class="a" style="left:1340px;top:977.5px;" width="18" height="18" viewBox="0 0 18 18"><rect x="2.5" y="2.5" width="2.5" height="2.5" fill="none" stroke="#aaa" stroke-width="0.8"/><rect x="13" y="2.5" width="2.5" height="2.5" fill="none" stroke="#aaa" stroke-width="0.8"/><rect x="2.5" y="13" width="2.5" height="2.5" fill="none" stroke="#aaa" stroke-width="0.8"/><rect x="13" y="13" width="2.5" height="2.5" fill="none" stroke="#aaa" stroke-width="0.8"/><path d="M6 3.7 H12 M6 14.3 H12 M3.7 6 V12 M14.3 6 V12" stroke="#aaa" stroke-width="0.9"/><rect x="8.2" y="8.2" width="1.6" height="1.6" fill="#ddd"/></svg>
<div class="a" style="left:1361px;top:977.5px;width:31px;height:18.5px;background:#2c2c2c;border-radius:4px;border:1px solid #1e1e1e"></div>
<div class="a" style="left:1362px;top:978.5px;width:19px;height:16.5px;background:#404040;border-radius:3px 0 0 3px"></div>
<svg class="a" style="left:1362px;top:977.5px;" width="19" height="18" viewBox="0 0 19 18"><path d="M6.8 3.5 L4.3 6 A4.7 4.7 0 0 0 11 12.7 L13.5 10.2" fill="none" stroke="#dadada" stroke-width="2.3"/></svg>
<div class="a" style="left:1381px;top:978.5px;width:1px;height:16.5px;background:#1e1e1e;"></div>
<svg class="a" style="left:1381px;top:978px;" width="10" height="17" viewBox="0 0 10 17"><path d="M3 5 L7 8.5 L3 12Z" fill="none" stroke="#999" stroke-width="0.9"/></svg>
<div class="a" style="left:1395.7px;top:977.5px;width:31px;height:18.5px;background:#2c2c2c;border-radius:4px;border:1px solid #1e1e1e"></div>
<div class="a" style="left:1396.7px;top:978.5px;width:19px;height:16.5px;background:#404040;border-radius:3px 0 0 3px"></div>
<svg class="a" style="left:1396.7px;top:977.5px;" width="19" height="18" viewBox="0 0 19 18"><path d="M7.8 3.5 V15.5 M11 7 V12" stroke="#ddd" stroke-width="1.1"/><path d="M3 9.5 H5.8 M13 9.5 H17" stroke="#ddd" stroke-width="1.1"/></svg>
<div class="a" style="left:1415.7px;top:978.5px;width:1px;height:16.5px;background:#1e1e1e;"></div>
<svg class="a" style="left:1415.7px;top:978px;" width="10" height="17" viewBox="0 0 10 17"><path d="M3 5 L7 8.5 L3 12Z" fill="none" stroke="#999" stroke-width="0.9"/></svg>
<svg class="a" style="left:1742px;top:978px;" width="17" height="17" viewBox="0 0 17 17"><circle cx="7" cy="7" r="5.5" fill="none" stroke="#ddd" stroke-width="1.1"/><path d="M4.5 7 H9.5" stroke="#ddd" stroke-width="1.1"/><path d="M11 11 L15 15" stroke="#ddd" stroke-width="1.8"/></svg>
<div class="a" style="left:1767px;top:985.5px;width:115px;height:3px;background:#3a3a3a;border-radius:2px"></div>
<div class="a" style="left:1761.5px;top:981.5px;width:11px;height:11px;border-radius:50%;background:#7fd8bd;border:2px solid #58b898"></div>
<svg class="a" style="left:1886px;top:978px;" width="17" height="17" viewBox="0 0 17 17"><circle cx="7" cy="7" r="5.5" fill="none" stroke="#ddd" stroke-width="1.1"/><path d="M4.5 7 H9.5 M7 4.5 V9.5" stroke="#ddd" stroke-width="1.1"/><path d="M11 11 L15 15" stroke="#ddd" stroke-width="1.8"/></svg>
<div class="a" style="left:1905px;top:653px;width:5.3px;height:18px;background:#72c8b0;border-radius:2px"></div>
<div class="a" style="left:494px;top:997.5px;width:1420px;height:6.25px;background:#141414;"></div>
<div class="a" style="left:494px;top:1003.75px;width:1420px;height:21.85px;background:#3a3a3a;"></div>
<div class="a" style="left:494px;top:1025.6px;width:1426px;height:5.4px;background:#1c1c1c;"></div>
<div class="a" style="left:498.5px;top:1009px;width:2px;height:2px;background:#888;"></div>
<div class="a" style="left:498.5px;top:1013px;width:2px;height:2px;background:#888;"></div>
<div class="a" style="left:498.5px;top:1017px;width:2px;height:2px;background:#888;"></div>
<div class="a" style="left:507.5px;top:1006.5px;width:17px;height:16.5px;background:#2a2a2a;border-radius:3px;border:1px solid #1f1f1f;"></div>
<svg class="a" style="left:508px;top:1007px;" width="16" height="16" viewBox="0 0 16 16"><path d="M2 2 H14 V12 H13 V15 L10 12 H2Z" fill="#e8e8e8"/><rect x="3.5" y="4" width="9" height="1.2" fill="#2a2a2a"/><rect x="3.5" y="6.5" width="9" height="1.2" fill="#2a2a2a"/><rect x="3.5" y="9" width="9" height="1.2" fill="#2a2a2a"/><path d="M13 15.5 L15.5 13 V15.5Z" fill="#5fd4b0"/></svg>
<div class="a" style="left:528px;top:1008px;width:18px;height:14px;background:#cdb86c;border-radius:2px"></div>
<div class="t" style="left:533px;top:1007.5px;height:16px;line-height:16px;color:#3a3a3a;font-size:12px;">0</div>
<div class="a" style="left:553.5px;top:1011.5px;width:7px;height:7px;border-radius:50%;background:#d0b870"></div>
<div class="t" style="left:565px;top:1007.5px;height:16px;line-height:16px;color:#e6e6e6;font-size:12px;">You are working in an unsaved scene.</div>
<div class="a" style="left:1609.8px;top:1006.4px;width:79.5px;height:18px;background:#d6bf72;border-radius:2px"></div>
<div class="t" style="left:1614px;top:1007.5px;height:16px;line-height:16px;color:#2a2a2a;font-size:12px;">Feedback</div>
<svg class="a" style="left:1668px;top:1007px;" width="16" height="16" viewBox="0 0 16 16"><rect x="2" y="2" width="10" height="12" fill="#f4f4f4"/><path d="M6 12 L13 3 L14.5 4.5 L7.5 13Z" fill="#e07070"/></svg>
<div class="a" style="left:1693px;top:1006.4px;width:108.8px;height:18px;background:#3ccf72;border-radius:2px"></div>
<div class="t" style="left:1698px;top:1007.5px;height:16px;line-height:16px;color:#1e2a1e;font-size:12px;">Upgrade to Pro</div>
<svg class="a" style="left:1778px;top:1008px;" width="18" height="14" viewBox="0 0 18 14"><path d="M2 6 Q3 13 7 13 L9 8 Q6 4 3 5Z M16 6 Q15 13 11 13 L9 8 Q12 4 15 5Z" fill="#f0c030"/></svg>
<div class="a" style="left:1804.8px;top:1006.4px;width:105.7px;height:18px;background:#3aa8f2;border-radius:2px"></div>
<div class="t" style="left:1810px;top:1007.5px;height:16px;line-height:16px;color:#10202e;font-size:12px;">Tips and Tricks</div>
<svg class="a" style="left:1889px;top:1007px;" width="16" height="16" viewBox="0 0 16 16"><path d="M13 2 Q8 3 5 9 L8 12 Q14 8 13 2Z" fill="#e8e8e8"/><circle cx="10" cy="6" r="1.4" fill="#3a6ad0"/><path d="M5 9 L2 10 L4 12Z M8 12 L7 15 L5 13Z" fill="#e05050"/></svg></body></html>
